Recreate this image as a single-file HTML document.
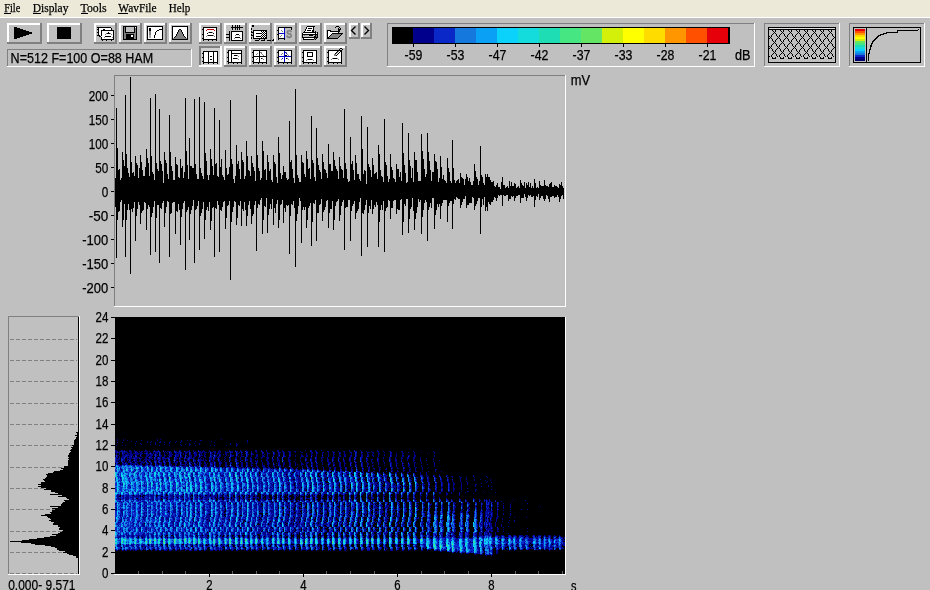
<!DOCTYPE html>
<html><head><meta charset="utf-8"><style>
html,body{margin:0;padding:0;width:930px;height:590px;overflow:hidden;background:#c0c0c0}
svg{display:block;font-family:"Liberation Sans",sans-serif;will-change:transform}
text{stroke:#000;stroke-width:0.25px}
</style></head><body>
<svg width="930" height="590" viewBox="0 0 930 590" shape-rendering="crispEdges">
<rect x="0" y="0" width="930" height="590" fill="#c0c0c0"/>
<rect x="0" y="0" width="930" height="17" fill="#ece9d8"/>
<rect x="0" y="17" width="930" height="1" fill="#fff"/>
<text x="4.3" y="12" font-family="Liberation Serif" font-size="13" textLength="16" lengthAdjust="spacingAndGlyphs">File</text>
<rect x="4" y="13" width="7" height="1" fill="#000"/>
<text x="32.7" y="12" font-family="Liberation Serif" font-size="13" textLength="35.7" lengthAdjust="spacingAndGlyphs">Display</text>
<rect x="33" y="13" width="8" height="1" fill="#000"/>
<text x="80.6" y="12" font-family="Liberation Serif" font-size="13" textLength="26" lengthAdjust="spacingAndGlyphs">Tools</text>
<rect x="81" y="13" width="7" height="1" fill="#000"/>
<text x="118.3" y="12" font-family="Liberation Serif" font-size="13" textLength="38.3" lengthAdjust="spacingAndGlyphs">WavFile</text>
<rect x="118" y="13" width="10" height="1" fill="#000"/>
<text x="168.8" y="12" font-family="Liberation Serif" font-size="13" textLength="21.5" lengthAdjust="spacingAndGlyphs">Help</text>
<rect x="7" y="23" width="35" height="21" fill="#c0c0c0"/>
<rect x="7" y="23" width="35" height="2" fill="#fff"/>
<rect x="7" y="23" width="2" height="21" fill="#fff"/>
<rect x="7" y="42" width="35" height="2" fill="#808080"/>
<rect x="40" y="23" width="2" height="21" fill="#808080"/>
<rect x="47" y="23" width="35" height="21" fill="#c0c0c0"/>
<rect x="47" y="23" width="35" height="2" fill="#fff"/>
<rect x="47" y="23" width="2" height="21" fill="#fff"/>
<rect x="47" y="42" width="35" height="2" fill="#808080"/>
<rect x="80" y="23" width="2" height="21" fill="#808080"/>
<path d="M14 27h3v1h3v1h3v1h3v1h3v1h3v2h-3v1h-3v1h-3v1h-3v1h-3v1h-3z" fill="#000"/>
<rect x="57" y="27" width="14" height="12" fill="#000"/>
<rect x="94" y="23" width="23" height="21" fill="#c0c0c0"/>
<rect x="94" y="23" width="23" height="2" fill="#fff"/>
<rect x="94" y="23" width="2" height="21" fill="#fff"/>
<rect x="94" y="42" width="23" height="2" fill="#808080"/>
<rect x="115" y="23" width="2" height="21" fill="#808080"/>
<rect x="119" y="23" width="23" height="21" fill="#c0c0c0"/>
<rect x="119" y="23" width="23" height="2" fill="#fff"/>
<rect x="119" y="23" width="2" height="21" fill="#fff"/>
<rect x="119" y="42" width="23" height="2" fill="#808080"/>
<rect x="140" y="23" width="2" height="21" fill="#808080"/>
<rect x="144" y="23" width="23" height="21" fill="#c0c0c0"/>
<rect x="144" y="23" width="23" height="2" fill="#fff"/>
<rect x="144" y="23" width="2" height="21" fill="#fff"/>
<rect x="144" y="42" width="23" height="2" fill="#808080"/>
<rect x="165" y="23" width="2" height="21" fill="#808080"/>
<rect x="169" y="23" width="23" height="21" fill="#c0c0c0"/>
<rect x="169" y="23" width="23" height="2" fill="#fff"/>
<rect x="169" y="23" width="2" height="21" fill="#fff"/>
<rect x="169" y="42" width="23" height="2" fill="#808080"/>
<rect x="190" y="23" width="2" height="21" fill="#808080"/>
<rect x="199" y="23" width="23" height="21" fill="#c0c0c0"/>
<rect x="199" y="23" width="23" height="2" fill="#fff"/>
<rect x="199" y="23" width="2" height="21" fill="#fff"/>
<rect x="199" y="42" width="23" height="2" fill="#808080"/>
<rect x="220" y="23" width="2" height="21" fill="#808080"/>
<rect x="224" y="23" width="23" height="21" fill="#c0c0c0"/>
<rect x="224" y="23" width="23" height="2" fill="#fff"/>
<rect x="224" y="23" width="2" height="21" fill="#fff"/>
<rect x="224" y="42" width="23" height="2" fill="#808080"/>
<rect x="245" y="23" width="2" height="21" fill="#808080"/>
<rect x="249" y="23" width="23" height="21" fill="#c0c0c0"/>
<rect x="249" y="23" width="23" height="2" fill="#fff"/>
<rect x="249" y="23" width="2" height="21" fill="#fff"/>
<rect x="249" y="42" width="23" height="2" fill="#808080"/>
<rect x="270" y="23" width="2" height="21" fill="#808080"/>
<rect x="274" y="23" width="23" height="21" fill="#c0c0c0"/>
<rect x="274" y="23" width="23" height="2" fill="#fff"/>
<rect x="274" y="23" width="2" height="21" fill="#fff"/>
<rect x="274" y="42" width="23" height="2" fill="#808080"/>
<rect x="295" y="23" width="2" height="21" fill="#808080"/>
<rect x="299" y="23" width="23" height="21" fill="#c0c0c0"/>
<rect x="299" y="23" width="23" height="2" fill="#fff"/>
<rect x="299" y="23" width="2" height="21" fill="#fff"/>
<rect x="299" y="42" width="23" height="2" fill="#808080"/>
<rect x="320" y="23" width="2" height="21" fill="#808080"/>
<rect x="324" y="23" width="23" height="21" fill="#c0c0c0"/>
<rect x="324" y="23" width="23" height="2" fill="#fff"/>
<rect x="324" y="23" width="2" height="21" fill="#fff"/>
<rect x="324" y="42" width="23" height="2" fill="#808080"/>
<rect x="345" y="23" width="2" height="21" fill="#808080"/>
<rect x="349" y="23" width="11" height="16" fill="#c0c0c0"/>
<rect x="349" y="23" width="11" height="2" fill="#fff"/>
<rect x="349" y="23" width="2" height="16" fill="#fff"/>
<rect x="349" y="37" width="11" height="2" fill="#808080"/>
<rect x="358" y="23" width="2" height="16" fill="#808080"/>
<rect x="361" y="23" width="11" height="16" fill="#c0c0c0"/>
<rect x="361" y="23" width="11" height="2" fill="#fff"/>
<rect x="361" y="23" width="2" height="16" fill="#fff"/>
<rect x="361" y="37" width="11" height="2" fill="#808080"/>
<rect x="370" y="23" width="2" height="16" fill="#808080"/>
<rect x="199" y="46" width="23" height="21" fill="#d0d0d0"/>
<rect x="199" y="46" width="23" height="2" fill="#808080"/>
<rect x="199" y="46" width="2" height="21" fill="#808080"/>
<rect x="199" y="65" width="23" height="2" fill="#fff"/>
<rect x="220" y="46" width="2" height="21" fill="#fff"/>
<rect x="224" y="46" width="23" height="21" fill="#c0c0c0"/>
<rect x="224" y="46" width="23" height="2" fill="#fff"/>
<rect x="224" y="46" width="2" height="21" fill="#fff"/>
<rect x="224" y="65" width="23" height="2" fill="#808080"/>
<rect x="245" y="46" width="2" height="21" fill="#808080"/>
<rect x="249" y="46" width="23" height="21" fill="#c0c0c0"/>
<rect x="249" y="46" width="23" height="2" fill="#fff"/>
<rect x="249" y="46" width="2" height="21" fill="#fff"/>
<rect x="249" y="65" width="23" height="2" fill="#808080"/>
<rect x="270" y="46" width="2" height="21" fill="#808080"/>
<rect x="274" y="46" width="23" height="21" fill="#c0c0c0"/>
<rect x="274" y="46" width="23" height="2" fill="#fff"/>
<rect x="274" y="46" width="2" height="21" fill="#fff"/>
<rect x="274" y="65" width="23" height="2" fill="#808080"/>
<rect x="295" y="46" width="2" height="21" fill="#808080"/>
<rect x="299" y="46" width="23" height="21" fill="#c0c0c0"/>
<rect x="299" y="46" width="23" height="2" fill="#fff"/>
<rect x="299" y="46" width="2" height="21" fill="#fff"/>
<rect x="299" y="65" width="23" height="2" fill="#808080"/>
<rect x="320" y="46" width="2" height="21" fill="#808080"/>
<rect x="324" y="46" width="23" height="21" fill="#c0c0c0"/>
<rect x="324" y="46" width="23" height="2" fill="#fff"/>
<rect x="324" y="46" width="2" height="21" fill="#fff"/>
<rect x="324" y="65" width="23" height="2" fill="#808080"/>
<rect x="345" y="46" width="2" height="21" fill="#808080"/>
<rect x="7" y="49" width="185" height="18" fill="#c0c0c0"/>
<rect x="7" y="49" width="185" height="1" fill="#808080"/>
<rect x="7" y="49" width="1" height="18" fill="#808080"/>
<rect x="7" y="66" width="185" height="1" fill="#fff"/>
<rect x="191" y="49" width="1" height="18" fill="#fff"/>
<text x="10.6" y="63.2" font-family="Liberation Sans" font-size="14.3" textLength="142.6" lengthAdjust="spacingAndGlyphs">N=512 F=100 O=88 HAM</text>
<rect x="387" y="23" width="368" height="44" fill="#c0c0c0"/>
<rect x="387" y="23" width="368" height="1" fill="#808080"/>
<rect x="387" y="23" width="1" height="44" fill="#808080"/>
<rect x="387" y="66" width="368" height="1" fill="#fff"/>
<rect x="754" y="23" width="1" height="44" fill="#fff"/>
<rect x="392" y="27" width="338" height="17" fill="#000"/>
<rect x="413" y="28" width="21" height="15" fill="#00008c"/>
<rect x="434" y="28" width="21" height="15" fill="#0a28c8"/>
<rect x="455" y="28" width="21" height="15" fill="#1478dc"/>
<rect x="476" y="28" width="21" height="15" fill="#0aa0f5"/>
<rect x="497" y="28" width="21" height="15" fill="#0ad2fa"/>
<rect x="518" y="28" width="21" height="15" fill="#14dcdc"/>
<rect x="539" y="28" width="21" height="15" fill="#1edcb4"/>
<rect x="560" y="28" width="21" height="15" fill="#46e682"/>
<rect x="581" y="28" width="21" height="15" fill="#64e664"/>
<rect x="602" y="28" width="21" height="15" fill="#d2f00a"/>
<rect x="623" y="28" width="21" height="15" fill="#ffff00"/>
<rect x="644" y="28" width="21" height="15" fill="#ffdc00"/>
<rect x="665" y="28" width="21" height="15" fill="#ff9600"/>
<rect x="686" y="28" width="21" height="15" fill="#ff5000"/>
<rect x="707" y="28" width="21" height="15" fill="#e6000a"/>
<rect x="413" y="44" width="1" height="3" fill="#000"/>
<text x="413.5" y="59.8" font-family="Liberation Sans" font-size="14.3" text-anchor="middle" textLength="17.8" lengthAdjust="spacingAndGlyphs">-59</text>
<rect x="455" y="44" width="1" height="3" fill="#000"/>
<text x="455.5" y="59.8" font-family="Liberation Sans" font-size="14.3" text-anchor="middle" textLength="17.8" lengthAdjust="spacingAndGlyphs">-53</text>
<rect x="497" y="44" width="1" height="3" fill="#000"/>
<text x="497.5" y="59.8" font-family="Liberation Sans" font-size="14.3" text-anchor="middle" textLength="17.8" lengthAdjust="spacingAndGlyphs">-47</text>
<rect x="539" y="44" width="1" height="3" fill="#000"/>
<text x="539.5" y="59.8" font-family="Liberation Sans" font-size="14.3" text-anchor="middle" textLength="17.8" lengthAdjust="spacingAndGlyphs">-42</text>
<rect x="581" y="44" width="1" height="3" fill="#000"/>
<text x="581.5" y="59.8" font-family="Liberation Sans" font-size="14.3" text-anchor="middle" textLength="17.8" lengthAdjust="spacingAndGlyphs">-37</text>
<rect x="623" y="44" width="1" height="3" fill="#000"/>
<text x="623.5" y="59.8" font-family="Liberation Sans" font-size="14.3" text-anchor="middle" textLength="17.8" lengthAdjust="spacingAndGlyphs">-33</text>
<rect x="665" y="44" width="1" height="3" fill="#000"/>
<text x="665.5" y="59.8" font-family="Liberation Sans" font-size="14.3" text-anchor="middle" textLength="17.8" lengthAdjust="spacingAndGlyphs">-28</text>
<rect x="707" y="44" width="1" height="3" fill="#000"/>
<text x="707.5" y="59.8" font-family="Liberation Sans" font-size="14.3" text-anchor="middle" textLength="17.8" lengthAdjust="spacingAndGlyphs">-21</text>
<text x="735" y="59.8" font-family="Liberation Sans" font-size="14.3" textLength="15.5" lengthAdjust="spacingAndGlyphs">dB</text>
<rect x="764" y="23" width="76" height="44" fill="#c0c0c0"/>
<rect x="764" y="23" width="76" height="1" fill="#808080"/>
<rect x="764" y="23" width="1" height="44" fill="#808080"/>
<rect x="764" y="66" width="76" height="1" fill="#fff"/>
<rect x="839" y="23" width="1" height="44" fill="#fff"/>
<rect x="768" y="27" width="68" height="36" fill="#000"/>
<rect x="769" y="28" width="66" height="34" fill="#c0c0c0"/>
<rect x="769" y="28" width="66" height="1" fill="#e0e0e0"/>
<rect x="769" y="29" width="66" height="1" fill="#000"/>
<path d="M772 30h1v1h-1zM775 30h1v1h-1zM780 30h1v1h-1zM783 30h1v1h-1zM788 30h1v1h-1zM791 30h1v1h-1zM796 30h1v1h-1zM799 30h1v1h-1zM804 30h1v1h-1zM807 30h1v1h-1zM812 30h1v1h-1zM815 30h1v1h-1zM820 30h1v1h-1zM823 30h1v1h-1zM828 30h1v1h-1zM831 30h1v1h-1zM773 31h1v1h-1zM775 31h1v1h-1zM781 31h1v1h-1zM783 31h1v1h-1zM789 31h1v1h-1zM791 31h1v1h-1zM797 31h1v1h-1zM799 31h1v1h-1zM805 31h1v1h-1zM807 31h1v1h-1zM813 31h1v1h-1zM815 31h1v1h-1zM821 31h1v1h-1zM823 31h1v1h-1zM829 31h1v1h-1zM831 31h1v1h-1zM774 32h1v1h-1zM782 32h1v1h-1zM790 32h1v1h-1zM798 32h1v1h-1zM806 32h1v1h-1zM814 32h1v1h-1zM822 32h1v1h-1zM830 32h1v1h-1zM773 33h1v1h-1zM775 33h1v1h-1zM781 33h1v1h-1zM783 33h1v1h-1zM789 33h1v1h-1zM791 33h1v1h-1zM797 33h1v1h-1zM799 33h1v1h-1zM805 33h1v1h-1zM807 33h1v1h-1zM813 33h1v1h-1zM815 33h1v1h-1zM821 33h1v1h-1zM823 33h1v1h-1zM829 33h1v1h-1zM831 33h1v1h-1zM772 34h1v1h-1zM776 34h1v1h-1zM780 34h1v1h-1zM784 34h1v1h-1zM788 34h1v1h-1zM792 34h1v1h-1zM796 34h1v1h-1zM800 34h1v1h-1zM804 34h1v1h-1zM808 34h1v1h-1zM812 34h1v1h-1zM816 34h1v1h-1zM820 34h1v1h-1zM824 34h1v1h-1zM828 34h1v1h-1zM832 34h1v1h-1zM771 35h1v1h-1zM776 35h1v1h-1zM779 35h1v1h-1zM784 35h1v1h-1zM787 35h1v1h-1zM792 35h1v1h-1zM795 35h1v1h-1zM800 35h1v1h-1zM803 35h1v1h-1zM808 35h1v1h-1zM811 35h1v1h-1zM816 35h1v1h-1zM819 35h1v1h-1zM824 35h1v1h-1zM827 35h1v1h-1zM832 35h1v1h-1zM769 36h1v1h-1zM771 36h1v1h-1zM777 36h1v1h-1zM779 36h1v1h-1zM785 36h1v1h-1zM787 36h1v1h-1zM793 36h1v1h-1zM795 36h1v1h-1zM801 36h1v1h-1zM803 36h1v1h-1zM809 36h1v1h-1zM811 36h1v1h-1zM817 36h1v1h-1zM819 36h1v1h-1zM825 36h1v1h-1zM827 36h1v1h-1zM833 36h1v1h-1zM770 37h1v1h-1zM778 37h1v1h-1zM786 37h1v1h-1zM794 37h1v1h-1zM802 37h1v1h-1zM810 37h1v1h-1zM818 37h1v1h-1zM826 37h1v1h-1zM834 37h1v1h-1zM769 38h1v1h-1zM771 38h1v1h-1zM777 38h1v1h-1zM779 38h1v1h-1zM785 38h1v1h-1zM787 38h1v1h-1zM793 38h1v1h-1zM795 38h1v1h-1zM801 38h1v1h-1zM803 38h1v1h-1zM809 38h1v1h-1zM811 38h1v1h-1zM817 38h1v1h-1zM819 38h1v1h-1zM825 38h1v1h-1zM827 38h1v1h-1zM833 38h1v1h-1zM772 39h1v1h-1zM776 39h1v1h-1zM780 39h1v1h-1zM784 39h1v1h-1zM788 39h1v1h-1zM792 39h1v1h-1zM796 39h1v1h-1zM800 39h1v1h-1zM804 39h1v1h-1zM808 39h1v1h-1zM812 39h1v1h-1zM816 39h1v1h-1zM820 39h1v1h-1zM824 39h1v1h-1zM828 39h1v1h-1zM832 39h1v1h-1zM772 40h1v1h-1zM775 40h1v1h-1zM780 40h1v1h-1zM783 40h1v1h-1zM788 40h1v1h-1zM791 40h1v1h-1zM796 40h1v1h-1zM799 40h1v1h-1zM804 40h1v1h-1zM807 40h1v1h-1zM812 40h1v1h-1zM815 40h1v1h-1zM820 40h1v1h-1zM823 40h1v1h-1zM828 40h1v1h-1zM831 40h1v1h-1zM773 41h1v1h-1zM775 41h1v1h-1zM781 41h1v1h-1zM783 41h1v1h-1zM789 41h1v1h-1zM791 41h1v1h-1zM797 41h1v1h-1zM799 41h1v1h-1zM805 41h1v1h-1zM807 41h1v1h-1zM813 41h1v1h-1zM815 41h1v1h-1zM821 41h1v1h-1zM823 41h1v1h-1zM829 41h1v1h-1zM831 41h1v1h-1zM774 42h1v1h-1zM782 42h1v1h-1zM790 42h1v1h-1zM798 42h1v1h-1zM806 42h1v1h-1zM814 42h1v1h-1zM822 42h1v1h-1zM830 42h1v1h-1zM773 43h1v1h-1zM775 43h1v1h-1zM781 43h1v1h-1zM783 43h1v1h-1zM789 43h1v1h-1zM791 43h1v1h-1zM797 43h1v1h-1zM799 43h1v1h-1zM805 43h1v1h-1zM807 43h1v1h-1zM813 43h1v1h-1zM815 43h1v1h-1zM821 43h1v1h-1zM823 43h1v1h-1zM829 43h1v1h-1zM831 43h1v1h-1zM772 44h1v1h-1zM776 44h1v1h-1zM780 44h1v1h-1zM784 44h1v1h-1zM788 44h1v1h-1zM792 44h1v1h-1zM796 44h1v1h-1zM800 44h1v1h-1zM804 44h1v1h-1zM808 44h1v1h-1zM812 44h1v1h-1zM816 44h1v1h-1zM820 44h1v1h-1zM824 44h1v1h-1zM828 44h1v1h-1zM832 44h1v1h-1zM771 45h1v1h-1zM776 45h1v1h-1zM779 45h1v1h-1zM784 45h1v1h-1zM787 45h1v1h-1zM792 45h1v1h-1zM795 45h1v1h-1zM800 45h1v1h-1zM803 45h1v1h-1zM808 45h1v1h-1zM811 45h1v1h-1zM816 45h1v1h-1zM819 45h1v1h-1zM824 45h1v1h-1zM827 45h1v1h-1zM832 45h1v1h-1zM769 46h1v1h-1zM771 46h1v1h-1zM777 46h1v1h-1zM779 46h1v1h-1zM785 46h1v1h-1zM787 46h1v1h-1zM793 46h1v1h-1zM795 46h1v1h-1zM801 46h1v1h-1zM803 46h1v1h-1zM809 46h1v1h-1zM811 46h1v1h-1zM817 46h1v1h-1zM819 46h1v1h-1zM825 46h1v1h-1zM827 46h1v1h-1zM833 46h1v1h-1zM770 47h1v1h-1zM778 47h1v1h-1zM786 47h1v1h-1zM794 47h1v1h-1zM802 47h1v1h-1zM810 47h1v1h-1zM818 47h1v1h-1zM826 47h1v1h-1zM834 47h1v1h-1zM769 48h1v1h-1zM771 48h1v1h-1zM777 48h1v1h-1zM779 48h1v1h-1zM785 48h1v1h-1zM787 48h1v1h-1zM793 48h1v1h-1zM795 48h1v1h-1zM801 48h1v1h-1zM803 48h1v1h-1zM809 48h1v1h-1zM811 48h1v1h-1zM817 48h1v1h-1zM819 48h1v1h-1zM825 48h1v1h-1zM827 48h1v1h-1zM833 48h1v1h-1zM772 49h1v1h-1zM776 49h1v1h-1zM780 49h1v1h-1zM784 49h1v1h-1zM788 49h1v1h-1zM792 49h1v1h-1zM796 49h1v1h-1zM800 49h1v1h-1zM804 49h1v1h-1zM808 49h1v1h-1zM812 49h1v1h-1zM816 49h1v1h-1zM820 49h1v1h-1zM824 49h1v1h-1zM828 49h1v1h-1zM832 49h1v1h-1zM772 50h1v1h-1zM775 50h1v1h-1zM780 50h1v1h-1zM783 50h1v1h-1zM788 50h1v1h-1zM791 50h1v1h-1zM796 50h1v1h-1zM799 50h1v1h-1zM804 50h1v1h-1zM807 50h1v1h-1zM812 50h1v1h-1zM815 50h1v1h-1zM820 50h1v1h-1zM823 50h1v1h-1zM828 50h1v1h-1zM831 50h1v1h-1zM773 51h1v1h-1zM775 51h1v1h-1zM781 51h1v1h-1zM783 51h1v1h-1zM789 51h1v1h-1zM791 51h1v1h-1zM797 51h1v1h-1zM799 51h1v1h-1zM805 51h1v1h-1zM807 51h1v1h-1zM813 51h1v1h-1zM815 51h1v1h-1zM821 51h1v1h-1zM823 51h1v1h-1zM829 51h1v1h-1zM831 51h1v1h-1zM774 52h1v1h-1zM782 52h1v1h-1zM790 52h1v1h-1zM798 52h1v1h-1zM806 52h1v1h-1zM814 52h1v1h-1zM822 52h1v1h-1zM830 52h1v1h-1zM773 53h1v1h-1zM775 53h1v1h-1zM781 53h1v1h-1zM783 53h1v1h-1zM789 53h1v1h-1zM791 53h1v1h-1zM797 53h1v1h-1zM799 53h1v1h-1zM805 53h1v1h-1zM807 53h1v1h-1zM813 53h1v1h-1zM815 53h1v1h-1zM821 53h1v1h-1zM823 53h1v1h-1zM829 53h1v1h-1zM831 53h1v1h-1zM772 54h1v1h-1zM776 54h1v1h-1zM780 54h1v1h-1zM784 54h1v1h-1zM788 54h1v1h-1zM792 54h1v1h-1zM796 54h1v1h-1zM800 54h1v1h-1zM804 54h1v1h-1zM808 54h1v1h-1zM812 54h1v1h-1zM816 54h1v1h-1zM820 54h1v1h-1zM824 54h1v1h-1zM828 54h1v1h-1zM832 54h1v1h-1zM771 55h1v1h-1zM776 55h1v1h-1zM779 55h1v1h-1zM784 55h1v1h-1zM787 55h1v1h-1zM792 55h1v1h-1zM795 55h1v1h-1zM800 55h1v1h-1zM803 55h1v1h-1zM808 55h1v1h-1zM811 55h1v1h-1zM816 55h1v1h-1zM819 55h1v1h-1zM824 55h1v1h-1zM827 55h1v1h-1zM832 55h1v1h-1zM769 56h1v1h-1zM771 56h1v1h-1zM777 56h1v1h-1zM779 56h1v1h-1zM785 56h1v1h-1zM787 56h1v1h-1zM793 56h1v1h-1zM795 56h1v1h-1zM801 56h1v1h-1zM803 56h1v1h-1zM809 56h1v1h-1zM811 56h1v1h-1zM817 56h1v1h-1zM819 56h1v1h-1zM825 56h1v1h-1zM827 56h1v1h-1zM833 56h1v1h-1z" fill="#000"/>
<rect x="772" y="57" width="1" height="1" fill="#000"/>
<rect x="775" y="57" width="1" height="1" fill="#000"/>
<rect x="772" y="58" width="4" height="1" fill="#000"/>
<rect x="780" y="57" width="1" height="1" fill="#000"/>
<rect x="783" y="57" width="1" height="1" fill="#000"/>
<rect x="780" y="58" width="4" height="1" fill="#000"/>
<rect x="788" y="57" width="1" height="1" fill="#000"/>
<rect x="791" y="57" width="1" height="1" fill="#000"/>
<rect x="788" y="58" width="4" height="1" fill="#000"/>
<rect x="796" y="57" width="1" height="1" fill="#000"/>
<rect x="799" y="57" width="1" height="1" fill="#000"/>
<rect x="796" y="58" width="4" height="1" fill="#000"/>
<rect x="804" y="57" width="1" height="1" fill="#000"/>
<rect x="807" y="57" width="1" height="1" fill="#000"/>
<rect x="804" y="58" width="4" height="1" fill="#000"/>
<rect x="812" y="57" width="1" height="1" fill="#000"/>
<rect x="815" y="57" width="1" height="1" fill="#000"/>
<rect x="812" y="58" width="4" height="1" fill="#000"/>
<rect x="820" y="57" width="1" height="1" fill="#000"/>
<rect x="823" y="57" width="1" height="1" fill="#000"/>
<rect x="820" y="58" width="4" height="1" fill="#000"/>
<rect x="828" y="57" width="1" height="1" fill="#000"/>
<rect x="831" y="57" width="1" height="1" fill="#000"/>
<rect x="828" y="58" width="4" height="1" fill="#000"/>
<rect x="849" y="23" width="76" height="44" fill="#c0c0c0"/>
<rect x="849" y="23" width="76" height="1" fill="#808080"/>
<rect x="849" y="23" width="1" height="44" fill="#808080"/>
<rect x="849" y="66" width="76" height="1" fill="#fff"/>
<rect x="924" y="23" width="1" height="44" fill="#fff"/>
<rect x="853" y="27" width="68" height="36" fill="#000"/>
<rect x="854" y="28" width="66" height="34" fill="#c0c0c0"/>
<rect x="855" y="29" width="10" height="2" fill="#e6000a"/>
<rect x="855" y="31" width="10" height="2" fill="#ff5000"/>
<rect x="855" y="33" width="10" height="2" fill="#ff9600"/>
<rect x="855" y="35" width="10" height="2" fill="#ffdc00"/>
<rect x="855" y="37" width="10" height="2" fill="#ffff00"/>
<rect x="855" y="39" width="10" height="2" fill="#d2f00a"/>
<rect x="855" y="41" width="10" height="2" fill="#64e664"/>
<rect x="855" y="43" width="10" height="2" fill="#46e682"/>
<rect x="855" y="45" width="10" height="2" fill="#1edcb4"/>
<rect x="855" y="47" width="10" height="2" fill="#14dcdc"/>
<rect x="855" y="49" width="10" height="2" fill="#0ad2fa"/>
<rect x="855" y="51" width="10" height="2" fill="#0aa0f5"/>
<rect x="855" y="53" width="10" height="2" fill="#1478dc"/>
<rect x="855" y="55" width="10" height="2" fill="#0a28c8"/>
<rect x="855" y="57" width="10" height="2" fill="#00008c"/>
<rect x="855" y="59" width="10" height="2" fill="#00006e"/>
<rect x="866" y="28" width="1" height="34" fill="#000"/>
<polyline points="868.5,61 868.5,55 869.5,51.5 870.5,47.5 871.5,44.5 872.5,42 874.5,40 876.5,38 878.5,36 882,34.5 887.5,32.5 897.5,32.5 897.5,30.5 917.5,30.5 918.5,29.5" fill="none" stroke="#000" stroke-width="1.3"/>
<rect x="114" y="75" width="452" height="232" fill="#c0c0c0"/>
<rect x="114" y="75" width="451" height="1" fill="#808080"/>
<rect x="114" y="75" width="1" height="231" fill="#808080"/>
<rect x="114" y="306" width="452" height="1" fill="#fff"/>
<rect x="565" y="75" width="1" height="232" fill="#fff"/>
<text x="570.8" y="85.2" font-family="Liberation Sans" font-size="14.3" textLength="19.4" lengthAdjust="spacingAndGlyphs">mV</text>
<rect x="111" y="95" width="3" height="1" fill="#000"/>
<text x="108.3" y="100.6" font-family="Liberation Sans" font-size="14.3" text-anchor="end" textLength="19.5" lengthAdjust="spacingAndGlyphs">200</text>
<rect x="111" y="119" width="3" height="1" fill="#000"/>
<text x="108.3" y="124.6" font-family="Liberation Sans" font-size="14.3" text-anchor="end" textLength="19.5" lengthAdjust="spacingAndGlyphs">150</text>
<rect x="111" y="143" width="3" height="1" fill="#000"/>
<text x="108.3" y="148.6" font-family="Liberation Sans" font-size="14.3" text-anchor="end" textLength="19.5" lengthAdjust="spacingAndGlyphs">100</text>
<rect x="111" y="167" width="3" height="1" fill="#000"/>
<text x="108.3" y="172.6" font-family="Liberation Sans" font-size="14.3" text-anchor="end" textLength="13.0" lengthAdjust="spacingAndGlyphs">50</text>
<rect x="111" y="191" width="3" height="1" fill="#000"/>
<text x="108.3" y="196.6" font-family="Liberation Sans" font-size="14.3" text-anchor="end" textLength="6.5" lengthAdjust="spacingAndGlyphs">0</text>
<rect x="111" y="215" width="3" height="1" fill="#000"/>
<text x="108.3" y="220.6" font-family="Liberation Sans" font-size="14.3" text-anchor="end" textLength="19.5" lengthAdjust="spacingAndGlyphs">-50</text>
<rect x="111" y="239" width="3" height="1" fill="#000"/>
<text x="108.3" y="244.6" font-family="Liberation Sans" font-size="14.3" text-anchor="end" textLength="26.0" lengthAdjust="spacingAndGlyphs">-100</text>
<rect x="111" y="263" width="3" height="1" fill="#000"/>
<text x="108.3" y="268.6" font-family="Liberation Sans" font-size="14.3" text-anchor="end" textLength="26.0" lengthAdjust="spacingAndGlyphs">-150</text>
<rect x="111" y="287" width="3" height="1" fill="#000"/>
<text x="108.3" y="292.6" font-family="Liberation Sans" font-size="14.3" text-anchor="end" textLength="26.0" lengthAdjust="spacingAndGlyphs">-200</text>
<path d="M115.5 178V207M116.5 108V258M117.5 148V220M118.5 170V212M119.5 169V211M120.5 180V202M121.5 178V200M122.5 152V227M123.5 160V220M124.5 166V204M125.5 95V257M126.5 154V220M127.5 168V210M128.5 173V204M129.5 177V210M130.5 77V274M131.5 162V209M132.5 173V212M133.5 172V208M134.5 176V202M135.5 156V241M136.5 163V216M137.5 165V209M138.5 178V202M139.5 168V205M140.5 155V224M141.5 162V213M142.5 170V211M143.5 176V210M144.5 176V202M145.5 167V203M146.5 149V230M147.5 158V209M148.5 163V205M149.5 176V207M150.5 98V255M151.5 156V217M152.5 172V213M153.5 174V207M154.5 180V201M155.5 94V252M156.5 163V218M157.5 169V205M158.5 171V205M159.5 109V263M160.5 161V208M161.5 164V209M162.5 171V203M163.5 183V201M164.5 152V227M165.5 160V213M166.5 163V207M167.5 174V201M168.5 179V202M169.5 115V257M170.5 152V214M171.5 166V213M172.5 171V203M173.5 180V202M174.5 180V202M175.5 157V234M176.5 164V211M177.5 165V212M178.5 177V204M179.5 178V210M180.5 159V245M181.5 168V217M182.5 166V209M183.5 178V203M184.5 172V201M185.5 98V270M186.5 151V212M187.5 165V210M188.5 179V207M189.5 138V240M190.5 166V214M191.5 166V210M192.5 168V206M193.5 168V200M194.5 99V263M195.5 164V210M196.5 174V209M197.5 179V206M198.5 179V201M199.5 97V250M200.5 168V216M201.5 173V213M202.5 176V209M203.5 179V202M204.5 102V239M205.5 153V220M206.5 161V210M207.5 175V207M208.5 180V211M209.5 175V202M210.5 149V230M211.5 159V221M212.5 166V208M213.5 175V207M214.5 108V257M215.5 164V208M216.5 163V209M217.5 176V201M218.5 177V205M219.5 120V252M220.5 167V210M221.5 159V211M222.5 175V207M223.5 177V202M224.5 180V201M225.5 150V229M226.5 168V218M227.5 175V206M228.5 174V205M229.5 167V201M230.5 100V280M231.5 159V222M232.5 164V212M233.5 179V207M234.5 183V201M235.5 176V202M236.5 145V225M237.5 164V218M238.5 161V205M239.5 169V206M240.5 179V201M241.5 152V226M242.5 160V209M243.5 162V211M244.5 179V202M245.5 176V210M246.5 141V226M247.5 156V216M248.5 170V205M249.5 171V201M250.5 176V209M251.5 156V224M252.5 163V216M253.5 167V214M254.5 171V205M255.5 181V201M256.5 95V251M257.5 155V208M258.5 168V204M259.5 171V205M260.5 180V200M261.5 178V198M262.5 141V234M263.5 151V220M264.5 170V206M265.5 169V207M266.5 180V198M267.5 155V233M268.5 162V215M269.5 171V209M270.5 169V204M271.5 180V209M272.5 182V199M273.5 155V225M274.5 162V208M275.5 164V213M276.5 177V204M277.5 183V200M278.5 137V228M279.5 153V220M280.5 173V205M281.5 179V204M282.5 175V200M283.5 166V223M284.5 172V208M285.5 172V212M286.5 178V205M287.5 180V206M288.5 179V205M289.5 121V254M290.5 162V216M291.5 160V204M292.5 169V205M293.5 178V201M294.5 183V208M295.5 89V267M296.5 155V221M297.5 175V214M298.5 178V206M299.5 182V198M300.5 182V201M301.5 155V243M302.5 162V210M303.5 163V207M304.5 174V210M305.5 177V207M306.5 151V228M307.5 159V220M308.5 169V208M309.5 168V206M310.5 179V203M311.5 116V246M312.5 160V222M313.5 163V203M314.5 177V204M315.5 181V200M316.5 128V241M317.5 158V213M318.5 165V213M319.5 170V205M320.5 172V204M321.5 179V199M322.5 154V221M323.5 162V212M324.5 169V210M325.5 170V207M326.5 173V201M327.5 178V200M328.5 144V228M329.5 164V213M330.5 164V209M331.5 171V209M332.5 171V201M333.5 152V230M334.5 160V220M335.5 166V206M336.5 169V202M337.5 171V201M338.5 179V199M339.5 157V221M340.5 166V215M341.5 169V206M342.5 170V202M343.5 178V200M344.5 109V250M345.5 163V208M346.5 169V207M347.5 179V207M348.5 182V200M349.5 181V200M350.5 137V241M351.5 164V211M352.5 161V206M353.5 170V204M354.5 180V201M355.5 155V219M356.5 163V213M357.5 174V211M358.5 174V209M359.5 179V202M360.5 181V198M361.5 116V256M362.5 149V213M363.5 174V214M364.5 170V210M365.5 171V205M366.5 184V200M367.5 127V247M368.5 164V213M369.5 167V206M370.5 170V209M371.5 177V200M372.5 158V214M373.5 165V209M374.5 174V205M375.5 173V207M376.5 172V202M377.5 179V205M378.5 145V247M379.5 154V222M380.5 170V210M381.5 176V205M382.5 177V210M383.5 182V201M384.5 119V252M385.5 162V211M386.5 165V208M387.5 176V207M388.5 182V200M389.5 179V201M390.5 154V219M391.5 167V208M392.5 170V208M393.5 178V201M394.5 179V200M395.5 182V200M396.5 164V214M397.5 169V209M398.5 169V210M399.5 177V210M400.5 172V200M401.5 181V199M402.5 123V235M403.5 153V222M404.5 165V204M405.5 173V206M406.5 183V199M407.5 182V199M408.5 133V233M409.5 160V219M410.5 166V209M411.5 178V207M412.5 168V198M413.5 182V211M414.5 152V230M415.5 160V219M416.5 160V213M417.5 172V207M418.5 181V199M419.5 181V202M420.5 181V200M421.5 134V234M422.5 151V217M423.5 159V210M424.5 169V203M425.5 177V200M426.5 174V202M427.5 133V241M428.5 152V210M429.5 161V207M430.5 170V203M431.5 181V208M432.5 172V198M433.5 172V198M434.5 154V229M435.5 161V215M436.5 162V210M437.5 169V204M438.5 182V207M439.5 178V204M440.5 156V219M441.5 167V206M442.5 179V203M443.5 175V200M444.5 180V200M445.5 181V200M446.5 183V200M447.5 158V222M448.5 168V206M449.5 172V203M450.5 181V201M451.5 183V201M452.5 140V229M453.5 168V204M454.5 180V199M455.5 183V200M456.5 181V197M457.5 180V198M458.5 179V199M459.5 183V199M460.5 173V208M461.5 177V205M462.5 178V202M463.5 179V199M464.5 185V199M465.5 179V196M466.5 174V208M467.5 177V205M468.5 181V205M469.5 178V203M470.5 182V203M471.5 185V203M472.5 185V197M473.5 181V198M474.5 164V210M475.5 171V206M476.5 177V204M477.5 179V201M478.5 185V198M479.5 181V198M480.5 146V234M481.5 175V207M482.5 177V199M483.5 183V205M484.5 185V197M485.5 174V211M486.5 177V207M487.5 174V211M488.5 177V202M489.5 177V204M490.5 180V205M491.5 182V202M492.5 182V202M493.5 181V200M494.5 186V197M495.5 187V198M496.5 185V201M497.5 183V198M498.5 187V195M499.5 187V196M500.5 189V195M501.5 182V195M502.5 177V206M503.5 185V195M504.5 185V196M505.5 188V196M506.5 187V195M507.5 186V195M508.5 188V201M509.5 181V199M510.5 186V199M511.5 182V196M512.5 186V197M513.5 186V196M514.5 183V201M515.5 184V198M516.5 188V196M517.5 187V196M518.5 186V195M519.5 188V195M520.5 180V203M521.5 183V198M522.5 185V198M523.5 186V198M524.5 182V194M525.5 188V197M526.5 183V201M527.5 185V198M528.5 182V195M529.5 187V196M530.5 183V195M531.5 188V197M532.5 186V197M533.5 188V196M534.5 179V207M535.5 183V200M536.5 188V196M537.5 187V197M538.5 188V194M539.5 181V200M540.5 185V198M541.5 186V196M542.5 186V196M543.5 186V199M544.5 180V201M545.5 185V199M546.5 186V195M547.5 186V196M548.5 187V199M549.5 184V202M550.5 183V197M551.5 182V197M552.5 187V196M553.5 187V196M554.5 185V198M555.5 186V197M556.5 186V197M557.5 187V195M558.5 188V197M559.5 184V202M560.5 185V199M561.5 182V196M562.5 186V195M563.5 188V199" stroke="#000" stroke-width="1" fill="none"/>
<rect x="97" y="27" width="14" height="1" fill="#000"/>
<rect x="98" y="28" width="1" height="1" fill="#000"/>
<rect x="99" y="28" width="12" height="1" fill="#fff"/>
<rect x="111" y="28" width="1" height="1" fill="#000"/>
<rect x="97" y="29" width="2" height="1" fill="#000"/>
<rect x="99" y="29" width="4" height="1" fill="#fff"/>
<rect x="103" y="29" width="2" height="1" fill="#000"/>
<rect x="105" y="29" width="6" height="1" fill="#fff"/>
<rect x="111" y="29" width="1" height="1" fill="#000"/>
<rect x="98" y="30" width="1" height="1" fill="#000"/>
<rect x="99" y="30" width="2" height="1" fill="#fff"/>
<rect x="101" y="30" width="13" height="1" fill="#000"/>
<rect x="98" y="31" width="1" height="1" fill="#000"/>
<rect x="99" y="31" width="2" height="1" fill="#fff"/>
<rect x="101" y="31" width="1" height="1" fill="#000"/>
<rect x="102" y="31" width="11" height="1" fill="#fff"/>
<rect x="113" y="31" width="1" height="1" fill="#000"/>
<rect x="97" y="32" width="2" height="1" fill="#000"/>
<rect x="99" y="32" width="2" height="1" fill="#fff"/>
<rect x="101" y="32" width="1" height="1" fill="#000"/>
<rect x="102" y="32" width="6" height="1" fill="#fff"/>
<rect x="108" y="32" width="1" height="1" fill="#000"/>
<rect x="109" y="32" width="4" height="1" fill="#fff"/>
<rect x="113" y="32" width="1" height="1" fill="#000"/>
<rect x="98" y="33" width="1" height="1" fill="#000"/>
<rect x="99" y="33" width="2" height="1" fill="#fff"/>
<rect x="101" y="33" width="1" height="1" fill="#000"/>
<rect x="102" y="33" width="4" height="1" fill="#fff"/>
<rect x="106" y="33" width="1" height="1" fill="#808080"/>
<rect x="107" y="33" width="3" height="1" fill="#000"/>
<rect x="110" y="33" width="1" height="1" fill="#808080"/>
<rect x="111" y="33" width="2" height="1" fill="#fff"/>
<rect x="113" y="33" width="1" height="1" fill="#000"/>
<rect x="98" y="34" width="1" height="1" fill="#000"/>
<rect x="99" y="34" width="2" height="1" fill="#fff"/>
<rect x="101" y="34" width="1" height="1" fill="#000"/>
<rect x="102" y="34" width="3" height="1" fill="#fff"/>
<rect x="105" y="34" width="1" height="1" fill="#808080"/>
<rect x="106" y="34" width="5" height="1" fill="#fff"/>
<rect x="111" y="34" width="1" height="1" fill="#808080"/>
<rect x="112" y="34" width="1" height="1" fill="#fff"/>
<rect x="113" y="34" width="1" height="1" fill="#000"/>
<rect x="97" y="35" width="3" height="1" fill="#000"/>
<rect x="100" y="35" width="1" height="1" fill="#fff"/>
<rect x="101" y="35" width="1" height="1" fill="#000"/>
<rect x="102" y="35" width="11" height="1" fill="#fff"/>
<rect x="113" y="35" width="1" height="1" fill="#000"/>
<rect x="99" y="36" width="2" height="1" fill="#000"/>
<rect x="101" y="36" width="4" height="1" fill="#fff"/>
<rect x="105" y="36" width="6" height="1" fill="#000"/>
<rect x="111" y="36" width="2" height="1" fill="#fff"/>
<rect x="113" y="36" width="1" height="1" fill="#000"/>
<rect x="101" y="37" width="1" height="1" fill="#000"/>
<rect x="102" y="37" width="2" height="1" fill="#fff"/>
<rect x="104" y="37" width="1" height="1" fill="#808080"/>
<rect x="105" y="37" width="7" height="1" fill="#fff"/>
<rect x="112" y="37" width="1" height="1" fill="#808080"/>
<rect x="113" y="37" width="1" height="1" fill="#000"/>
<rect x="101" y="38" width="1" height="1" fill="#000"/>
<rect x="102" y="38" width="11" height="1" fill="#fff"/>
<rect x="113" y="38" width="1" height="1" fill="#000"/>
<rect x="101" y="39" width="13" height="1" fill="#000"/>
<rect x="102" y="40" width="1" height="1" fill="#000"/>
<rect x="106" y="40" width="1" height="1" fill="#000"/>
<rect x="111" y="40" width="1" height="1" fill="#000"/>
<rect x="123" y="26" width="14" height="1" fill="#000"/>
<rect x="123" y="27" width="1" height="1" fill="#000"/>
<rect x="124" y="27" width="1" height="1" fill="#808080"/>
<rect x="125" y="27" width="1" height="1" fill="#000"/>
<rect x="126" y="27" width="8" height="1" fill="#c0c0c0"/>
<rect x="134" y="27" width="1" height="1" fill="#000"/>
<rect x="135" y="27" width="1" height="1" fill="#fff"/>
<rect x="136" y="27" width="1" height="1" fill="#000"/>
<rect x="123" y="28" width="1" height="1" fill="#000"/>
<rect x="124" y="28" width="1" height="1" fill="#808080"/>
<rect x="125" y="28" width="1" height="1" fill="#000"/>
<rect x="126" y="28" width="8" height="1" fill="#c0c0c0"/>
<rect x="134" y="28" width="1" height="1" fill="#000"/>
<rect x="135" y="28" width="1" height="1" fill="#808080"/>
<rect x="136" y="28" width="1" height="1" fill="#000"/>
<rect x="123" y="29" width="1" height="1" fill="#000"/>
<rect x="124" y="29" width="1" height="1" fill="#808080"/>
<rect x="125" y="29" width="1" height="1" fill="#000"/>
<rect x="126" y="29" width="8" height="1" fill="#c0c0c0"/>
<rect x="134" y="29" width="1" height="1" fill="#000"/>
<rect x="135" y="29" width="1" height="1" fill="#808080"/>
<rect x="136" y="29" width="1" height="1" fill="#000"/>
<rect x="123" y="30" width="1" height="1" fill="#000"/>
<rect x="124" y="30" width="1" height="1" fill="#808080"/>
<rect x="125" y="30" width="1" height="1" fill="#000"/>
<rect x="126" y="30" width="8" height="1" fill="#c0c0c0"/>
<rect x="134" y="30" width="1" height="1" fill="#000"/>
<rect x="135" y="30" width="1" height="1" fill="#808080"/>
<rect x="136" y="30" width="1" height="1" fill="#000"/>
<rect x="123" y="31" width="1" height="1" fill="#000"/>
<rect x="124" y="31" width="1" height="1" fill="#808080"/>
<rect x="125" y="31" width="1" height="1" fill="#000"/>
<rect x="126" y="31" width="8" height="1" fill="#c0c0c0"/>
<rect x="134" y="31" width="1" height="1" fill="#000"/>
<rect x="135" y="31" width="1" height="1" fill="#808080"/>
<rect x="136" y="31" width="1" height="1" fill="#000"/>
<rect x="123" y="32" width="1" height="1" fill="#000"/>
<rect x="124" y="32" width="1" height="1" fill="#808080"/>
<rect x="125" y="32" width="10" height="1" fill="#000"/>
<rect x="135" y="32" width="1" height="1" fill="#808080"/>
<rect x="136" y="32" width="1" height="1" fill="#000"/>
<rect x="123" y="33" width="1" height="1" fill="#000"/>
<rect x="124" y="33" width="12" height="1" fill="#808080"/>
<rect x="136" y="33" width="1" height="1" fill="#000"/>
<rect x="123" y="34" width="1" height="1" fill="#000"/>
<rect x="124" y="34" width="2" height="1" fill="#808080"/>
<rect x="126" y="34" width="8" height="1" fill="#000"/>
<rect x="134" y="34" width="2" height="1" fill="#808080"/>
<rect x="136" y="34" width="1" height="1" fill="#000"/>
<rect x="123" y="35" width="1" height="1" fill="#000"/>
<rect x="124" y="35" width="2" height="1" fill="#808080"/>
<rect x="126" y="35" width="5" height="1" fill="#000"/>
<rect x="131" y="35" width="2" height="1" fill="#fff"/>
<rect x="133" y="35" width="1" height="1" fill="#000"/>
<rect x="134" y="35" width="2" height="1" fill="#808080"/>
<rect x="136" y="35" width="1" height="1" fill="#000"/>
<rect x="123" y="36" width="1" height="1" fill="#000"/>
<rect x="124" y="36" width="2" height="1" fill="#808080"/>
<rect x="126" y="36" width="5" height="1" fill="#000"/>
<rect x="131" y="36" width="2" height="1" fill="#fff"/>
<rect x="133" y="36" width="1" height="1" fill="#000"/>
<rect x="134" y="36" width="2" height="1" fill="#808080"/>
<rect x="136" y="36" width="1" height="1" fill="#000"/>
<rect x="123" y="37" width="1" height="1" fill="#000"/>
<rect x="124" y="37" width="2" height="1" fill="#808080"/>
<rect x="126" y="37" width="8" height="1" fill="#000"/>
<rect x="134" y="37" width="2" height="1" fill="#808080"/>
<rect x="136" y="37" width="1" height="1" fill="#000"/>
<rect x="123" y="38" width="1" height="1" fill="#000"/>
<rect x="124" y="38" width="2" height="1" fill="#808080"/>
<rect x="126" y="38" width="8" height="1" fill="#000"/>
<rect x="134" y="38" width="2" height="1" fill="#808080"/>
<rect x="136" y="38" width="1" height="1" fill="#000"/>
<rect x="123" y="39" width="14" height="1" fill="#000"/>
<rect x="147" y="26" width="16" height="1" fill="#000"/>
<rect x="147" y="27" width="1" height="1" fill="#000"/>
<rect x="148" y="27" width="14" height="1" fill="#fff"/>
<rect x="162" y="27" width="1" height="1" fill="#000"/>
<rect x="147" y="28" width="1" height="1" fill="#000"/>
<rect x="148" y="28" width="1" height="1" fill="#fff"/>
<rect x="149" y="28" width="2" height="1" fill="#000"/>
<rect x="151" y="28" width="11" height="1" fill="#fff"/>
<rect x="162" y="28" width="1" height="1" fill="#000"/>
<rect x="147" y="29" width="1" height="1" fill="#000"/>
<rect x="148" y="29" width="1" height="1" fill="#fff"/>
<rect x="149" y="29" width="2" height="1" fill="#000"/>
<rect x="151" y="29" width="8" height="1" fill="#fff"/>
<rect x="159" y="29" width="4" height="1" fill="#000"/>
<rect x="147" y="30" width="1" height="1" fill="#000"/>
<rect x="148" y="30" width="1" height="1" fill="#fff"/>
<rect x="149" y="30" width="2" height="1" fill="#000"/>
<rect x="151" y="30" width="6" height="1" fill="#fff"/>
<rect x="157" y="30" width="2" height="1" fill="#000"/>
<rect x="159" y="30" width="3" height="1" fill="#fff"/>
<rect x="162" y="30" width="1" height="1" fill="#000"/>
<rect x="147" y="31" width="1" height="1" fill="#000"/>
<rect x="148" y="31" width="1" height="1" fill="#fff"/>
<rect x="149" y="31" width="2" height="1" fill="#808080"/>
<rect x="151" y="31" width="5" height="1" fill="#fff"/>
<rect x="156" y="31" width="1" height="1" fill="#000"/>
<rect x="157" y="31" width="5" height="1" fill="#fff"/>
<rect x="162" y="31" width="1" height="1" fill="#000"/>
<rect x="147" y="32" width="1" height="1" fill="#000"/>
<rect x="148" y="32" width="1" height="1" fill="#fff"/>
<rect x="149" y="32" width="2" height="1" fill="#808080"/>
<rect x="151" y="32" width="4" height="1" fill="#fff"/>
<rect x="155" y="32" width="1" height="1" fill="#000"/>
<rect x="156" y="32" width="6" height="1" fill="#fff"/>
<rect x="162" y="32" width="1" height="1" fill="#000"/>
<rect x="147" y="33" width="1" height="1" fill="#000"/>
<rect x="148" y="33" width="1" height="1" fill="#fff"/>
<rect x="149" y="33" width="2" height="1" fill="#808080"/>
<rect x="151" y="33" width="4" height="1" fill="#fff"/>
<rect x="155" y="33" width="1" height="1" fill="#000"/>
<rect x="156" y="33" width="6" height="1" fill="#fff"/>
<rect x="162" y="33" width="1" height="1" fill="#000"/>
<rect x="147" y="34" width="1" height="1" fill="#000"/>
<rect x="148" y="34" width="1" height="1" fill="#fff"/>
<rect x="149" y="34" width="2" height="1" fill="#808080"/>
<rect x="151" y="34" width="4" height="1" fill="#fff"/>
<rect x="155" y="34" width="1" height="1" fill="#000"/>
<rect x="156" y="34" width="6" height="1" fill="#fff"/>
<rect x="162" y="34" width="1" height="1" fill="#000"/>
<rect x="147" y="35" width="1" height="1" fill="#000"/>
<rect x="148" y="35" width="1" height="1" fill="#fff"/>
<rect x="149" y="35" width="2" height="1" fill="#a8a8a8"/>
<rect x="151" y="35" width="3" height="1" fill="#fff"/>
<rect x="154" y="35" width="1" height="1" fill="#000"/>
<rect x="155" y="35" width="7" height="1" fill="#fff"/>
<rect x="162" y="35" width="1" height="1" fill="#000"/>
<rect x="147" y="36" width="1" height="1" fill="#000"/>
<rect x="148" y="36" width="1" height="1" fill="#fff"/>
<rect x="149" y="36" width="2" height="1" fill="#a8a8a8"/>
<rect x="151" y="36" width="3" height="1" fill="#fff"/>
<rect x="154" y="36" width="1" height="1" fill="#000"/>
<rect x="155" y="36" width="7" height="1" fill="#fff"/>
<rect x="162" y="36" width="1" height="1" fill="#000"/>
<rect x="147" y="37" width="1" height="1" fill="#000"/>
<rect x="148" y="37" width="1" height="1" fill="#fff"/>
<rect x="149" y="37" width="2" height="1" fill="#a8a8a8"/>
<rect x="151" y="37" width="3" height="1" fill="#fff"/>
<rect x="154" y="37" width="1" height="1" fill="#000"/>
<rect x="155" y="37" width="7" height="1" fill="#fff"/>
<rect x="162" y="37" width="1" height="1" fill="#000"/>
<rect x="147" y="38" width="1" height="1" fill="#000"/>
<rect x="148" y="38" width="14" height="1" fill="#fff"/>
<rect x="162" y="38" width="1" height="1" fill="#000"/>
<rect x="147" y="39" width="16" height="1" fill="#000"/>
<rect x="172" y="26" width="16" height="1" fill="#000"/>
<rect x="172" y="27" width="1" height="1" fill="#000"/>
<rect x="173" y="27" width="14" height="1" fill="#fff"/>
<rect x="187" y="27" width="1" height="1" fill="#000"/>
<rect x="172" y="28" width="1" height="1" fill="#000"/>
<rect x="173" y="28" width="14" height="1" fill="#fff"/>
<rect x="187" y="28" width="1" height="1" fill="#000"/>
<rect x="172" y="29" width="1" height="1" fill="#000"/>
<rect x="173" y="29" width="6" height="1" fill="#fff"/>
<rect x="179" y="29" width="2" height="1" fill="#000"/>
<rect x="181" y="29" width="6" height="1" fill="#fff"/>
<rect x="187" y="29" width="1" height="1" fill="#000"/>
<rect x="172" y="30" width="1" height="1" fill="#000"/>
<rect x="173" y="30" width="5" height="1" fill="#fff"/>
<rect x="178" y="30" width="1" height="1" fill="#000"/>
<rect x="179" y="30" width="2" height="1" fill="#808080"/>
<rect x="181" y="30" width="1" height="1" fill="#000"/>
<rect x="182" y="30" width="5" height="1" fill="#fff"/>
<rect x="187" y="30" width="1" height="1" fill="#000"/>
<rect x="172" y="31" width="1" height="1" fill="#000"/>
<rect x="173" y="31" width="5" height="1" fill="#fff"/>
<rect x="178" y="31" width="1" height="1" fill="#000"/>
<rect x="179" y="31" width="2" height="1" fill="#808080"/>
<rect x="181" y="31" width="1" height="1" fill="#000"/>
<rect x="182" y="31" width="5" height="1" fill="#fff"/>
<rect x="187" y="31" width="1" height="1" fill="#000"/>
<rect x="172" y="32" width="1" height="1" fill="#000"/>
<rect x="173" y="32" width="4" height="1" fill="#fff"/>
<rect x="177" y="32" width="1" height="1" fill="#000"/>
<rect x="178" y="32" width="4" height="1" fill="#808080"/>
<rect x="182" y="32" width="1" height="1" fill="#000"/>
<rect x="183" y="32" width="4" height="1" fill="#fff"/>
<rect x="187" y="32" width="1" height="1" fill="#000"/>
<rect x="172" y="33" width="1" height="1" fill="#000"/>
<rect x="173" y="33" width="4" height="1" fill="#fff"/>
<rect x="177" y="33" width="1" height="1" fill="#000"/>
<rect x="178" y="33" width="4" height="1" fill="#808080"/>
<rect x="182" y="33" width="1" height="1" fill="#000"/>
<rect x="183" y="33" width="4" height="1" fill="#fff"/>
<rect x="187" y="33" width="1" height="1" fill="#000"/>
<rect x="172" y="34" width="1" height="1" fill="#000"/>
<rect x="173" y="34" width="3" height="1" fill="#fff"/>
<rect x="176" y="34" width="1" height="1" fill="#000"/>
<rect x="177" y="34" width="6" height="1" fill="#808080"/>
<rect x="183" y="34" width="1" height="1" fill="#000"/>
<rect x="184" y="34" width="3" height="1" fill="#fff"/>
<rect x="187" y="34" width="1" height="1" fill="#000"/>
<rect x="172" y="35" width="1" height="1" fill="#000"/>
<rect x="173" y="35" width="3" height="1" fill="#fff"/>
<rect x="176" y="35" width="1" height="1" fill="#000"/>
<rect x="177" y="35" width="6" height="1" fill="#808080"/>
<rect x="183" y="35" width="1" height="1" fill="#000"/>
<rect x="184" y="35" width="3" height="1" fill="#fff"/>
<rect x="187" y="35" width="1" height="1" fill="#000"/>
<rect x="172" y="36" width="1" height="1" fill="#000"/>
<rect x="173" y="36" width="2" height="1" fill="#fff"/>
<rect x="175" y="36" width="1" height="1" fill="#000"/>
<rect x="176" y="36" width="8" height="1" fill="#808080"/>
<rect x="184" y="36" width="1" height="1" fill="#000"/>
<rect x="185" y="36" width="2" height="1" fill="#fff"/>
<rect x="187" y="36" width="1" height="1" fill="#000"/>
<rect x="172" y="37" width="1" height="1" fill="#000"/>
<rect x="173" y="37" width="1" height="1" fill="#fff"/>
<rect x="174" y="37" width="1" height="1" fill="#000"/>
<rect x="175" y="37" width="10" height="1" fill="#808080"/>
<rect x="185" y="37" width="1" height="1" fill="#000"/>
<rect x="186" y="37" width="1" height="1" fill="#fff"/>
<rect x="187" y="37" width="1" height="1" fill="#000"/>
<rect x="172" y="38" width="1" height="1" fill="#000"/>
<rect x="173" y="38" width="14" height="1" fill="#808080"/>
<rect x="187" y="38" width="1" height="1" fill="#000"/>
<rect x="172" y="39" width="16" height="1" fill="#000"/>
<rect x="203" y="27" width="14" height="1" fill="#000"/>
<rect x="203" y="28" width="1" height="1" fill="#000"/>
<rect x="204" y="28" width="12" height="1" fill="#fff"/>
<rect x="216" y="28" width="1" height="1" fill="#000"/>
<rect x="202" y="29" width="2" height="1" fill="#000"/>
<rect x="204" y="29" width="3" height="1" fill="#fff"/>
<rect x="207" y="29" width="7" height="1" fill="#c00000"/>
<rect x="214" y="29" width="2" height="1" fill="#fff"/>
<rect x="216" y="29" width="1" height="1" fill="#000"/>
<rect x="203" y="30" width="1" height="1" fill="#000"/>
<rect x="204" y="30" width="2" height="1" fill="#fff"/>
<rect x="206" y="30" width="1" height="1" fill="#c00000"/>
<rect x="207" y="30" width="7" height="1" fill="#fff"/>
<rect x="214" y="30" width="1" height="1" fill="#c00000"/>
<rect x="215" y="30" width="1" height="1" fill="#fff"/>
<rect x="216" y="30" width="1" height="1" fill="#000"/>
<rect x="203" y="31" width="1" height="1" fill="#000"/>
<rect x="204" y="31" width="12" height="1" fill="#fff"/>
<rect x="216" y="31" width="1" height="1" fill="#000"/>
<rect x="203" y="32" width="1" height="1" fill="#000"/>
<rect x="204" y="32" width="4" height="1" fill="#fff"/>
<rect x="208" y="32" width="1" height="1" fill="#808080"/>
<rect x="209" y="32" width="3" height="1" fill="#000"/>
<rect x="212" y="32" width="1" height="1" fill="#808080"/>
<rect x="213" y="32" width="3" height="1" fill="#fff"/>
<rect x="216" y="32" width="1" height="1" fill="#000"/>
<rect x="203" y="33" width="1" height="1" fill="#000"/>
<rect x="204" y="33" width="3" height="1" fill="#fff"/>
<rect x="207" y="33" width="1" height="1" fill="#000"/>
<rect x="208" y="33" width="5" height="1" fill="#fff"/>
<rect x="213" y="33" width="1" height="1" fill="#000"/>
<rect x="214" y="33" width="2" height="1" fill="#fff"/>
<rect x="216" y="33" width="1" height="1" fill="#000"/>
<rect x="202" y="34" width="2" height="1" fill="#000"/>
<rect x="204" y="34" width="12" height="1" fill="#fff"/>
<rect x="216" y="34" width="1" height="1" fill="#000"/>
<rect x="203" y="35" width="1" height="1" fill="#000"/>
<rect x="204" y="35" width="3" height="1" fill="#fff"/>
<rect x="207" y="35" width="1" height="1" fill="#808080"/>
<rect x="208" y="35" width="5" height="1" fill="#000"/>
<rect x="213" y="35" width="1" height="1" fill="#808080"/>
<rect x="214" y="35" width="2" height="1" fill="#fff"/>
<rect x="216" y="35" width="1" height="1" fill="#000"/>
<rect x="203" y="36" width="1" height="1" fill="#000"/>
<rect x="204" y="36" width="2" height="1" fill="#fff"/>
<rect x="206" y="36" width="1" height="1" fill="#808080"/>
<rect x="207" y="36" width="7" height="1" fill="#fff"/>
<rect x="214" y="36" width="1" height="1" fill="#808080"/>
<rect x="215" y="36" width="1" height="1" fill="#fff"/>
<rect x="216" y="36" width="1" height="1" fill="#000"/>
<rect x="203" y="37" width="1" height="1" fill="#000"/>
<rect x="204" y="37" width="12" height="1" fill="#fff"/>
<rect x="216" y="37" width="1" height="1" fill="#000"/>
<rect x="202" y="38" width="2" height="1" fill="#000"/>
<rect x="204" y="38" width="12" height="1" fill="#fff"/>
<rect x="216" y="38" width="1" height="1" fill="#000"/>
<rect x="203" y="39" width="14" height="1" fill="#000"/>
<rect x="203" y="40" width="1" height="1" fill="#000"/>
<rect x="208" y="40" width="1" height="1" fill="#000"/>
<rect x="212" y="40" width="1" height="1" fill="#000"/>
<rect x="216" y="40" width="1" height="1" fill="#000"/>
<rect x="232" y="25" width="1" height="1" fill="#000"/>
<rect x="235" y="25" width="1" height="1" fill="#000"/>
<rect x="237" y="25" width="1" height="1" fill="#000"/>
<rect x="239" y="25" width="1" height="1" fill="#000"/>
<rect x="232" y="26" width="1" height="1" fill="#000"/>
<rect x="235" y="26" width="1" height="1" fill="#000"/>
<rect x="237" y="26" width="1" height="1" fill="#000"/>
<rect x="239" y="26" width="1" height="1" fill="#000"/>
<rect x="231" y="27" width="12" height="1" fill="#000"/>
<rect x="232" y="28" width="1" height="1" fill="#000"/>
<rect x="235" y="28" width="1" height="1" fill="#000"/>
<rect x="237" y="28" width="1" height="1" fill="#000"/>
<rect x="239" y="28" width="1" height="1" fill="#000"/>
<rect x="232" y="29" width="1" height="1" fill="#000"/>
<rect x="235" y="29" width="1" height="1" fill="#000"/>
<rect x="237" y="29" width="1" height="1" fill="#000"/>
<rect x="239" y="29" width="1" height="1" fill="#000"/>
<rect x="229" y="31" width="1" height="1" fill="#000"/>
<rect x="231" y="31" width="12" height="1" fill="#000"/>
<rect x="229" y="32" width="1" height="1" fill="#000"/>
<rect x="231" y="32" width="1" height="1" fill="#000"/>
<rect x="232" y="32" width="10" height="1" fill="#fff"/>
<rect x="242" y="32" width="1" height="1" fill="#000"/>
<rect x="229" y="33" width="1" height="1" fill="#000"/>
<rect x="231" y="33" width="1" height="1" fill="#000"/>
<rect x="232" y="33" width="10" height="1" fill="#fff"/>
<rect x="242" y="33" width="1" height="1" fill="#000"/>
<rect x="226" y="34" width="4" height="1" fill="#000"/>
<rect x="231" y="34" width="1" height="1" fill="#000"/>
<rect x="232" y="34" width="4" height="1" fill="#fff"/>
<rect x="236" y="34" width="3" height="1" fill="#000"/>
<rect x="239" y="34" width="3" height="1" fill="#fff"/>
<rect x="242" y="34" width="1" height="1" fill="#000"/>
<rect x="229" y="35" width="1" height="1" fill="#000"/>
<rect x="231" y="35" width="1" height="1" fill="#000"/>
<rect x="232" y="35" width="3" height="1" fill="#fff"/>
<rect x="235" y="35" width="1" height="1" fill="#808080"/>
<rect x="236" y="35" width="3" height="1" fill="#fff"/>
<rect x="239" y="35" width="1" height="1" fill="#808080"/>
<rect x="240" y="35" width="2" height="1" fill="#fff"/>
<rect x="242" y="35" width="1" height="1" fill="#000"/>
<rect x="229" y="36" width="1" height="1" fill="#000"/>
<rect x="231" y="36" width="1" height="1" fill="#000"/>
<rect x="232" y="36" width="10" height="1" fill="#fff"/>
<rect x="242" y="36" width="1" height="1" fill="#000"/>
<rect x="226" y="37" width="4" height="1" fill="#000"/>
<rect x="231" y="37" width="1" height="1" fill="#000"/>
<rect x="232" y="37" width="3" height="1" fill="#fff"/>
<rect x="235" y="37" width="5" height="1" fill="#000"/>
<rect x="240" y="37" width="2" height="1" fill="#fff"/>
<rect x="242" y="37" width="1" height="1" fill="#000"/>
<rect x="229" y="38" width="1" height="1" fill="#000"/>
<rect x="231" y="38" width="1" height="1" fill="#000"/>
<rect x="232" y="38" width="2" height="1" fill="#fff"/>
<rect x="234" y="38" width="1" height="1" fill="#808080"/>
<rect x="235" y="38" width="5" height="1" fill="#fff"/>
<rect x="240" y="38" width="1" height="1" fill="#808080"/>
<rect x="241" y="38" width="1" height="1" fill="#fff"/>
<rect x="242" y="38" width="1" height="1" fill="#000"/>
<rect x="229" y="39" width="1" height="1" fill="#000"/>
<rect x="231" y="39" width="1" height="1" fill="#000"/>
<rect x="232" y="39" width="10" height="1" fill="#fff"/>
<rect x="242" y="39" width="1" height="1" fill="#000"/>
<rect x="229" y="40" width="1" height="1" fill="#000"/>
<rect x="231" y="40" width="12" height="1" fill="#000"/>
<rect x="307" y="26" width="8" height="1" fill="#000"/>
<rect x="306" y="27" width="1" height="1" fill="#000"/>
<rect x="307" y="27" width="6" height="1" fill="#fff"/>
<rect x="313" y="27" width="1" height="1" fill="#000"/>
<rect x="306" y="28" width="1" height="1" fill="#000"/>
<rect x="307" y="28" width="1" height="1" fill="#fff"/>
<rect x="308" y="28" width="4" height="1" fill="#000"/>
<rect x="312" y="28" width="1" height="1" fill="#fff"/>
<rect x="313" y="28" width="1" height="1" fill="#000"/>
<rect x="305" y="29" width="1" height="1" fill="#000"/>
<rect x="306" y="29" width="7" height="1" fill="#fff"/>
<rect x="313" y="29" width="1" height="1" fill="#000"/>
<rect x="305" y="30" width="1" height="1" fill="#000"/>
<rect x="306" y="30" width="1" height="1" fill="#fff"/>
<rect x="307" y="30" width="4" height="1" fill="#000"/>
<rect x="311" y="30" width="1" height="1" fill="#fff"/>
<rect x="312" y="30" width="2" height="1" fill="#000"/>
<rect x="304" y="31" width="1" height="1" fill="#000"/>
<rect x="305" y="31" width="7" height="1" fill="#fff"/>
<rect x="312" y="31" width="2" height="1" fill="#000"/>
<rect x="315" y="31" width="1" height="1" fill="#000"/>
<rect x="303" y="32" width="13" height="1" fill="#000"/>
<rect x="316" y="32" width="1" height="1" fill="#808080"/>
<rect x="317" y="32" width="1" height="1" fill="#000"/>
<rect x="302" y="33" width="1" height="1" fill="#000"/>
<rect x="303" y="33" width="12" height="1" fill="#fff"/>
<rect x="315" y="33" width="1" height="1" fill="#000"/>
<rect x="316" y="33" width="1" height="1" fill="#fff"/>
<rect x="317" y="33" width="1" height="1" fill="#000"/>
<rect x="302" y="34" width="16" height="1" fill="#000"/>
<rect x="302" y="35" width="1" height="1" fill="#000"/>
<rect x="303" y="35" width="1" height="1" fill="#c0c0c0"/>
<rect x="304" y="35" width="1" height="1" fill="#808080"/>
<rect x="305" y="35" width="4" height="1" fill="#c0c0c0"/>
<rect x="309" y="35" width="4" height="1" fill="#000"/>
<rect x="313" y="35" width="2" height="1" fill="#c0c0c0"/>
<rect x="315" y="35" width="1" height="1" fill="#000"/>
<rect x="316" y="35" width="1" height="1" fill="#808080"/>
<rect x="317" y="35" width="1" height="1" fill="#000"/>
<rect x="302" y="36" width="1" height="1" fill="#000"/>
<rect x="303" y="36" width="11" height="1" fill="#c0c0c0"/>
<rect x="314" y="36" width="2" height="1" fill="#000"/>
<rect x="316" y="36" width="1" height="1" fill="#808080"/>
<rect x="317" y="36" width="1" height="1" fill="#000"/>
<rect x="302" y="37" width="16" height="1" fill="#000"/>
<rect x="303" y="38" width="1" height="1" fill="#000"/>
<rect x="304" y="38" width="10" height="1" fill="#fff"/>
<rect x="314" y="38" width="1" height="1" fill="#000"/>
<rect x="315" y="38" width="1" height="1" fill="#808080"/>
<rect x="316" y="38" width="1" height="1" fill="#000"/>
<rect x="303" y="39" width="11" height="1" fill="#000"/>
<rect x="314" y="39" width="1" height="1" fill="#808080"/>
<rect x="315" y="39" width="1" height="1" fill="#000"/>
<rect x="336" y="26" width="3" height="1" fill="#000"/>
<rect x="335" y="27" width="1" height="1" fill="#000"/>
<rect x="339" y="27" width="1" height="1" fill="#000"/>
<rect x="338" y="28" width="1" height="1" fill="#000"/>
<rect x="340" y="28" width="1" height="1" fill="#000"/>
<rect x="338" y="29" width="3" height="1" fill="#000"/>
<rect x="327" y="30" width="4" height="1" fill="#000"/>
<rect x="338" y="30" width="2" height="1" fill="#000"/>
<rect x="327" y="31" width="1" height="1" fill="#000"/>
<rect x="328" y="31" width="2" height="1" fill="#fff"/>
<rect x="330" y="31" width="10" height="1" fill="#000"/>
<rect x="327" y="32" width="1" height="1" fill="#000"/>
<rect x="328" y="32" width="10" height="1" fill="#fff"/>
<rect x="338" y="32" width="1" height="1" fill="#000"/>
<rect x="327" y="33" width="1" height="1" fill="#000"/>
<rect x="328" y="33" width="4" height="1" fill="#fff"/>
<rect x="332" y="33" width="11" height="1" fill="#000"/>
<rect x="327" y="34" width="1" height="1" fill="#000"/>
<rect x="328" y="34" width="3" height="1" fill="#fff"/>
<rect x="331" y="34" width="1" height="1" fill="#000"/>
<rect x="332" y="34" width="9" height="1" fill="#808080"/>
<rect x="341" y="34" width="1" height="1" fill="#000"/>
<rect x="327" y="35" width="1" height="1" fill="#000"/>
<rect x="328" y="35" width="2" height="1" fill="#fff"/>
<rect x="330" y="35" width="1" height="1" fill="#000"/>
<rect x="331" y="35" width="9" height="1" fill="#808080"/>
<rect x="340" y="35" width="1" height="1" fill="#000"/>
<rect x="327" y="36" width="1" height="1" fill="#000"/>
<rect x="328" y="36" width="1" height="1" fill="#fff"/>
<rect x="329" y="36" width="1" height="1" fill="#000"/>
<rect x="330" y="36" width="9" height="1" fill="#808080"/>
<rect x="339" y="36" width="1" height="1" fill="#000"/>
<rect x="327" y="37" width="2" height="1" fill="#000"/>
<rect x="329" y="37" width="9" height="1" fill="#808080"/>
<rect x="338" y="37" width="1" height="1" fill="#000"/>
<rect x="327" y="38" width="11" height="1" fill="#000"/>
<rect x="203" y="51" width="15" height="12" fill="#000"/>
<rect x="204" y="52" width="13" height="10" fill="#fff"/>
<rect x="208" y="51" width="1" height="12" fill="#000"/>
<rect x="213" y="51" width="1" height="12" fill="#000"/>
<rect x="202" y="53" width="1" height="1" fill="#000"/>
<rect x="202" y="57" width="1" height="1" fill="#000"/>
<rect x="202" y="61" width="1" height="1" fill="#000"/>
<rect x="203" y="63" width="1" height="1" fill="#000"/>
<rect x="208" y="63" width="1" height="1" fill="#000"/>
<rect x="213" y="63" width="1" height="1" fill="#000"/>
<rect x="217" y="63" width="1" height="1" fill="#000"/>
<rect x="210" y="56" width="2" height="1" fill="#000"/>
<rect x="210" y="59" width="2" height="1" fill="#000"/>
<rect x="228" y="50" width="14" height="1" fill="#000"/>
<rect x="228" y="51" width="1" height="1" fill="#000"/>
<rect x="229" y="51" width="2" height="1" fill="#fff"/>
<rect x="231" y="51" width="1" height="1" fill="#000"/>
<rect x="232" y="51" width="9" height="1" fill="#fff"/>
<rect x="241" y="51" width="1" height="1" fill="#000"/>
<rect x="227" y="52" width="2" height="1" fill="#000"/>
<rect x="229" y="52" width="2" height="1" fill="#fff"/>
<rect x="231" y="52" width="1" height="1" fill="#000"/>
<rect x="232" y="52" width="9" height="1" fill="#fff"/>
<rect x="241" y="52" width="1" height="1" fill="#000"/>
<rect x="228" y="53" width="1" height="1" fill="#000"/>
<rect x="229" y="53" width="2" height="1" fill="#fff"/>
<rect x="231" y="53" width="11" height="1" fill="#000"/>
<rect x="228" y="54" width="1" height="1" fill="#000"/>
<rect x="229" y="54" width="2" height="1" fill="#fff"/>
<rect x="231" y="54" width="1" height="1" fill="#000"/>
<rect x="232" y="54" width="9" height="1" fill="#fff"/>
<rect x="241" y="54" width="1" height="1" fill="#000"/>
<rect x="228" y="55" width="1" height="1" fill="#000"/>
<rect x="229" y="55" width="2" height="1" fill="#fff"/>
<rect x="231" y="55" width="1" height="1" fill="#000"/>
<rect x="232" y="55" width="2" height="1" fill="#fff"/>
<rect x="234" y="55" width="3" height="1" fill="#000"/>
<rect x="237" y="55" width="1" height="1" fill="#808080"/>
<rect x="238" y="55" width="3" height="1" fill="#fff"/>
<rect x="241" y="55" width="1" height="1" fill="#000"/>
<rect x="228" y="56" width="1" height="1" fill="#000"/>
<rect x="229" y="56" width="2" height="1" fill="#fff"/>
<rect x="231" y="56" width="1" height="1" fill="#000"/>
<rect x="232" y="56" width="6" height="1" fill="#fff"/>
<rect x="238" y="56" width="1" height="1" fill="#808080"/>
<rect x="239" y="56" width="2" height="1" fill="#fff"/>
<rect x="241" y="56" width="1" height="1" fill="#000"/>
<rect x="227" y="57" width="2" height="1" fill="#000"/>
<rect x="229" y="57" width="2" height="1" fill="#fff"/>
<rect x="231" y="57" width="1" height="1" fill="#000"/>
<rect x="232" y="57" width="9" height="1" fill="#fff"/>
<rect x="241" y="57" width="1" height="1" fill="#000"/>
<rect x="228" y="58" width="1" height="1" fill="#000"/>
<rect x="229" y="58" width="2" height="1" fill="#fff"/>
<rect x="231" y="58" width="1" height="1" fill="#000"/>
<rect x="232" y="58" width="1" height="1" fill="#fff"/>
<rect x="233" y="58" width="4" height="1" fill="#000"/>
<rect x="237" y="58" width="1" height="1" fill="#808080"/>
<rect x="238" y="58" width="3" height="1" fill="#fff"/>
<rect x="241" y="58" width="1" height="1" fill="#000"/>
<rect x="228" y="59" width="1" height="1" fill="#000"/>
<rect x="229" y="59" width="2" height="1" fill="#fff"/>
<rect x="231" y="59" width="1" height="1" fill="#000"/>
<rect x="232" y="59" width="6" height="1" fill="#fff"/>
<rect x="238" y="59" width="1" height="1" fill="#808080"/>
<rect x="239" y="59" width="2" height="1" fill="#fff"/>
<rect x="241" y="59" width="1" height="1" fill="#000"/>
<rect x="228" y="60" width="1" height="1" fill="#000"/>
<rect x="229" y="60" width="2" height="1" fill="#fff"/>
<rect x="231" y="60" width="1" height="1" fill="#000"/>
<rect x="232" y="60" width="9" height="1" fill="#fff"/>
<rect x="241" y="60" width="1" height="1" fill="#000"/>
<rect x="227" y="61" width="2" height="1" fill="#000"/>
<rect x="229" y="61" width="2" height="1" fill="#fff"/>
<rect x="231" y="61" width="1" height="1" fill="#000"/>
<rect x="232" y="61" width="9" height="1" fill="#fff"/>
<rect x="241" y="61" width="1" height="1" fill="#000"/>
<rect x="228" y="62" width="14" height="1" fill="#000"/>
<rect x="228" y="63" width="1" height="1" fill="#000"/>
<rect x="233" y="63" width="1" height="1" fill="#000"/>
<rect x="237" y="63" width="1" height="1" fill="#000"/>
<rect x="241" y="63" width="1" height="1" fill="#000"/>
<rect x="253" y="50" width="14" height="1" fill="#000"/>
<rect x="253" y="51" width="1" height="1" fill="#000"/>
<rect x="254" y="51" width="5" height="1" fill="#fff"/>
<rect x="259" y="51" width="1" height="1" fill="#000"/>
<rect x="260" y="51" width="6" height="1" fill="#fff"/>
<rect x="266" y="51" width="1" height="1" fill="#000"/>
<rect x="252" y="52" width="2" height="1" fill="#000"/>
<rect x="254" y="52" width="5" height="1" fill="#fff"/>
<rect x="259" y="52" width="1" height="1" fill="#000"/>
<rect x="260" y="52" width="2" height="1" fill="#808080"/>
<rect x="262" y="52" width="4" height="1" fill="#fff"/>
<rect x="266" y="52" width="1" height="1" fill="#000"/>
<rect x="253" y="53" width="1" height="1" fill="#000"/>
<rect x="254" y="53" width="3" height="1" fill="#fff"/>
<rect x="257" y="53" width="1" height="1" fill="#808080"/>
<rect x="258" y="53" width="1" height="1" fill="#fff"/>
<rect x="259" y="53" width="1" height="1" fill="#000"/>
<rect x="260" y="53" width="1" height="1" fill="#fff"/>
<rect x="261" y="53" width="1" height="1" fill="#808080"/>
<rect x="262" y="53" width="4" height="1" fill="#fff"/>
<rect x="266" y="53" width="1" height="1" fill="#000"/>
<rect x="253" y="54" width="1" height="1" fill="#000"/>
<rect x="254" y="54" width="2" height="1" fill="#fff"/>
<rect x="256" y="54" width="1" height="1" fill="#808080"/>
<rect x="257" y="54" width="2" height="1" fill="#fff"/>
<rect x="259" y="54" width="1" height="1" fill="#000"/>
<rect x="260" y="54" width="2" height="1" fill="#fff"/>
<rect x="262" y="54" width="1" height="1" fill="#808080"/>
<rect x="263" y="54" width="3" height="1" fill="#fff"/>
<rect x="266" y="54" width="1" height="1" fill="#000"/>
<rect x="253" y="55" width="1" height="1" fill="#000"/>
<rect x="254" y="55" width="5" height="1" fill="#fff"/>
<rect x="259" y="55" width="1" height="1" fill="#000"/>
<rect x="260" y="55" width="3" height="1" fill="#fff"/>
<rect x="263" y="55" width="1" height="1" fill="#808080"/>
<rect x="264" y="55" width="2" height="1" fill="#fff"/>
<rect x="266" y="55" width="1" height="1" fill="#000"/>
<rect x="253" y="56" width="14" height="1" fill="#000"/>
<rect x="252" y="57" width="2" height="1" fill="#000"/>
<rect x="254" y="57" width="5" height="1" fill="#fff"/>
<rect x="259" y="57" width="1" height="1" fill="#000"/>
<rect x="260" y="57" width="6" height="1" fill="#fff"/>
<rect x="266" y="57" width="1" height="1" fill="#000"/>
<rect x="253" y="58" width="1" height="1" fill="#000"/>
<rect x="254" y="58" width="3" height="1" fill="#fff"/>
<rect x="257" y="58" width="1" height="1" fill="#808080"/>
<rect x="258" y="58" width="1" height="1" fill="#fff"/>
<rect x="259" y="58" width="1" height="1" fill="#000"/>
<rect x="260" y="58" width="1" height="1" fill="#fff"/>
<rect x="261" y="58" width="1" height="1" fill="#000"/>
<rect x="262" y="58" width="1" height="1" fill="#808080"/>
<rect x="263" y="58" width="3" height="1" fill="#fff"/>
<rect x="266" y="58" width="1" height="1" fill="#000"/>
<rect x="253" y="59" width="1" height="1" fill="#000"/>
<rect x="254" y="59" width="2" height="1" fill="#fff"/>
<rect x="256" y="59" width="1" height="1" fill="#808080"/>
<rect x="257" y="59" width="2" height="1" fill="#fff"/>
<rect x="259" y="59" width="1" height="1" fill="#000"/>
<rect x="260" y="59" width="3" height="1" fill="#fff"/>
<rect x="263" y="59" width="1" height="1" fill="#808080"/>
<rect x="264" y="59" width="2" height="1" fill="#fff"/>
<rect x="266" y="59" width="1" height="1" fill="#000"/>
<rect x="253" y="60" width="1" height="1" fill="#000"/>
<rect x="254" y="60" width="5" height="1" fill="#fff"/>
<rect x="259" y="60" width="1" height="1" fill="#000"/>
<rect x="260" y="60" width="6" height="1" fill="#fff"/>
<rect x="266" y="60" width="1" height="1" fill="#000"/>
<rect x="252" y="61" width="2" height="1" fill="#000"/>
<rect x="254" y="61" width="5" height="1" fill="#fff"/>
<rect x="259" y="61" width="1" height="1" fill="#000"/>
<rect x="260" y="61" width="6" height="1" fill="#fff"/>
<rect x="266" y="61" width="1" height="1" fill="#000"/>
<rect x="253" y="62" width="14" height="1" fill="#000"/>
<rect x="253" y="63" width="1" height="1" fill="#000"/>
<rect x="258" y="63" width="1" height="1" fill="#000"/>
<rect x="262" y="63" width="1" height="1" fill="#000"/>
<rect x="266" y="63" width="1" height="1" fill="#000"/>
<rect x="278" y="50" width="14" height="1" fill="#000"/>
<rect x="278" y="51" width="1" height="1" fill="#000"/>
<rect x="279" y="51" width="5" height="1" fill="#fff"/>
<rect x="284" y="51" width="1" height="1" fill="#0000c8"/>
<rect x="285" y="51" width="6" height="1" fill="#fff"/>
<rect x="291" y="51" width="1" height="1" fill="#000"/>
<rect x="277" y="52" width="2" height="1" fill="#000"/>
<rect x="279" y="52" width="5" height="1" fill="#fff"/>
<rect x="284" y="52" width="2" height="1" fill="#0000c8"/>
<rect x="286" y="52" width="1" height="1" fill="#808080"/>
<rect x="287" y="52" width="4" height="1" fill="#fff"/>
<rect x="291" y="52" width="1" height="1" fill="#000"/>
<rect x="278" y="53" width="1" height="1" fill="#000"/>
<rect x="279" y="53" width="3" height="1" fill="#fff"/>
<rect x="282" y="53" width="1" height="1" fill="#808080"/>
<rect x="283" y="53" width="1" height="1" fill="#fff"/>
<rect x="284" y="53" width="1" height="1" fill="#0000c8"/>
<rect x="285" y="53" width="1" height="1" fill="#fff"/>
<rect x="286" y="53" width="1" height="1" fill="#0000c8"/>
<rect x="287" y="53" width="4" height="1" fill="#fff"/>
<rect x="291" y="53" width="1" height="1" fill="#000"/>
<rect x="278" y="54" width="1" height="1" fill="#000"/>
<rect x="279" y="54" width="2" height="1" fill="#fff"/>
<rect x="281" y="54" width="1" height="1" fill="#808080"/>
<rect x="282" y="54" width="2" height="1" fill="#fff"/>
<rect x="284" y="54" width="1" height="1" fill="#0000c8"/>
<rect x="285" y="54" width="2" height="1" fill="#fff"/>
<rect x="287" y="54" width="1" height="1" fill="#808080"/>
<rect x="288" y="54" width="3" height="1" fill="#fff"/>
<rect x="291" y="54" width="1" height="1" fill="#000"/>
<rect x="278" y="55" width="1" height="1" fill="#000"/>
<rect x="279" y="55" width="5" height="1" fill="#fff"/>
<rect x="284" y="55" width="1" height="1" fill="#0000c8"/>
<rect x="285" y="55" width="2" height="1" fill="#000"/>
<rect x="287" y="55" width="1" height="1" fill="#fff"/>
<rect x="288" y="55" width="1" height="1" fill="#808080"/>
<rect x="289" y="55" width="2" height="1" fill="#fff"/>
<rect x="291" y="55" width="1" height="1" fill="#000"/>
<rect x="278" y="56" width="1" height="1" fill="#000"/>
<rect x="279" y="56" width="12" height="1" fill="#0000c8"/>
<rect x="291" y="56" width="1" height="1" fill="#000"/>
<rect x="277" y="57" width="2" height="1" fill="#000"/>
<rect x="279" y="57" width="5" height="1" fill="#fff"/>
<rect x="284" y="57" width="1" height="1" fill="#0000c8"/>
<rect x="285" y="57" width="6" height="1" fill="#fff"/>
<rect x="291" y="57" width="1" height="1" fill="#000"/>
<rect x="278" y="58" width="1" height="1" fill="#000"/>
<rect x="279" y="58" width="3" height="1" fill="#fff"/>
<rect x="282" y="58" width="1" height="1" fill="#0000c8"/>
<rect x="283" y="58" width="1" height="1" fill="#fff"/>
<rect x="284" y="58" width="1" height="1" fill="#0000c8"/>
<rect x="285" y="58" width="1" height="1" fill="#fff"/>
<rect x="286" y="58" width="1" height="1" fill="#000"/>
<rect x="287" y="58" width="1" height="1" fill="#808080"/>
<rect x="288" y="58" width="3" height="1" fill="#fff"/>
<rect x="291" y="58" width="1" height="1" fill="#000"/>
<rect x="278" y="59" width="1" height="1" fill="#000"/>
<rect x="279" y="59" width="2" height="1" fill="#fff"/>
<rect x="281" y="59" width="1" height="1" fill="#808080"/>
<rect x="282" y="59" width="2" height="1" fill="#fff"/>
<rect x="284" y="59" width="1" height="1" fill="#0000c8"/>
<rect x="285" y="59" width="3" height="1" fill="#fff"/>
<rect x="288" y="59" width="1" height="1" fill="#808080"/>
<rect x="289" y="59" width="2" height="1" fill="#fff"/>
<rect x="291" y="59" width="1" height="1" fill="#000"/>
<rect x="278" y="60" width="1" height="1" fill="#000"/>
<rect x="279" y="60" width="5" height="1" fill="#fff"/>
<rect x="284" y="60" width="1" height="1" fill="#0000c8"/>
<rect x="285" y="60" width="6" height="1" fill="#fff"/>
<rect x="291" y="60" width="1" height="1" fill="#000"/>
<rect x="277" y="61" width="2" height="1" fill="#000"/>
<rect x="279" y="61" width="5" height="1" fill="#fff"/>
<rect x="284" y="61" width="1" height="1" fill="#0000c8"/>
<rect x="285" y="61" width="6" height="1" fill="#fff"/>
<rect x="291" y="61" width="1" height="1" fill="#000"/>
<rect x="278" y="62" width="14" height="1" fill="#000"/>
<rect x="278" y="63" width="1" height="1" fill="#000"/>
<rect x="283" y="63" width="1" height="1" fill="#000"/>
<rect x="287" y="63" width="1" height="1" fill="#000"/>
<rect x="291" y="63" width="1" height="1" fill="#000"/>
<rect x="303" y="50" width="14" height="1" fill="#000"/>
<rect x="303" y="51" width="1" height="1" fill="#000"/>
<rect x="304" y="51" width="12" height="1" fill="#fff"/>
<rect x="316" y="51" width="1" height="1" fill="#000"/>
<rect x="302" y="52" width="2" height="1" fill="#000"/>
<rect x="304" y="52" width="3" height="1" fill="#fff"/>
<rect x="307" y="52" width="6" height="1" fill="#000"/>
<rect x="313" y="52" width="3" height="1" fill="#fff"/>
<rect x="316" y="52" width="1" height="1" fill="#000"/>
<rect x="303" y="53" width="1" height="1" fill="#000"/>
<rect x="304" y="53" width="3" height="1" fill="#fff"/>
<rect x="307" y="53" width="1" height="1" fill="#000"/>
<rect x="308" y="53" width="4" height="1" fill="#fff"/>
<rect x="312" y="53" width="1" height="1" fill="#000"/>
<rect x="313" y="53" width="3" height="1" fill="#fff"/>
<rect x="316" y="53" width="1" height="1" fill="#000"/>
<rect x="303" y="54" width="1" height="1" fill="#000"/>
<rect x="304" y="54" width="3" height="1" fill="#fff"/>
<rect x="307" y="54" width="1" height="1" fill="#000"/>
<rect x="308" y="54" width="4" height="1" fill="#fff"/>
<rect x="312" y="54" width="1" height="1" fill="#000"/>
<rect x="313" y="54" width="3" height="1" fill="#fff"/>
<rect x="316" y="54" width="1" height="1" fill="#000"/>
<rect x="303" y="55" width="1" height="1" fill="#000"/>
<rect x="304" y="55" width="3" height="1" fill="#fff"/>
<rect x="307" y="55" width="1" height="1" fill="#000"/>
<rect x="308" y="55" width="4" height="1" fill="#fff"/>
<rect x="312" y="55" width="1" height="1" fill="#000"/>
<rect x="313" y="55" width="3" height="1" fill="#fff"/>
<rect x="316" y="55" width="1" height="1" fill="#000"/>
<rect x="303" y="56" width="1" height="1" fill="#000"/>
<rect x="304" y="56" width="3" height="1" fill="#fff"/>
<rect x="307" y="56" width="6" height="1" fill="#000"/>
<rect x="313" y="56" width="3" height="1" fill="#fff"/>
<rect x="316" y="56" width="1" height="1" fill="#000"/>
<rect x="302" y="57" width="2" height="1" fill="#000"/>
<rect x="304" y="57" width="12" height="1" fill="#fff"/>
<rect x="316" y="57" width="1" height="1" fill="#000"/>
<rect x="303" y="58" width="1" height="1" fill="#000"/>
<rect x="304" y="58" width="12" height="1" fill="#fff"/>
<rect x="316" y="58" width="1" height="1" fill="#000"/>
<rect x="303" y="59" width="1" height="1" fill="#000"/>
<rect x="304" y="59" width="3" height="1" fill="#fff"/>
<rect x="307" y="59" width="1" height="1" fill="#808080"/>
<rect x="308" y="59" width="4" height="1" fill="#000"/>
<rect x="312" y="59" width="1" height="1" fill="#808080"/>
<rect x="313" y="59" width="3" height="1" fill="#fff"/>
<rect x="316" y="59" width="1" height="1" fill="#000"/>
<rect x="303" y="60" width="1" height="1" fill="#000"/>
<rect x="304" y="60" width="2" height="1" fill="#fff"/>
<rect x="306" y="60" width="1" height="1" fill="#808080"/>
<rect x="307" y="60" width="6" height="1" fill="#fff"/>
<rect x="313" y="60" width="1" height="1" fill="#808080"/>
<rect x="314" y="60" width="2" height="1" fill="#fff"/>
<rect x="316" y="60" width="1" height="1" fill="#000"/>
<rect x="302" y="61" width="2" height="1" fill="#000"/>
<rect x="304" y="61" width="12" height="1" fill="#fff"/>
<rect x="316" y="61" width="1" height="1" fill="#000"/>
<rect x="303" y="62" width="14" height="1" fill="#000"/>
<rect x="303" y="63" width="1" height="1" fill="#000"/>
<rect x="308" y="63" width="1" height="1" fill="#000"/>
<rect x="312" y="63" width="1" height="1" fill="#000"/>
<rect x="316" y="63" width="1" height="1" fill="#000"/>
<rect x="340" y="48" width="2" height="1" fill="#000"/>
<rect x="339" y="49" width="1" height="1" fill="#000"/>
<rect x="342" y="49" width="1" height="1" fill="#000"/>
<rect x="328" y="50" width="14" height="1" fill="#000"/>
<rect x="328" y="51" width="1" height="1" fill="#000"/>
<rect x="329" y="51" width="8" height="1" fill="#fff"/>
<rect x="337" y="51" width="1" height="1" fill="#000"/>
<rect x="338" y="51" width="1" height="1" fill="#808080"/>
<rect x="339" y="51" width="1" height="1" fill="#fff"/>
<rect x="340" y="51" width="2" height="1" fill="#000"/>
<rect x="327" y="52" width="2" height="1" fill="#000"/>
<rect x="329" y="52" width="7" height="1" fill="#fff"/>
<rect x="336" y="52" width="1" height="1" fill="#000"/>
<rect x="337" y="52" width="1" height="1" fill="#808080"/>
<rect x="338" y="52" width="1" height="1" fill="#fff"/>
<rect x="339" y="52" width="1" height="1" fill="#000"/>
<rect x="340" y="52" width="1" height="1" fill="#fff"/>
<rect x="341" y="52" width="1" height="1" fill="#000"/>
<rect x="328" y="53" width="1" height="1" fill="#000"/>
<rect x="329" y="53" width="6" height="1" fill="#fff"/>
<rect x="335" y="53" width="1" height="1" fill="#000"/>
<rect x="336" y="53" width="1" height="1" fill="#808080"/>
<rect x="337" y="53" width="1" height="1" fill="#fff"/>
<rect x="338" y="53" width="1" height="1" fill="#000"/>
<rect x="339" y="53" width="2" height="1" fill="#fff"/>
<rect x="341" y="53" width="1" height="1" fill="#000"/>
<rect x="328" y="54" width="1" height="1" fill="#000"/>
<rect x="329" y="54" width="5" height="1" fill="#fff"/>
<rect x="334" y="54" width="2" height="1" fill="#808080"/>
<rect x="336" y="54" width="1" height="1" fill="#fff"/>
<rect x="337" y="54" width="1" height="1" fill="#000"/>
<rect x="338" y="54" width="3" height="1" fill="#fff"/>
<rect x="341" y="54" width="1" height="1" fill="#000"/>
<rect x="328" y="55" width="1" height="1" fill="#000"/>
<rect x="329" y="55" width="5" height="1" fill="#fff"/>
<rect x="334" y="55" width="2" height="1" fill="#808080"/>
<rect x="336" y="55" width="1" height="1" fill="#000"/>
<rect x="337" y="55" width="4" height="1" fill="#fff"/>
<rect x="341" y="55" width="1" height="1" fill="#000"/>
<rect x="328" y="56" width="1" height="1" fill="#000"/>
<rect x="329" y="56" width="12" height="1" fill="#fff"/>
<rect x="341" y="56" width="1" height="1" fill="#000"/>
<rect x="327" y="57" width="2" height="1" fill="#000"/>
<rect x="329" y="57" width="12" height="1" fill="#fff"/>
<rect x="341" y="57" width="1" height="1" fill="#000"/>
<rect x="328" y="58" width="1" height="1" fill="#000"/>
<rect x="329" y="58" width="3" height="1" fill="#fff"/>
<rect x="332" y="58" width="1" height="1" fill="#808080"/>
<rect x="333" y="58" width="4" height="1" fill="#000"/>
<rect x="337" y="58" width="1" height="1" fill="#808080"/>
<rect x="338" y="58" width="3" height="1" fill="#fff"/>
<rect x="341" y="58" width="1" height="1" fill="#000"/>
<rect x="328" y="59" width="1" height="1" fill="#000"/>
<rect x="329" y="59" width="2" height="1" fill="#fff"/>
<rect x="331" y="59" width="1" height="1" fill="#808080"/>
<rect x="332" y="59" width="6" height="1" fill="#fff"/>
<rect x="338" y="59" width="1" height="1" fill="#808080"/>
<rect x="339" y="59" width="2" height="1" fill="#fff"/>
<rect x="341" y="59" width="1" height="1" fill="#000"/>
<rect x="328" y="60" width="1" height="1" fill="#000"/>
<rect x="329" y="60" width="12" height="1" fill="#fff"/>
<rect x="341" y="60" width="1" height="1" fill="#000"/>
<rect x="327" y="61" width="2" height="1" fill="#000"/>
<rect x="329" y="61" width="12" height="1" fill="#fff"/>
<rect x="341" y="61" width="1" height="1" fill="#000"/>
<rect x="328" y="62" width="14" height="1" fill="#000"/>
<rect x="328" y="63" width="1" height="1" fill="#000"/>
<rect x="333" y="63" width="1" height="1" fill="#000"/>
<rect x="337" y="63" width="1" height="1" fill="#000"/>
<rect x="341" y="63" width="1" height="1" fill="#000"/>
<rect x="252" y="25" width="2" height="2" fill="#000"/>
<rect x="251" y="28" width="1" height="2" fill="#000"/>
<rect x="251" y="31" width="1" height="2" fill="#000"/>
<rect x="251" y="34" width="1" height="2" fill="#000"/>
<rect x="251" y="37" width="1" height="2" fill="#000"/>
<rect x="253" y="30" width="14" height="9" fill="#000"/>
<rect x="254" y="31" width="12" height="7" fill="#fff"/>
<rect x="256" y="33" width="5" height="1" fill="#000"/>
<rect x="256" y="36" width="5" height="1" fill="#000"/>
<rect x="261" y="31" width="1" height="1" fill="#000"/>
<rect x="263" y="31" width="1" height="1" fill="#000"/>
<rect x="265" y="31" width="1" height="1" fill="#000"/>
<rect x="262" y="32" width="1" height="1" fill="#000"/>
<rect x="264" y="32" width="1" height="1" fill="#000"/>
<rect x="261" y="33" width="1" height="1" fill="#000"/>
<rect x="263" y="33" width="1" height="1" fill="#000"/>
<rect x="265" y="33" width="1" height="1" fill="#000"/>
<rect x="262" y="34" width="1" height="1" fill="#000"/>
<rect x="264" y="34" width="1" height="1" fill="#000"/>
<rect x="261" y="35" width="1" height="1" fill="#000"/>
<rect x="263" y="35" width="1" height="1" fill="#000"/>
<rect x="265" y="35" width="1" height="1" fill="#000"/>
<rect x="262" y="36" width="1" height="1" fill="#000"/>
<rect x="264" y="36" width="1" height="1" fill="#000"/>
<rect x="261" y="37" width="1" height="1" fill="#000"/>
<rect x="263" y="37" width="1" height="1" fill="#000"/>
<rect x="265" y="37" width="1" height="1" fill="#000"/>
<rect x="252" y="32" width="1" height="1" fill="#000"/>
<rect x="252" y="35" width="1" height="1" fill="#000"/>
<rect x="259" y="39" width="1" height="1" fill="#000"/>
<rect x="264" y="39" width="1" height="1" fill="#000"/>
<rect x="255" y="40" width="4" height="1" fill="#000"/>
<rect x="261" y="40" width="4" height="1" fill="#000"/>
<rect x="267" y="40" width="4" height="1" fill="#000"/>
<rect x="272" y="40" width="2" height="1" fill="#000"/>
<rect x="273" y="39" width="1" height="1" fill="#000"/>
<rect x="278" y="27" width="14" height="1" fill="#000"/>
<rect x="291" y="27" width="1" height="3" fill="#000"/>
<rect x="278" y="27" width="1" height="12" fill="#000"/>
<rect x="278" y="38" width="7" height="1" fill="#000"/>
<rect x="279" y="28" width="5" height="10" fill="#fff"/>
<rect x="284" y="28" width="1" height="10" fill="#0000c8"/>
<rect x="279" y="33" width="5" height="1" fill="#0000c8"/>
<rect x="277" y="30" width="1" height="1" fill="#000"/>
<rect x="277" y="34" width="1" height="1" fill="#000"/>
<rect x="278" y="39" width="1" height="1" fill="#000"/>
<rect x="284" y="39" width="1" height="1" fill="#000"/>
<rect x="281" y="30" width="1" height="1" fill="#808080"/>
<rect x="282" y="31" width="1" height="1" fill="#808080"/>
<rect x="280" y="36" width="1" height="1" fill="#808080"/>
<rect x="281" y="35" width="1" height="1" fill="#808080"/>
<text x="286.2" y="37.8" font-family="Liberation Sans" font-size="10.5" font-weight="bold" fill="#808080" style="stroke:#808080;stroke-width:0.4px" textLength="6" lengthAdjust="spacingAndGlyphs">S</text>
<path d="M355.5 26.5L351.5 30.5L355.5 34.5" stroke="#000" stroke-width="1.4" fill="none" shape-rendering="auto"/>
<path d="M364.5 26.5L368.5 30.5L364.5 34.5" stroke="#000" stroke-width="1.4" fill="none" shape-rendering="auto"/>
<rect x="115" y="317" width="450" height="257" fill="#000"/>
<rect x="114" y="574" width="452" height="1" fill="#fff"/>
<rect x="565" y="317" width="1" height="258" fill="#fff"/>
<rect x="111" y="317" width="4" height="1" fill="#000"/>
<text x="108.3" y="322" font-family="Liberation Sans" font-size="14.3" text-anchor="end" textLength="12.8" lengthAdjust="spacingAndGlyphs">24</text>
<rect x="111" y="338" width="4" height="1" fill="#000"/>
<text x="108.3" y="343" font-family="Liberation Sans" font-size="14.3" text-anchor="end" textLength="12.8" lengthAdjust="spacingAndGlyphs">22</text>
<rect x="111" y="360" width="4" height="1" fill="#000"/>
<text x="108.3" y="365" font-family="Liberation Sans" font-size="14.3" text-anchor="end" textLength="12.8" lengthAdjust="spacingAndGlyphs">20</text>
<rect x="111" y="381" width="4" height="1" fill="#000"/>
<text x="108.3" y="386" font-family="Liberation Sans" font-size="14.3" text-anchor="end" textLength="12.8" lengthAdjust="spacingAndGlyphs">18</text>
<rect x="111" y="402" width="4" height="1" fill="#000"/>
<text x="108.3" y="407" font-family="Liberation Sans" font-size="14.3" text-anchor="end" textLength="12.8" lengthAdjust="spacingAndGlyphs">16</text>
<rect x="111" y="424" width="4" height="1" fill="#000"/>
<text x="108.3" y="429" font-family="Liberation Sans" font-size="14.3" text-anchor="end" textLength="12.8" lengthAdjust="spacingAndGlyphs">14</text>
<rect x="111" y="445" width="4" height="1" fill="#000"/>
<text x="108.3" y="450" font-family="Liberation Sans" font-size="14.3" text-anchor="end" textLength="12.8" lengthAdjust="spacingAndGlyphs">12</text>
<rect x="111" y="466" width="4" height="1" fill="#000"/>
<text x="108.3" y="471" font-family="Liberation Sans" font-size="14.3" text-anchor="end" textLength="12.8" lengthAdjust="spacingAndGlyphs">10</text>
<rect x="111" y="488" width="4" height="1" fill="#000"/>
<text x="108.3" y="493" font-family="Liberation Sans" font-size="14.3" text-anchor="end" textLength="6.4" lengthAdjust="spacingAndGlyphs">8</text>
<rect x="111" y="509" width="4" height="1" fill="#000"/>
<text x="108.3" y="514" font-family="Liberation Sans" font-size="14.3" text-anchor="end" textLength="6.4" lengthAdjust="spacingAndGlyphs">6</text>
<rect x="111" y="530" width="4" height="1" fill="#000"/>
<text x="108.3" y="535" font-family="Liberation Sans" font-size="14.3" text-anchor="end" textLength="6.4" lengthAdjust="spacingAndGlyphs">4</text>
<rect x="111" y="552" width="4" height="1" fill="#000"/>
<text x="108.3" y="557" font-family="Liberation Sans" font-size="14.3" text-anchor="end" textLength="6.4" lengthAdjust="spacingAndGlyphs">2</text>
<rect x="111" y="573" width="4" height="1" fill="#000"/>
<text x="108.3" y="578" font-family="Liberation Sans" font-size="14.3" text-anchor="end" textLength="6.4" lengthAdjust="spacingAndGlyphs">0</text>
<rect x="138" y="571" width="1" height="3" fill="#606060"/>
<rect x="162" y="571" width="1" height="3" fill="#606060"/>
<rect x="185" y="571" width="1" height="3" fill="#606060"/>
<rect x="209" y="571" width="1" height="6" fill="#000"/>
<text x="209.5" y="590" font-family="Liberation Sans" font-size="14.3" text-anchor="middle" textLength="6.3" lengthAdjust="spacingAndGlyphs">2</text>
<rect x="232" y="571" width="1" height="3" fill="#606060"/>
<rect x="256" y="571" width="1" height="3" fill="#606060"/>
<rect x="279" y="571" width="1" height="3" fill="#606060"/>
<rect x="303" y="571" width="1" height="6" fill="#000"/>
<text x="303.5" y="590" font-family="Liberation Sans" font-size="14.3" text-anchor="middle" textLength="6.3" lengthAdjust="spacingAndGlyphs">4</text>
<rect x="326" y="571" width="1" height="3" fill="#606060"/>
<rect x="350" y="571" width="1" height="3" fill="#606060"/>
<rect x="374" y="571" width="1" height="3" fill="#606060"/>
<rect x="397" y="571" width="1" height="6" fill="#000"/>
<text x="397.5" y="590" font-family="Liberation Sans" font-size="14.3" text-anchor="middle" textLength="6.3" lengthAdjust="spacingAndGlyphs">6</text>
<rect x="421" y="571" width="1" height="3" fill="#606060"/>
<rect x="444" y="571" width="1" height="3" fill="#606060"/>
<rect x="468" y="571" width="1" height="3" fill="#606060"/>
<rect x="491" y="571" width="1" height="6" fill="#000"/>
<text x="491.5" y="590" font-family="Liberation Sans" font-size="14.3" text-anchor="middle" textLength="6.3" lengthAdjust="spacingAndGlyphs">8</text>
<rect x="515" y="571" width="1" height="3" fill="#606060"/>
<rect x="538" y="571" width="1" height="3" fill="#606060"/>
<rect x="562" y="571" width="1" height="3" fill="#606060"/>
<text x="571" y="591" font-family="Liberation Sans" font-size="14.3" textLength="5.5" lengthAdjust="spacingAndGlyphs">s</text>
<path d="M115.5 450v3M115.5 455v1M115.5 462v1M115.5 464v2M115.5 503v2M115.5 507v1M115.5 509v2M115.5 519v3M115.5 547v1M115.5 549v1M116.5 445v1M116.5 450v5M116.5 457v5M116.5 499v1M116.5 503v1M116.5 507v4M116.5 550v1M117.5 439v2M117.5 442v1M117.5 451v1M117.5 455v3M117.5 459v3M117.5 463v2M117.5 494v5M117.5 524v1M117.5 535v1M117.5 537v1M117.5 545v2M117.5 550v1M118.5 452v1M118.5 455v1M118.5 458v3M118.5 462v1M118.5 464v1M118.5 474v1M118.5 494v6M118.5 522v2M118.5 525v1M118.5 533v1M118.5 536v3M118.5 544v3M118.5 549v1M119.5 451v4M119.5 456v4M119.5 461v1M119.5 464v2M119.5 495v1M119.5 498v2M119.5 501v1M119.5 520v1M119.5 522v1M119.5 536v2M119.5 544v3M119.5 549v1M120.5 451v1M120.5 465v1M120.5 468v2M120.5 477v2M120.5 483v2M120.5 494v1M120.5 497v2M120.5 500v2M120.5 505v1M120.5 508v1M120.5 510v1M120.5 514v3M120.5 519v4M120.5 528v2M120.5 534v4M120.5 543v1M120.5 545v4M121.5 450v1M121.5 457v1M121.5 465v1M121.5 469v2M121.5 480v1M121.5 502v1M121.5 506v1M121.5 509v5M121.5 517v5M121.5 548v2M122.5 442v1M122.5 445v1M122.5 450v2M122.5 454v5M122.5 461v1M122.5 463v2M122.5 484v1M122.5 495v2M122.5 498v2M122.5 504v1M122.5 509v7M122.5 530v2M122.5 550v1M123.5 439v2M123.5 451v10M123.5 462v3M123.5 495v4M123.5 501v1M123.5 518v1M123.5 535v2M123.5 545v2M123.5 550v1M124.5 450v1M124.5 452v2M124.5 455v2M124.5 459v3M124.5 463v3M124.5 518v1M124.5 520v1M124.5 536v1M124.5 547v1M124.5 549v1M125.5 445v1M125.5 451v2M125.5 454v2M125.5 457v1M125.5 462v1M125.5 464v1M125.5 497v4M125.5 504v1M125.5 516v1M125.5 527v1M125.5 531v1M125.5 550v1M126.5 451v2M126.5 454v1M126.5 456v1M126.5 462v2M126.5 492v1M126.5 495v5M126.5 533v3M126.5 544v3M126.5 550v1M127.5 440v1M127.5 452v9M127.5 463v2M127.5 495v5M127.5 501v1M127.5 517v1M127.5 520v1M127.5 535v3M127.5 545v2M127.5 549v1M128.5 453v3M128.5 457v1M128.5 459v1M128.5 461v2M128.5 476v1M128.5 485v1M128.5 494v6M128.5 502v1M128.5 509v1M128.5 517v1M128.5 519v1M128.5 529v2M128.5 534v4M128.5 544v3M128.5 549v1M129.5 450v2M129.5 453v1M129.5 455v5M129.5 461v2M129.5 478v1M129.5 481v1M129.5 486v1M129.5 506v1M129.5 512v1M129.5 515v2M129.5 530v2M129.5 535v1M129.5 547v3M130.5 450v12M130.5 463v2M130.5 487v1M130.5 497v1M130.5 504v1M130.5 506v1M130.5 511v1M130.5 513v1M130.5 515v2M130.5 527v1M130.5 530v1M130.5 550v1M131.5 441v1M131.5 451v5M131.5 457v2M131.5 462v3M131.5 495v1M131.5 497v1M131.5 501v1M131.5 535v2M131.5 544v2M131.5 549v1M132.5 454v2M132.5 458v1M132.5 461v1M132.5 463v1M132.5 475v1M132.5 492v1M132.5 495v5M132.5 501v1M132.5 516v3M132.5 522v1M132.5 525v1M132.5 532v6M132.5 544v3M132.5 549v1M133.5 453v1M133.5 456v3M133.5 460v1M133.5 463v3M133.5 472v1M133.5 480v1M133.5 494v1M133.5 496v5M133.5 503v1M133.5 505v1M133.5 507v1M133.5 517v1M133.5 521v1M133.5 523v2M133.5 526v1M133.5 535v3M133.5 540v1M133.5 544v3M133.5 549v2M134.5 450v2M134.5 453v1M134.5 457v1M134.5 459v1M134.5 461v1M134.5 463v4M134.5 469v1M134.5 471v1M134.5 479v1M134.5 495v2M134.5 503v2M134.5 507v2M134.5 511v1M134.5 527v2M134.5 531v1M134.5 547v1M134.5 549v1M135.5 443v1M135.5 445v1M135.5 451v1M135.5 453v2M135.5 457v5M135.5 463v2M135.5 470v1M135.5 496v1M135.5 550v1M136.5 441v1M136.5 451v5M136.5 457v7M136.5 495v3M136.5 524v1M136.5 535v1M136.5 537v1M136.5 545v1M136.5 550v1M137.5 452v3M137.5 457v2M137.5 461v1M137.5 463v2M137.5 474v1M137.5 495v3M137.5 499v2M137.5 521v1M137.5 535v4M137.5 544v1M137.5 546v2M137.5 549v1M138.5 453v2M138.5 457v1M138.5 464v2M138.5 473v1M138.5 477v2M138.5 494v7M138.5 503v1M138.5 511v2M138.5 521v2M138.5 525v2M138.5 528v1M138.5 532v1M138.5 534v2M138.5 538v1M138.5 544v6M139.5 451v1M139.5 453v1M139.5 457v1M139.5 460v2M139.5 480v1M139.5 485v1M139.5 495v2M139.5 499v1M139.5 502v1M139.5 507v2M139.5 511v3M139.5 517v2M139.5 520v2M139.5 527v5M139.5 535v1M139.5 547v2M140.5 443v1M140.5 452v3M140.5 456v1M140.5 458v4M140.5 463v2M140.5 468v4M140.5 485v2M140.5 497v4M140.5 502v1M140.5 504v5M140.5 510v2M140.5 515v2M140.5 527v5M141.5 440v1M141.5 444v1M141.5 451v4M141.5 456v1M141.5 458v1M141.5 461v4M141.5 494v1M141.5 496v1M141.5 499v1M141.5 535v3M141.5 545v2M141.5 550v1M142.5 451v1M142.5 453v1M142.5 457v1M142.5 461v2M142.5 465v2M142.5 493v3M142.5 497v3M142.5 501v1M142.5 517v1M142.5 521v1M142.5 523v4M142.5 534v3M142.5 538v1M142.5 544v2M142.5 547v2M143.5 460v1M143.5 462v2M143.5 466v1M143.5 477v1M143.5 496v1M143.5 498v2M143.5 501v1M143.5 508v1M143.5 513v1M143.5 516v4M143.5 523v4M143.5 533v5M143.5 544v3M143.5 548v1M144.5 451v1M144.5 453v1M144.5 459v1M144.5 462v1M144.5 466v1M144.5 473v2M144.5 478v1M144.5 482v2M144.5 485v2M144.5 490v1M144.5 496v4M144.5 501v4M144.5 506v4M144.5 512v4M144.5 517v4M144.5 524v3M144.5 531v1M144.5 533v5M144.5 539v2M144.5 544v6M145.5 450v2M145.5 453v1M145.5 457v4M145.5 464v2M145.5 495v1M145.5 502v1M145.5 505v2M145.5 508v1M145.5 510v1M145.5 512v1M145.5 515v3M145.5 527v3M145.5 531v1M145.5 546v1M145.5 548v2M146.5 450v3M146.5 454v8M146.5 463v2M146.5 470v1M146.5 485v1M146.5 495v1M146.5 498v1M146.5 502v2M146.5 505v2M146.5 508v3M146.5 512v2M146.5 515v2M146.5 527v5M146.5 550v1M147.5 441v2M147.5 451v6M147.5 459v1M147.5 462v1M147.5 464v1M147.5 494v3M147.5 498v1M147.5 523v1M147.5 533v1M147.5 535v3M147.5 544v1M148.5 454v2M148.5 457v1M148.5 459v2M148.5 463v1M148.5 465v2M148.5 472v2M148.5 475v1M148.5 494v7M148.5 507v1M148.5 518v1M148.5 523v3M148.5 528v1M148.5 530v1M148.5 533v6M148.5 546v3M149.5 451v1M149.5 453v2M149.5 456v1M149.5 458v3M149.5 465v1M149.5 467v1M149.5 484v1M149.5 499v1M149.5 502v1M149.5 507v1M149.5 510v1M149.5 512v1M149.5 515v2M149.5 520v1M149.5 545v1M150.5 442v1M150.5 444v1M150.5 452v1M150.5 454v5M150.5 460v5M150.5 467v2M150.5 470v2M150.5 483v1M150.5 494v3M150.5 499v2M150.5 502v1M150.5 506v3M150.5 511v1M150.5 514v3M150.5 528v3M151.5 441v1M151.5 453v6M151.5 462v1M151.5 464v1M151.5 495v5M151.5 523v1M151.5 534v3M151.5 544v3M151.5 550v1M152.5 454v2M152.5 457v1M152.5 459v1M152.5 465v1M152.5 472v1M152.5 495v6M152.5 517v1M152.5 523v3M152.5 534v4M152.5 544v2M152.5 548v2M153.5 451v3M153.5 466v1M153.5 481v2M153.5 485v1M153.5 491v10M153.5 503v1M153.5 505v1M153.5 515v4M153.5 523v1M153.5 525v2M153.5 532v2M153.5 535v3M153.5 541v1M153.5 544v5M154.5 450v1M154.5 454v2M154.5 459v2M154.5 462v1M154.5 466v1M154.5 469v1M154.5 484v1M154.5 502v1M154.5 505v2M154.5 508v1M154.5 512v1M154.5 515v2M154.5 518v1M154.5 528v1M154.5 531v1M154.5 547v2M155.5 442v3M155.5 451v3M155.5 457v4M155.5 467v2M155.5 504v1M155.5 509v3M155.5 513v3M155.5 529v2M155.5 550v1M156.5 451v6M156.5 460v6M156.5 494v1M156.5 497v4M156.5 523v2M156.5 532v6M156.5 544v1M156.5 546v1M156.5 550v1M157.5 439v2M157.5 451v3M157.5 455v1M157.5 457v3M157.5 464v2M157.5 477v1M157.5 496v5M157.5 506v1M157.5 518v1M157.5 524v1M157.5 535v1M157.5 537v2M157.5 544v6M158.5 450v1M158.5 459v2M158.5 462v1M158.5 465v1M158.5 470v1M158.5 477v2M158.5 483v1M158.5 495v1M158.5 503v1M158.5 505v2M158.5 508v1M158.5 511v4M158.5 517v1M158.5 529v2M158.5 547v3M159.5 442v1M159.5 445v1M159.5 451v1M159.5 456v2M159.5 459v1M159.5 461v1M159.5 463v2M159.5 467v1M159.5 471v1M159.5 485v2M159.5 491v1M159.5 495v1M159.5 505v2M159.5 510v1M159.5 513v3M159.5 528v1M159.5 550v1M160.5 439v1M160.5 441v2M160.5 452v9M160.5 462v3M160.5 495v6M160.5 536v1M160.5 544v2M160.5 550v1M161.5 455v2M161.5 462v4M161.5 476v1M161.5 478v1M161.5 481v1M161.5 492v1M161.5 494v2M161.5 497v1M161.5 500v1M161.5 517v8M161.5 526v1M161.5 533v3M161.5 541v1M161.5 545v2M161.5 549v1M162.5 457v3M162.5 473v2M162.5 477v4M162.5 482v1M162.5 484v1M162.5 492v4M162.5 497v2M162.5 500v2M162.5 505v2M162.5 509v1M162.5 511v1M162.5 513v1M162.5 516v7M162.5 524v1M162.5 526v1M162.5 528v1M162.5 531v4M162.5 536v4M162.5 541v1M162.5 544v1M162.5 546v4M163.5 450v1M163.5 458v3M163.5 462v1M163.5 466v1M163.5 469v1M163.5 490v1M163.5 503v2M163.5 507v1M163.5 514v1M163.5 517v3M163.5 521v1M163.5 529v1M163.5 531v1M163.5 549v1M164.5 442v1M164.5 444v1M164.5 452v7M164.5 460v1M164.5 463v1M164.5 465v1M164.5 471v1M164.5 488v1M164.5 490v1M164.5 497v2M164.5 503v2M164.5 507v1M164.5 509v2M164.5 529v3M164.5 550v1M165.5 451v1M165.5 455v1M165.5 458v3M165.5 462v2M165.5 465v1M165.5 494v5M165.5 524v1M165.5 526v1M165.5 535v1M165.5 537v1M165.5 544v1M165.5 550v1M166.5 452v1M166.5 458v1M166.5 461v1M166.5 465v2M166.5 493v1M166.5 496v2M166.5 499v2M166.5 517v4M166.5 523v4M166.5 531v4M166.5 536v2M166.5 543v1M166.5 545v2M166.5 549v2M167.5 451v1M167.5 453v1M167.5 457v2M167.5 466v1M167.5 473v2M167.5 476v4M167.5 492v1M167.5 494v1M167.5 496v1M167.5 498v1M167.5 501v1M167.5 509v1M167.5 511v2M167.5 517v3M167.5 524v4M167.5 532v3M167.5 536v1M167.5 538v1M167.5 543v1M167.5 547v3M168.5 451v1M168.5 455v1M168.5 457v1M168.5 460v1M168.5 466v1M168.5 477v2M168.5 487v2M168.5 491v1M168.5 502v1M168.5 507v2M168.5 510v1M168.5 512v1M168.5 515v7M168.5 527v2M168.5 530v2M168.5 547v2M169.5 442v2M169.5 445v1M169.5 451v1M169.5 453v3M169.5 457v2M169.5 461v1M169.5 471v1M169.5 483v1M169.5 486v1M169.5 490v1M169.5 499v1M169.5 504v1M169.5 507v3M169.5 511v4M169.5 516v1M169.5 527v1M169.5 531v1M169.5 550v1M170.5 441v1M170.5 451v6M170.5 461v5M170.5 494v3M170.5 498v3M170.5 525v2M170.5 532v1M170.5 537v1M170.5 550v1M171.5 452v5M171.5 464v3M171.5 473v2M171.5 495v5M171.5 515v1M171.5 521v2M171.5 525v1M171.5 533v1M171.5 536v2M171.5 544v4M171.5 550v1M172.5 454v1M172.5 466v1M172.5 474v1M172.5 477v1M172.5 494v6M172.5 501v1M172.5 504v1M172.5 513v2M172.5 516v2M172.5 521v3M172.5 525v1M172.5 532v3M172.5 536v2M172.5 544v6M173.5 460v1M173.5 462v1M173.5 465v2M173.5 469v1M173.5 471v1M173.5 475v4M173.5 485v2M173.5 489v2M173.5 492v1M173.5 494v2M173.5 497v3M173.5 503v6M173.5 510v3M173.5 516v15M173.5 532v4M173.5 538v1M173.5 544v2M173.5 547v2M174.5 450v1M174.5 452v1M174.5 455v1M174.5 462v1M174.5 466v2M174.5 481v2M174.5 507v6M174.5 518v2M174.5 521v1M174.5 527v2M174.5 547v2M175.5 442v1M175.5 451v1M175.5 453v2M175.5 457v4M175.5 462v4M175.5 468v2M175.5 489v2M175.5 494v1M175.5 504v1M175.5 506v2M175.5 509v4M175.5 514v3M175.5 527v4M175.5 534v1M175.5 550v1M176.5 441v1M176.5 451v9M176.5 461v4M176.5 495v3M176.5 499v1M176.5 522v1M176.5 525v1M176.5 534v4M176.5 544v2M176.5 550v1M177.5 452v1M177.5 454v3M177.5 458v1M177.5 461v2M177.5 466v1M177.5 475v1M177.5 477v1M177.5 494v3M177.5 498v2M177.5 520v1M177.5 522v5M177.5 533v6M177.5 544v6M178.5 452v5M178.5 466v1M178.5 492v1M178.5 494v5M178.5 503v2M178.5 507v2M178.5 511v1M178.5 515v2M178.5 520v7M178.5 533v6M178.5 544v4M178.5 549v1M179.5 450v1M179.5 452v2M179.5 457v1M179.5 459v2M179.5 465v2M179.5 470v1M179.5 483v1M179.5 486v1M179.5 502v3M179.5 507v11M179.5 519v3M179.5 531v1M179.5 547v2M180.5 442v1M180.5 444v1M180.5 450v2M180.5 457v5M180.5 465v1M180.5 467v1M180.5 469v1M180.5 496v2M180.5 502v2M180.5 507v3M180.5 511v2M180.5 514v3M180.5 529v1M180.5 531v1M180.5 550v1M181.5 440v2M181.5 445v1M181.5 452v2M181.5 455v3M181.5 460v1M181.5 462v4M181.5 472v1M181.5 495v5M181.5 501v1M181.5 526v1M181.5 532v1M181.5 544v3M182.5 457v1M182.5 460v1M182.5 464v1M182.5 466v1M182.5 474v1M182.5 479v2M182.5 492v1M182.5 494v2M182.5 497v4M182.5 516v1M182.5 519v2M182.5 522v2M182.5 526v2M182.5 532v7M182.5 540v1M182.5 545v5M183.5 453v2M183.5 464v1M183.5 466v2M183.5 473v1M183.5 487v2M183.5 495v4M183.5 500v1M183.5 503v1M183.5 508v2M183.5 517v2M183.5 520v3M183.5 526v1M183.5 532v6M183.5 541v1M183.5 543v1M183.5 545v3M183.5 549v1M184.5 457v1M184.5 459v1M184.5 464v1M184.5 466v3M184.5 488v1M184.5 503v2M184.5 510v1M184.5 517v2M184.5 521v1M184.5 529v1M184.5 547v2M185.5 444v1M185.5 451v4M185.5 458v1M185.5 462v6M185.5 470v1M185.5 482v1M185.5 486v3M185.5 499v1M185.5 502v2M185.5 506v1M185.5 508v9M185.5 527v1M185.5 529v3M185.5 549v2M186.5 452v2M186.5 455v1M186.5 458v1M186.5 461v3M186.5 465v2M186.5 472v1M186.5 475v1M186.5 493v5M186.5 499v3M186.5 532v1M186.5 535v1M186.5 544v2M187.5 440v1M187.5 451v2M187.5 456v1M187.5 458v3M187.5 464v1M187.5 466v1M187.5 494v7M187.5 523v1M187.5 526v1M187.5 535v3M187.5 543v4M187.5 549v1M188.5 451v1M188.5 457v1M188.5 460v2M188.5 478v1M188.5 480v2M188.5 484v2M188.5 498v1M188.5 505v2M188.5 508v3M188.5 513v6M188.5 520v2M188.5 527v2M188.5 531v1M188.5 548v2M189.5 443v3M189.5 450v2M189.5 455v2M189.5 459v3M189.5 467v1M189.5 469v2M189.5 502v3M189.5 506v1M189.5 511v3M189.5 527v1M189.5 529v3M189.5 548v1M189.5 550v1M190.5 440v1M190.5 444v1M190.5 452v7M190.5 461v3M190.5 465v1M190.5 493v3M190.5 497v3M190.5 522v1M190.5 525v2M190.5 532v1M190.5 534v3M190.5 544v2M190.5 550v1M191.5 455v4M191.5 462v1M191.5 464v3M191.5 473v2M191.5 476v3M191.5 494v1M191.5 496v2M191.5 500v2M191.5 525v2M191.5 532v1M191.5 535v2M191.5 544v2M191.5 549v2M192.5 458v1M192.5 463v1M192.5 466v1M192.5 473v8M192.5 483v2M192.5 493v2M192.5 497v1M192.5 499v3M192.5 504v1M192.5 510v1M192.5 513v3M192.5 518v3M192.5 522v5M192.5 528v1M192.5 532v2M192.5 535v3M192.5 541v1M192.5 544v1M192.5 547v2M193.5 450v2M193.5 453v1M193.5 457v2M193.5 471v1M193.5 477v5M193.5 487v1M193.5 489v2M193.5 502v4M193.5 507v6M193.5 515v3M193.5 519v2M193.5 527v1M193.5 529v2M193.5 547v1M194.5 443v1M194.5 453v5M194.5 459v4M194.5 464v2M194.5 467v3M194.5 471v1M194.5 482v1M194.5 488v4M194.5 495v1M194.5 502v1M194.5 504v8M194.5 514v2M194.5 527v5M194.5 550v1M195.5 441v1M195.5 445v1M195.5 451v6M195.5 460v2M195.5 463v3M195.5 472v1M195.5 474v1M195.5 494v6M195.5 522v2M195.5 533v4M195.5 544v1M195.5 546v1M195.5 550v1M196.5 452v4M196.5 464v1M196.5 466v1M196.5 472v3M196.5 481v1M196.5 494v6M196.5 501v1M196.5 521v4M196.5 534v1M196.5 536v2M196.5 545v2M196.5 550v1M197.5 460v1M197.5 462v2M197.5 465v3M197.5 473v2M197.5 492v1M197.5 494v1M197.5 496v1M197.5 498v4M197.5 503v2M197.5 508v4M197.5 513v2M197.5 517v4M197.5 523v4M197.5 529v1M197.5 531v5M197.5 537v2M197.5 543v7M198.5 450v1M198.5 454v1M198.5 457v2M198.5 466v3M198.5 484v1M198.5 490v2M198.5 502v3M198.5 506v2M198.5 511v1M198.5 513v2M198.5 518v3M198.5 528v4M198.5 548v2M199.5 443v2M199.5 451v3M199.5 457v1M199.5 459v3M199.5 467v1M199.5 483v1M199.5 488v2M199.5 495v2M199.5 499v1M199.5 503v1M199.5 509v1M199.5 511v1M199.5 513v4M199.5 527v4M199.5 550v1M200.5 440v1M200.5 451v3M200.5 455v2M200.5 458v8M200.5 494v2M200.5 497v3M200.5 532v1M200.5 535v3M200.5 544v3M200.5 550v1M201.5 440v1M201.5 452v4M201.5 457v1M201.5 459v2M201.5 463v1M201.5 476v1M201.5 495v3M201.5 499v1M201.5 525v1M201.5 533v6M201.5 544v3M202.5 451v2M202.5 455v1M202.5 460v1M202.5 467v1M202.5 475v2M202.5 492v5M202.5 498v2M202.5 501v2M202.5 507v2M202.5 512v2M202.5 517v2M202.5 521v6M202.5 533v2M202.5 536v2M202.5 539v1M202.5 543v2M202.5 547v3M203.5 450v2M203.5 458v3M203.5 479v1M203.5 481v1M203.5 483v1M203.5 485v2M203.5 491v1M203.5 496v1M203.5 502v2M203.5 505v4M203.5 510v4M203.5 516v6M203.5 527v4M203.5 535v1M203.5 537v1M203.5 547v2M204.5 451v6M204.5 461v3M204.5 465v3M204.5 469v1M204.5 471v1M204.5 484v1M204.5 488v1M204.5 491v1M204.5 497v1M204.5 499v1M204.5 502v1M204.5 504v13M204.5 528v4M204.5 550v1M205.5 452v1M205.5 454v1M205.5 456v2M205.5 459v2M205.5 462v5M205.5 474v1M205.5 496v4M205.5 518v1M205.5 525v2M205.5 534v3M205.5 545v1M205.5 549v2M206.5 452v1M206.5 460v1M206.5 464v3M206.5 474v1M206.5 479v3M206.5 496v5M206.5 516v2M206.5 519v2M206.5 522v2M206.5 525v3M206.5 533v5M206.5 546v2M206.5 549v1M207.5 463v1M207.5 475v1M207.5 478v1M207.5 481v2M207.5 494v7M207.5 504v1M207.5 507v1M207.5 510v1M207.5 514v4M207.5 520v5M207.5 527v1M207.5 531v1M207.5 533v2M207.5 536v1M207.5 538v1M207.5 544v1M207.5 546v2M208.5 452v1M208.5 467v1M208.5 471v1M208.5 475v3M208.5 479v4M208.5 486v3M208.5 492v7M208.5 501v2M208.5 504v1M208.5 509v3M208.5 513v16M208.5 532v3M208.5 537v2M208.5 545v2M209.5 450v2M209.5 458v2M209.5 466v6M209.5 479v4M209.5 485v4M209.5 490v1M209.5 495v2M209.5 502v6M209.5 509v5M209.5 515v5M209.5 521v1M209.5 527v4M209.5 548v1M210.5 445v1M210.5 451v1M210.5 454v1M210.5 457v6M210.5 465v1M210.5 467v5M210.5 482v3M210.5 486v6M210.5 494v1M210.5 496v1M210.5 502v8M210.5 511v5M210.5 527v3M210.5 531v1M210.5 550v1M211.5 441v1M211.5 452v8M211.5 462v2M211.5 465v2M211.5 474v1M211.5 494v4M211.5 522v3M211.5 537v1M211.5 545v1M211.5 550v1M212.5 452v1M212.5 454v1M212.5 456v1M212.5 460v1M212.5 462v5M212.5 473v2M212.5 481v1M212.5 494v6M212.5 517v1M212.5 523v1M212.5 526v1M212.5 534v4M212.5 539v1M212.5 544v2M212.5 550v1M213.5 451v1M213.5 455v1M213.5 459v3M213.5 481v2M213.5 491v1M213.5 496v1M213.5 503v1M213.5 511v1M213.5 513v1M213.5 515v4M213.5 528v1M213.5 547v3M214.5 442v1M214.5 445v1M214.5 451v4M214.5 457v3M214.5 461v1M214.5 464v1M214.5 467v1M214.5 471v1M214.5 482v3M214.5 489v1M214.5 495v4M214.5 502v3M214.5 506v2M214.5 511v1M214.5 513v4M214.5 527v2M214.5 531v1M215.5 451v3M215.5 455v3M215.5 462v5M215.5 473v1M215.5 494v3M215.5 498v3M215.5 522v1M215.5 526v1M215.5 534v1M215.5 537v1M215.5 544v1M215.5 546v1M215.5 550v1M216.5 455v2M216.5 467v1M216.5 473v1M216.5 478v3M216.5 492v6M216.5 501v1M216.5 520v5M216.5 526v1M216.5 532v4M216.5 537v2M216.5 543v2M216.5 547v4M217.5 453v2M217.5 457v1M217.5 459v1M217.5 467v1M217.5 472v1M217.5 493v1M217.5 498v1M217.5 500v2M217.5 504v1M217.5 506v1M217.5 509v2M217.5 518v6M217.5 529v2M217.5 532v1M217.5 534v1M217.5 536v2M217.5 543v2M217.5 546v4M218.5 451v3M218.5 456v2M218.5 461v1M218.5 467v5M218.5 484v1M218.5 486v1M218.5 489v1M218.5 491v1M218.5 498v1M218.5 502v5M218.5 509v2M218.5 512v1M218.5 514v5M218.5 520v2M218.5 527v4M218.5 547v3M219.5 450v5M219.5 456v2M219.5 459v4M219.5 464v4M219.5 471v1M219.5 483v2M219.5 487v4M219.5 497v3M219.5 502v2M219.5 506v3M219.5 510v4M219.5 515v2M219.5 527v3M219.5 531v1M219.5 550v1M220.5 451v2M220.5 454v3M220.5 461v5M220.5 473v3M220.5 493v4M220.5 498v2M220.5 501v1M220.5 522v2M220.5 525v2M220.5 536v1M220.5 545v1M220.5 548v2M221.5 439v1M221.5 460v1M221.5 462v2M221.5 475v2M221.5 495v2M221.5 498v2M221.5 501v1M221.5 525v2M221.5 532v7M221.5 545v2M221.5 548v1M221.5 550v1M222.5 468v1M222.5 474v3M222.5 478v4M222.5 492v3M222.5 500v5M222.5 507v4M222.5 513v4M222.5 518v2M222.5 521v4M222.5 526v3M222.5 531v5M222.5 537v3M222.5 544v3M222.5 548v2M223.5 454v1M223.5 467v1M223.5 469v1M223.5 473v1M223.5 475v2M223.5 482v1M223.5 495v2M223.5 500v7M223.5 510v7M223.5 518v2M223.5 522v1M223.5 532v3M223.5 537v3M223.5 541v2M223.5 544v2M223.5 548v1M224.5 457v1M224.5 459v1M224.5 461v1M224.5 467v5M224.5 477v9M224.5 488v4M224.5 497v3M224.5 502v3M224.5 507v4M224.5 513v1M224.5 516v6M224.5 527v5M224.5 535v1M224.5 544v1M224.5 546v1M225.5 451v4M225.5 456v1M225.5 458v1M225.5 460v1M225.5 462v5M225.5 468v4M225.5 485v1M225.5 487v5M225.5 495v4M225.5 502v3M225.5 506v3M225.5 512v2M225.5 515v1M225.5 527v5M225.5 550v1M226.5 445v1M226.5 452v4M226.5 462v5M226.5 495v5M226.5 524v1M226.5 534v1M226.5 536v2M226.5 545v2M226.5 549v1M227.5 452v1M227.5 465v1M227.5 474v1M227.5 476v1M227.5 491v3M227.5 496v2M227.5 499v2M227.5 502v1M227.5 508v1M227.5 517v1M227.5 519v1M227.5 521v4M227.5 526v1M227.5 531v4M227.5 537v2M227.5 544v1M227.5 546v4M228.5 452v1M228.5 455v1M228.5 473v1M228.5 492v3M228.5 497v1M228.5 499v3M228.5 503v1M228.5 507v2M228.5 513v8M228.5 522v2M228.5 526v1M228.5 531v3M228.5 536v2M228.5 547v3M229.5 450v1M229.5 458v2M229.5 465v1M229.5 467v4M229.5 477v4M229.5 486v1M229.5 502v1M229.5 504v1M229.5 507v2M229.5 510v5M229.5 516v3M229.5 520v2M229.5 527v5M229.5 547v2M230.5 443v2M230.5 451v1M230.5 453v1M230.5 457v4M230.5 462v1M230.5 467v5M230.5 482v1M230.5 488v1M230.5 498v2M230.5 502v1M230.5 504v1M230.5 506v3M230.5 510v5M230.5 527v5M230.5 549v1M231.5 451v2M231.5 454v3M231.5 462v2M231.5 465v2M231.5 494v3M231.5 499v3M231.5 522v3M231.5 532v7M231.5 544v1M231.5 549v2M232.5 451v2M232.5 455v2M232.5 466v1M232.5 472v1M232.5 493v9M232.5 517v2M232.5 520v2M232.5 523v2M232.5 532v1M232.5 534v1M232.5 537v2M232.5 545v2M232.5 550v1M233.5 455v1M233.5 467v1M233.5 472v8M233.5 486v1M233.5 492v3M233.5 497v2M233.5 500v1M233.5 503v2M233.5 512v1M233.5 518v9M233.5 532v3M233.5 536v1M233.5 542v3M233.5 547v3M234.5 467v2M234.5 470v2M234.5 473v1M234.5 475v4M234.5 481v2M234.5 485v2M234.5 489v1M234.5 491v4M234.5 498v4M234.5 503v7M234.5 511v4M234.5 517v7M234.5 525v12M234.5 538v2M234.5 542v1M234.5 544v1M234.5 547v2M235.5 450v1M235.5 457v2M235.5 460v1M235.5 468v4M235.5 481v1M235.5 485v2M235.5 488v1M235.5 491v1M235.5 502v1M235.5 504v4M235.5 509v3M235.5 515v4M235.5 520v2M235.5 527v2M235.5 531v1M235.5 548v1M236.5 443v4M236.5 451v1M236.5 456v3M236.5 461v1M236.5 468v2M236.5 471v1M236.5 487v1M236.5 491v1M236.5 502v5M236.5 508v2M236.5 511v5M236.5 527v5M236.5 550v1M237.5 444v1M237.5 451v5M237.5 460v1M237.5 462v4M237.5 473v2M237.5 493v8M237.5 522v1M237.5 525v2M237.5 532v1M237.5 535v1M237.5 544v3M237.5 549v2M238.5 453v1M238.5 456v1M238.5 462v2M238.5 465v3M238.5 472v3M238.5 479v2M238.5 492v4M238.5 497v5M238.5 517v1M238.5 520v1M238.5 522v1M238.5 524v1M238.5 526v1M238.5 532v2M238.5 537v1M238.5 539v2M238.5 544v2M238.5 547v1M239.5 452v1M239.5 467v2M239.5 472v5M239.5 478v4M239.5 483v1M239.5 485v1M239.5 492v3M239.5 501v3M239.5 506v5M239.5 512v1M239.5 515v4M239.5 520v1M239.5 522v4M239.5 527v2M239.5 532v3M239.5 538v3M239.5 542v2M239.5 545v5M240.5 450v2M240.5 457v3M240.5 467v2M240.5 477v2M240.5 480v1M240.5 483v4M240.5 489v1M240.5 497v2M240.5 503v2M240.5 506v2M240.5 509v6M240.5 516v6M240.5 530v1M240.5 547v2M241.5 451v1M241.5 453v4M241.5 460v1M241.5 462v5M241.5 468v2M241.5 471v1M241.5 482v7M241.5 490v2M241.5 494v3M241.5 498v1M241.5 502v3M241.5 507v8M241.5 516v1M241.5 523v2M241.5 527v5M241.5 533v1M242.5 452v1M242.5 454v1M242.5 456v1M242.5 460v1M242.5 462v6M242.5 494v1M242.5 496v4M242.5 519v1M242.5 524v3M242.5 533v2M242.5 536v1M242.5 546v1M242.5 549v1M243.5 456v1M243.5 467v1M243.5 472v7M243.5 481v1M243.5 492v1M243.5 494v2M243.5 499v4M243.5 513v1M243.5 517v1M243.5 519v2M243.5 523v4M243.5 528v1M243.5 532v1M243.5 534v1M243.5 538v5M243.5 548v2M244.5 472v3M244.5 477v1M244.5 481v2M244.5 487v1M244.5 492v1M244.5 497v2M244.5 500v3M244.5 506v1M244.5 510v1M244.5 512v3M244.5 517v1M244.5 519v1M244.5 521v2M244.5 525v2M244.5 528v1M244.5 532v3M244.5 536v2M244.5 542v1M244.5 544v3M244.5 548v2M245.5 453v1M245.5 461v1M245.5 467v2M245.5 470v1M245.5 477v1M245.5 479v4M245.5 488v1M245.5 490v1M245.5 503v1M245.5 505v2M245.5 511v2M245.5 514v1M245.5 516v5M245.5 530v2M246.5 450v2M246.5 457v4M246.5 463v2M246.5 468v1M246.5 470v2M246.5 482v1M246.5 487v1M246.5 489v2M246.5 495v4M246.5 502v15M246.5 527v5M246.5 550v1M247.5 440v3M247.5 451v1M247.5 453v4M247.5 459v2M247.5 462v5M247.5 494v7M247.5 522v1M247.5 525v2M247.5 535v3M247.5 546v1M247.5 550v1M248.5 454v1M248.5 467v1M248.5 472v3M248.5 476v2M248.5 492v1M248.5 496v1M248.5 498v1M248.5 500v2M248.5 517v1M248.5 521v1M248.5 523v4M248.5 533v2M248.5 538v1M248.5 544v3M248.5 549v1M249.5 467v2M249.5 470v1M249.5 472v1M249.5 474v3M249.5 478v7M249.5 486v2M249.5 491v4M249.5 498v1M249.5 501v1M249.5 503v6M249.5 513v4M249.5 518v2M249.5 521v7M249.5 529v12M249.5 542v2M249.5 546v3M250.5 457v4M250.5 468v1M250.5 470v1M250.5 477v1M250.5 479v9M250.5 491v1M250.5 496v1M250.5 502v8M250.5 511v2M250.5 514v8M250.5 527v5M250.5 547v1M251.5 451v2M251.5 454v3M251.5 458v9M251.5 469v3M251.5 483v9M251.5 494v2M251.5 498v1M251.5 501v16M251.5 527v1M251.5 531v1M251.5 550v1M252.5 453v2M252.5 462v2M252.5 465v1M252.5 467v1M252.5 472v3M252.5 493v7M252.5 501v1M252.5 522v5M252.5 533v2M252.5 537v1M252.5 544v1M252.5 549v1M253.5 454v1M253.5 467v2M253.5 472v1M253.5 479v2M253.5 492v4M253.5 497v1M253.5 500v2M253.5 517v2M253.5 520v7M253.5 532v2M253.5 536v3M253.5 543v1M253.5 546v1M253.5 549v1M254.5 468v1M254.5 471v2M254.5 474v1M254.5 476v1M254.5 479v3M254.5 483v2M254.5 489v6M254.5 497v1M254.5 500v3M254.5 505v4M254.5 511v1M254.5 513v2M254.5 517v2M254.5 522v3M254.5 526v2M254.5 532v4M254.5 537v2M254.5 545v4M255.5 450v2M255.5 457v2M255.5 460v2M255.5 463v1M255.5 467v5M255.5 477v2M255.5 480v4M255.5 485v1M255.5 487v1M255.5 489v3M255.5 496v3M255.5 502v1M255.5 504v5M255.5 512v10M255.5 527v4M255.5 535v1M255.5 547v3M256.5 450v3M256.5 454v4M256.5 461v2M256.5 464v3M256.5 468v3M256.5 482v3M256.5 486v1M256.5 488v3M256.5 495v5M256.5 503v8M256.5 512v3M256.5 516v1M256.5 525v1M256.5 527v4M256.5 550v1M257.5 454v3M257.5 458v1M257.5 460v3M257.5 466v2M257.5 473v3M257.5 492v3M257.5 497v1M257.5 501v1M257.5 517v1M257.5 520v1M257.5 523v1M257.5 526v1M257.5 532v2M257.5 535v3M257.5 544v1M257.5 546v1M257.5 549v2M258.5 467v1M258.5 472v5M258.5 479v2M258.5 492v1M258.5 497v2M258.5 501v4M258.5 517v1M258.5 519v4M258.5 525v2M258.5 529v5M258.5 536v1M258.5 538v1M258.5 540v2M258.5 546v4M259.5 468v4M259.5 474v1M259.5 476v10M259.5 487v1M259.5 489v4M259.5 501v3M259.5 505v6M259.5 512v1M259.5 514v3M259.5 518v1M259.5 520v4M259.5 525v3M259.5 529v5M259.5 539v1M259.5 543v1M259.5 546v2M260.5 469v2M260.5 472v3M260.5 479v1M260.5 481v1M260.5 483v1M260.5 490v1M260.5 492v2M260.5 499v3M260.5 503v10M260.5 514v1M260.5 517v1M260.5 519v12M260.5 532v1M260.5 534v5M260.5 542v2M260.5 545v4M261.5 450v1M261.5 457v2M261.5 460v2M261.5 471v1M261.5 477v3M261.5 481v7M261.5 489v3M261.5 499v1M261.5 502v1M261.5 505v1M261.5 507v6M261.5 515v1M261.5 517v2M261.5 520v2M261.5 527v4M261.5 536v2M261.5 545v2M262.5 451v1M262.5 453v5M262.5 462v5M262.5 470v2M262.5 482v10M262.5 494v7M262.5 502v2M262.5 506v2M262.5 509v4M262.5 524v2M262.5 527v3M262.5 531v1M262.5 550v1M263.5 452v2M263.5 455v2M263.5 465v3M263.5 475v2M263.5 494v1M263.5 496v1M263.5 499v3M263.5 521v2M263.5 524v1M263.5 532v3M263.5 536v2M263.5 544v1M263.5 549v1M264.5 454v1M264.5 456v1M264.5 465v3M264.5 472v1M264.5 475v2M264.5 480v1M264.5 493v3M264.5 498v1M264.5 500v1M264.5 517v2M264.5 521v2M264.5 524v1M264.5 526v1M264.5 532v4M264.5 537v2M264.5 542v2M264.5 548v2M265.5 467v1M265.5 471v2M265.5 474v2M265.5 477v5M265.5 488v1M265.5 492v3M265.5 500v1M265.5 502v1M265.5 509v1M265.5 513v1M265.5 516v11M265.5 529v10M265.5 544v2M265.5 547v2M266.5 450v2M266.5 457v1M266.5 459v2M266.5 468v4M266.5 477v8M266.5 487v5M266.5 495v5M266.5 502v8M266.5 511v2M266.5 514v5M266.5 520v3M266.5 527v2M266.5 530v2M267.5 452v13M267.5 466v1M267.5 468v4M267.5 482v9M267.5 495v4M267.5 502v1M267.5 504v9M267.5 514v1M267.5 516v1M267.5 524v1M267.5 527v4M267.5 532v3M268.5 453v1M268.5 457v2M268.5 461v8M268.5 474v1M268.5 492v1M268.5 495v4M268.5 525v1M268.5 532v5M268.5 545v2M269.5 453v1M269.5 463v1M269.5 467v1M269.5 472v4M269.5 477v2M269.5 488v1M269.5 492v2M269.5 498v1M269.5 500v2M269.5 515v1M269.5 518v1M269.5 521v6M269.5 530v1M269.5 533v8M269.5 544v2M269.5 549v1M270.5 468v2M270.5 472v1M270.5 474v4M270.5 481v1M270.5 483v1M270.5 486v2M270.5 489v2M270.5 492v3M270.5 500v3M270.5 504v3M270.5 510v2M270.5 517v2M270.5 520v1M270.5 522v14M270.5 538v5M270.5 544v1M270.5 547v2M271.5 470v1M271.5 472v5M271.5 478v3M271.5 483v3M271.5 487v1M271.5 489v1M271.5 491v2M271.5 494v1M271.5 500v1M271.5 502v3M271.5 506v3M271.5 510v4M271.5 515v10M271.5 526v1M271.5 528v7M271.5 538v1M271.5 541v1M271.5 543v1M271.5 545v4M272.5 451v1M272.5 459v3M272.5 468v2M272.5 471v1M272.5 478v3M272.5 482v1M272.5 484v3M272.5 488v1M272.5 490v2M272.5 497v2M272.5 503v6M272.5 510v3M272.5 514v8M272.5 527v1M272.5 530v1M272.5 535v1M272.5 547v2M273.5 454v2M273.5 459v2M273.5 462v1M273.5 465v2M273.5 469v3M273.5 482v2M273.5 485v6M273.5 495v2M273.5 498v1M273.5 502v1M273.5 504v13M273.5 528v4M273.5 550v1M274.5 452v3M274.5 464v1M274.5 466v3M274.5 474v1M274.5 494v2M274.5 497v1M274.5 499v2M274.5 517v1M274.5 522v1M274.5 525v1M274.5 534v3M274.5 544v1M275.5 468v1M275.5 472v2M275.5 475v1M275.5 479v3M275.5 492v2M275.5 500v1M275.5 502v1M275.5 507v1M275.5 509v1M275.5 517v3M275.5 521v4M275.5 533v2M275.5 536v3M275.5 540v3M275.5 546v1M275.5 549v1M276.5 463v1M276.5 465v1M276.5 468v2M276.5 473v3M276.5 479v2M276.5 492v2M276.5 499v2M276.5 502v1M276.5 507v1M276.5 509v2M276.5 512v3M276.5 518v9M276.5 529v5M276.5 535v5M276.5 544v2M276.5 548v2M277.5 450v2M277.5 458v4M277.5 469v3M277.5 477v2M277.5 480v6M277.5 487v2M277.5 490v2M277.5 502v8M277.5 511v5M277.5 518v4M277.5 527v4M277.5 548v2M278.5 450v2M278.5 453v4M278.5 458v3M278.5 462v3M278.5 469v3M278.5 482v5M278.5 488v4M278.5 495v3M278.5 499v1M278.5 502v3M278.5 506v1M278.5 509v5M278.5 515v2M278.5 524v1M278.5 528v3M278.5 550v1M279.5 452v3M279.5 456v1M279.5 460v7M279.5 472v1M279.5 494v8M279.5 522v2M279.5 525v1M279.5 532v1M279.5 535v3M279.5 545v2M280.5 452v1M280.5 465v3M280.5 472v5M280.5 478v1M280.5 493v2M280.5 500v2M280.5 517v2M280.5 522v1M280.5 524v3M280.5 532v3M280.5 536v2M280.5 539v1M280.5 541v1M280.5 544v1M280.5 549v1M281.5 468v2M281.5 472v2M281.5 475v6M281.5 485v1M281.5 492v3M281.5 496v2M281.5 500v4M281.5 506v2M281.5 517v2M281.5 520v7M281.5 531v1M281.5 533v2M281.5 538v2M281.5 543v1M281.5 547v3M282.5 450v2M282.5 469v2M282.5 477v5M282.5 485v7M282.5 502v5M282.5 509v2M282.5 512v4M282.5 517v2M282.5 520v2M282.5 527v1M282.5 529v1M282.5 531v1M282.5 547v2M283.5 451v2M283.5 454v1M283.5 457v1M283.5 460v1M283.5 462v5M283.5 469v2M283.5 482v3M283.5 486v4M283.5 491v1M283.5 495v3M283.5 499v1M283.5 503v1M283.5 505v2M283.5 509v2M283.5 516v1M283.5 522v1M283.5 527v2M283.5 534v1M284.5 452v5M284.5 462v3M284.5 472v3M284.5 476v1M284.5 492v1M284.5 494v2M284.5 498v1M284.5 500v2M284.5 522v5M284.5 532v3M284.5 536v2M284.5 544v1M284.5 550v1M285.5 456v1M285.5 467v2M285.5 472v3M285.5 476v1M285.5 479v1M285.5 481v1M285.5 492v2M285.5 501v1M285.5 505v1M285.5 516v6M285.5 523v1M285.5 525v2M285.5 530v1M285.5 533v2M285.5 536v1M285.5 539v3M285.5 543v1M285.5 546v1M285.5 548v2M286.5 468v1M286.5 471v3M286.5 475v7M286.5 483v1M286.5 492v3M286.5 498v1M286.5 500v1M286.5 502v5M286.5 509v1M286.5 511v12M286.5 524v1M286.5 526v1M286.5 531v1M286.5 533v3M286.5 538v1M286.5 540v2M286.5 543v1M286.5 545v2M287.5 469v7M287.5 477v4M287.5 482v8M287.5 491v3M287.5 496v1M287.5 500v6M287.5 508v1M287.5 510v4M287.5 515v5M287.5 521v2M287.5 524v8M287.5 533v3M287.5 539v2M287.5 542v1M287.5 546v3M288.5 451v1M288.5 457v5M288.5 470v2M288.5 477v3M288.5 481v3M288.5 485v5M288.5 491v1M288.5 498v1M288.5 502v1M288.5 504v10M288.5 516v1M288.5 518v4M288.5 527v5M288.5 547v2M289.5 451v4M289.5 456v2M289.5 459v7M289.5 469v3M289.5 482v10M289.5 495v1M289.5 497v3M289.5 502v6M289.5 509v2M289.5 513v4M289.5 524v7M289.5 550v1M290.5 451v6M290.5 460v1M290.5 462v7M290.5 473v1M290.5 475v2M290.5 497v2M290.5 500v1M290.5 523v4M290.5 532v1M290.5 535v1M290.5 537v2M290.5 545v1M291.5 467v2M291.5 472v2M291.5 475v7M291.5 492v3M291.5 500v1M291.5 502v1M291.5 506v3M291.5 510v1M291.5 512v3M291.5 518v2M291.5 521v2M291.5 524v3M291.5 529v1M291.5 532v1M291.5 539v1M291.5 542v2M291.5 545v5M292.5 468v1M292.5 473v8M292.5 484v2M292.5 489v1M292.5 492v2M292.5 500v1M292.5 502v1M292.5 505v1M292.5 507v2M292.5 512v3M292.5 518v9M292.5 530v5M292.5 537v4M292.5 543v1M292.5 545v3M292.5 549v1M293.5 469v3M293.5 473v1M293.5 476v3M293.5 480v6M293.5 489v4M293.5 495v1M293.5 499v10M293.5 510v6M293.5 517v2M293.5 520v3M293.5 525v3M293.5 529v3M293.5 533v1M293.5 538v4M293.5 543v1M293.5 545v1M294.5 451v1M294.5 461v1M294.5 470v1M294.5 477v2M294.5 480v3M294.5 486v6M294.5 495v4M294.5 502v1M294.5 504v3M294.5 511v1M294.5 514v3M294.5 519v1M294.5 527v1M294.5 529v2M294.5 535v1M295.5 451v2M295.5 455v2M295.5 459v1M295.5 462v4M295.5 469v3M295.5 474v1M295.5 482v5M295.5 488v4M295.5 494v5M295.5 500v1M295.5 503v2M295.5 507v5M295.5 513v4M295.5 523v1M295.5 527v2M295.5 531v1M295.5 550v1M296.5 468v1M296.5 472v5M296.5 478v1M296.5 492v2M296.5 495v1M296.5 502v1M296.5 511v1M296.5 517v2M296.5 523v3M296.5 530v1M296.5 532v5M296.5 545v1M296.5 548v2M297.5 464v1M297.5 467v1M297.5 469v2M297.5 472v1M297.5 474v1M297.5 476v2M297.5 479v1M297.5 483v2M297.5 486v2M297.5 492v3M297.5 496v1M297.5 500v1M297.5 507v1M297.5 513v2M297.5 517v7M297.5 525v2M297.5 532v2M297.5 539v4M297.5 545v1M297.5 547v3M298.5 470v1M298.5 475v14M298.5 492v1M298.5 494v2M298.5 500v5M298.5 506v3M298.5 510v9M298.5 520v7M298.5 529v1M298.5 532v3M298.5 538v2M298.5 541v3M298.5 545v1M298.5 547v1M298.5 549v1M299.5 470v6M299.5 477v6M299.5 484v5M299.5 491v3M299.5 501v3M299.5 505v2M299.5 509v4M299.5 514v3M299.5 518v3M299.5 523v6M299.5 530v2M299.5 539v4M300.5 451v1M300.5 457v2M300.5 460v2M300.5 469v3M300.5 477v15M300.5 495v3M300.5 499v1M300.5 503v1M300.5 505v3M300.5 509v2M300.5 512v7M300.5 520v2M300.5 527v5M300.5 546v1M301.5 452v1M301.5 454v3M301.5 462v4M301.5 470v2M301.5 482v5M301.5 488v4M301.5 495v1M301.5 497v1M301.5 499v2M301.5 507v1M301.5 509v1M301.5 514v1M301.5 524v1M301.5 527v1M301.5 531v1M301.5 534v1M301.5 537v1M301.5 550v1M302.5 452v1M302.5 455v2M302.5 463v2M302.5 466v2M302.5 475v2M302.5 492v1M302.5 494v2M302.5 497v5M302.5 523v4M302.5 532v5M302.5 538v1M302.5 546v1M302.5 549v1M303.5 456v1M303.5 464v1M303.5 472v1M303.5 474v4M303.5 479v1M303.5 492v4M303.5 500v2M303.5 503v1M303.5 507v1M303.5 512v1M303.5 517v4M303.5 522v5M303.5 529v2M303.5 532v1M303.5 534v1M303.5 536v3M303.5 540v2M303.5 543v1M303.5 547v3M304.5 469v1M304.5 471v2M304.5 474v3M304.5 478v4M304.5 483v1M304.5 488v3M304.5 492v1M304.5 501v4M304.5 507v5M304.5 513v1M304.5 515v5M304.5 521v2M304.5 525v5M304.5 531v1M304.5 538v4M304.5 543v1M304.5 545v1M304.5 547v3M305.5 450v1M305.5 457v2M305.5 461v1M305.5 469v1M305.5 477v2M305.5 480v5M305.5 487v3M305.5 502v4M305.5 508v10M305.5 520v2M305.5 527v5M305.5 547v3M306.5 453v4M306.5 458v3M306.5 462v5M306.5 470v2M306.5 482v4M306.5 487v2M306.5 491v1M306.5 495v1M306.5 497v2M306.5 502v1M306.5 509v1M306.5 511v1M306.5 513v4M306.5 527v1M306.5 529v3M306.5 534v1M306.5 550v1M307.5 455v2M307.5 462v2M307.5 465v2M307.5 468v1M307.5 472v1M307.5 492v2M307.5 495v1M307.5 498v1M307.5 501v1M307.5 519v1M307.5 522v4M307.5 532v5M308.5 462v1M308.5 467v2M308.5 472v7M308.5 493v2M308.5 498v1M308.5 500v2M308.5 519v2M308.5 522v1M308.5 524v3M308.5 533v3M308.5 538v1M308.5 540v1M308.5 544v1M308.5 546v1M308.5 549v1M309.5 468v3M309.5 473v2M309.5 476v5M309.5 483v1M309.5 485v1M309.5 487v7M309.5 498v1M309.5 501v5M309.5 509v5M309.5 516v1M309.5 518v7M309.5 526v5M309.5 532v5M309.5 538v3M309.5 542v1M309.5 547v2M310.5 450v1M310.5 458v1M310.5 461v1M310.5 470v2M310.5 480v5M310.5 486v1M310.5 488v3M310.5 496v1M310.5 504v6M310.5 511v1M310.5 513v3M310.5 519v1M310.5 521v1M310.5 531v1M310.5 547v1M311.5 450v6M311.5 457v5M311.5 464v1M311.5 469v1M311.5 471v1M311.5 482v8M311.5 491v1M311.5 495v1M311.5 503v1M311.5 508v1M311.5 513v2M311.5 527v5M311.5 550v1M312.5 452v2M312.5 455v1M312.5 462v6M312.5 474v2M312.5 494v1M312.5 497v5M312.5 519v1M312.5 524v1M312.5 526v1M312.5 533v2M312.5 537v1M312.5 544v3M312.5 550v1M313.5 467v1M313.5 469v1M313.5 472v1M313.5 474v3M313.5 492v5M313.5 500v2M313.5 517v4M313.5 522v1M313.5 524v4M313.5 532v3M313.5 538v1M313.5 541v4M313.5 546v1M313.5 548v1M314.5 469v1M314.5 472v13M314.5 493v2M314.5 496v1M314.5 502v4M314.5 507v2M314.5 514v1M314.5 517v2M314.5 522v1M314.5 524v1M314.5 528v3M314.5 533v2M314.5 538v6M314.5 546v3M315.5 450v2M315.5 459v2M315.5 470v2M315.5 477v10M315.5 489v2M315.5 502v1M315.5 504v5M315.5 512v5M315.5 520v1M315.5 527v5M315.5 549v1M316.5 451v1M316.5 453v9M316.5 463v4M316.5 470v2M316.5 482v2M316.5 485v3M316.5 489v3M316.5 496v2M316.5 499v1M316.5 502v6M316.5 509v3M316.5 515v2M316.5 523v1M316.5 528v1M316.5 530v2M316.5 550v1M317.5 452v2M317.5 463v1M317.5 465v4M317.5 473v4M317.5 479v1M317.5 492v1M317.5 494v1M317.5 498v1M317.5 500v2M317.5 519v1M317.5 522v4M317.5 532v5M317.5 544v4M318.5 469v1M318.5 472v1M318.5 478v3M318.5 484v1M318.5 492v2M318.5 513v1M318.5 515v2M318.5 518v4M318.5 524v4M318.5 531v3M318.5 539v5M318.5 547v3M319.5 470v1M319.5 472v1M319.5 474v2M319.5 477v1M319.5 479v3M319.5 483v2M319.5 491v2M319.5 494v1M319.5 501v13M319.5 515v11M319.5 528v5M319.5 536v1M319.5 538v6M319.5 545v4M320.5 470v2M320.5 473v6M320.5 481v2M320.5 484v1M320.5 486v5M320.5 492v1M320.5 500v3M320.5 504v4M320.5 509v1M320.5 512v1M320.5 514v4M320.5 520v1M320.5 522v4M320.5 531v2M320.5 539v5M321.5 450v1M321.5 457v2M321.5 460v2M321.5 471v1M321.5 477v1M321.5 479v1M321.5 481v7M321.5 489v1M321.5 491v1M321.5 495v1M321.5 497v2M321.5 502v1M321.5 507v2M321.5 510v2M321.5 515v1M321.5 521v1M321.5 529v2M321.5 535v2M322.5 452v3M322.5 456v2M322.5 459v2M322.5 462v3M322.5 466v1M322.5 471v1M322.5 482v2M322.5 485v3M322.5 489v3M322.5 496v2M322.5 499v1M322.5 502v1M322.5 505v3M322.5 509v4M322.5 514v3M322.5 528v4M322.5 535v1M322.5 550v1M323.5 452v1M323.5 457v1M323.5 467v3M323.5 475v1M323.5 492v1M323.5 494v2M323.5 497v1M323.5 499v3M323.5 521v1M323.5 523v4M323.5 533v3M323.5 544v1M323.5 548v1M324.5 470v1M324.5 472v9M324.5 487v1M324.5 492v2M324.5 502v3M324.5 509v1M324.5 514v2M324.5 518v4M324.5 523v2M324.5 526v4M324.5 532v1M324.5 538v6M324.5 545v1M324.5 547v1M324.5 549v1M325.5 470v2M325.5 474v4M325.5 480v1M325.5 482v2M325.5 485v2M325.5 490v4M325.5 500v1M325.5 502v7M325.5 510v1M325.5 512v5M325.5 518v2M325.5 521v1M325.5 523v2M325.5 527v1M325.5 529v3M325.5 539v2M325.5 542v2M326.5 471v1M326.5 473v1M326.5 475v6M326.5 483v11M326.5 500v9M326.5 510v4M326.5 515v3M326.5 520v1M326.5 522v4M326.5 527v1M326.5 530v2M326.5 534v1M326.5 538v2M326.5 541v3M327.5 451v1M327.5 457v5M327.5 471v1M327.5 479v2M327.5 483v1M327.5 485v5M327.5 495v1M327.5 505v1M327.5 507v3M327.5 517v2M327.5 524v1M327.5 532v1M327.5 535v1M328.5 451v6M328.5 459v5M328.5 465v2M328.5 471v1M328.5 483v1M328.5 485v4M328.5 490v1M328.5 495v3M328.5 503v2M328.5 507v5M328.5 516v1M328.5 528v1M328.5 532v1M328.5 550v1M329.5 462v3M329.5 467v3M329.5 472v5M329.5 492v4M329.5 500v2M329.5 517v2M329.5 520v1M329.5 522v5M329.5 532v6M329.5 544v4M330.5 462v2M330.5 467v2M330.5 473v5M330.5 492v3M330.5 496v1M330.5 500v2M330.5 517v3M330.5 522v2M330.5 531v4M330.5 536v1M330.5 538v3M330.5 543v1M330.5 547v1M330.5 549v2M331.5 470v1M331.5 473v2M331.5 476v1M331.5 479v4M331.5 492v3M331.5 500v1M331.5 502v3M331.5 507v5M331.5 515v7M331.5 523v2M331.5 527v2M331.5 530v1M331.5 532v1M331.5 534v2M331.5 538v6M331.5 548v1M332.5 451v1M332.5 457v2M332.5 471v1M332.5 478v14M332.5 496v1M332.5 502v14M332.5 517v1M332.5 519v2M332.5 528v4M333.5 453v8M333.5 462v3M333.5 466v1M333.5 471v1M333.5 482v4M333.5 488v4M333.5 499v1M333.5 507v1M333.5 509v7M333.5 527v2M333.5 550v1M334.5 452v1M334.5 454v1M334.5 457v1M334.5 462v1M334.5 464v2M334.5 467v3M334.5 473v2M334.5 494v3M334.5 498v1M334.5 500v2M334.5 518v1M334.5 523v4M334.5 532v6M334.5 550v1M335.5 467v10M335.5 478v4M335.5 493v1M335.5 499v1M335.5 501v2M335.5 511v1M335.5 517v4M335.5 522v3M335.5 528v1M335.5 538v3M335.5 542v2M335.5 547v2M336.5 471v1M336.5 473v3M336.5 477v6M336.5 487v1M336.5 489v2M336.5 492v2M336.5 500v1M336.5 503v2M336.5 506v4M336.5 511v6M336.5 520v5M336.5 527v6M336.5 538v5M336.5 547v2M337.5 471v6M337.5 478v2M337.5 482v11M337.5 502v1M337.5 504v2M337.5 507v2M337.5 510v2M337.5 514v4M337.5 521v1M337.5 526v2M337.5 529v1M337.5 531v1M337.5 538v6M337.5 548v1M338.5 451v1M338.5 458v1M338.5 461v1M338.5 471v1M338.5 477v2M338.5 481v4M338.5 486v6M338.5 496v1M338.5 502v4M338.5 508v2M338.5 511v2M338.5 514v1M338.5 516v4M338.5 527v2M338.5 530v2M338.5 548v1M339.5 452v1M339.5 454v3M339.5 458v1M339.5 461v6M339.5 482v1M339.5 488v3M339.5 494v1M339.5 496v4M339.5 501v1M339.5 509v1M339.5 512v2M339.5 516v1M339.5 523v2M339.5 531v2M339.5 550v1M340.5 452v2M340.5 455v2M340.5 462v7M340.5 470v1M340.5 474v1M340.5 492v2M340.5 497v3M340.5 501v1M340.5 521v2M340.5 524v3M340.5 533v4M340.5 550v1M341.5 467v1M341.5 469v2M341.5 472v5M341.5 479v2M341.5 492v3M341.5 501v1M341.5 512v1M341.5 514v1M341.5 517v7M341.5 531v1M341.5 534v1M341.5 538v3M341.5 543v2M341.5 547v1M341.5 549v1M342.5 471v2M342.5 475v1M342.5 477v3M342.5 481v5M342.5 487v5M342.5 493v2M342.5 501v10M342.5 512v5M342.5 521v1M342.5 524v1M342.5 527v3M342.5 531v1M342.5 539v5M342.5 547v1M343.5 451v1M343.5 457v2M343.5 460v2M343.5 471v1M343.5 477v8M343.5 487v2M343.5 495v1M343.5 499v1M343.5 502v2M343.5 505v5M343.5 511v4M343.5 516v1M343.5 518v1M343.5 520v2M343.5 529v1M344.5 451v6M344.5 460v7M344.5 482v3M344.5 490v1M344.5 494v6M344.5 507v3M344.5 513v1M344.5 516v1M344.5 532v1M344.5 549v2M345.5 454v3M345.5 463v1M345.5 467v1M345.5 469v2M345.5 475v2M345.5 492v2M345.5 500v1M345.5 523v1M345.5 525v2M345.5 532v5M345.5 544v3M345.5 548v3M346.5 467v4M346.5 473v4M346.5 493v1M346.5 500v2M346.5 518v1M346.5 520v7M346.5 533v1M346.5 537v3M346.5 542v2M346.5 547v3M347.5 471v3M347.5 475v12M347.5 488v4M347.5 502v4M347.5 507v7M347.5 515v3M347.5 519v1M347.5 523v1M347.5 526v6M347.5 534v1M347.5 538v6M348.5 471v3M348.5 475v8M348.5 485v4M348.5 490v4M348.5 500v3M348.5 504v2M348.5 507v7M348.5 515v2M348.5 525v4M348.5 530v3M348.5 534v1M348.5 537v7M349.5 450v2M349.5 457v2M349.5 460v2M349.5 478v2M349.5 481v8M349.5 491v1M349.5 502v3M349.5 506v4M349.5 511v1M349.5 514v1M349.5 516v2M349.5 519v2M349.5 527v3M349.5 548v1M350.5 455v8M350.5 466v1M350.5 482v2M350.5 490v1M350.5 495v3M350.5 499v2M350.5 502v1M350.5 510v1M350.5 512v3M350.5 527v2M350.5 531v1M350.5 550v1M351.5 452v5M351.5 462v2M351.5 465v1M351.5 467v4M351.5 472v1M351.5 474v3M351.5 492v1M351.5 494v1M351.5 499v2M351.5 522v1M351.5 524v3M351.5 532v6M351.5 544v1M351.5 546v1M351.5 549v1M352.5 467v1M352.5 469v5M352.5 475v2M352.5 481v1M352.5 491v4M352.5 501v1M352.5 506v1M352.5 518v2M352.5 521v1M352.5 523v1M352.5 532v3M352.5 540v1M352.5 542v2M353.5 473v1M353.5 476v5M353.5 486v1M353.5 492v2M353.5 500v3M353.5 506v1M353.5 508v2M353.5 513v1M353.5 515v4M353.5 520v2M353.5 525v1M353.5 527v2M353.5 530v2M353.5 533v2M353.5 538v6M353.5 547v3M354.5 450v1M354.5 458v1M354.5 460v1M354.5 477v1M354.5 480v3M354.5 485v7M354.5 502v7M354.5 511v4M354.5 516v1M354.5 518v3M354.5 529v3M355.5 451v1M355.5 457v1M355.5 459v1M355.5 461v1M355.5 463v2M355.5 483v3M355.5 487v3M355.5 495v1M355.5 497v2M355.5 502v2M355.5 506v1M355.5 514v3M355.5 534v1M355.5 549v1M356.5 451v1M356.5 453v4M356.5 462v1M356.5 464v3M356.5 472v1M356.5 492v1M356.5 494v3M356.5 499v1M356.5 501v1M356.5 524v3M356.5 532v6M356.5 544v1M356.5 549v1M357.5 469v2M357.5 472v5M357.5 478v3M357.5 492v2M357.5 498v1M357.5 518v4M357.5 523v2M357.5 526v1M357.5 532v2M357.5 537v2M357.5 541v3M357.5 549v1M358.5 471v2M358.5 476v3M358.5 481v1M358.5 483v9M358.5 502v2M358.5 505v4M358.5 510v7M358.5 527v5M358.5 539v5M359.5 471v2M359.5 474v1M359.5 477v1M359.5 480v2M359.5 483v8M359.5 493v2M359.5 503v6M359.5 514v3M359.5 519v4M359.5 526v3M359.5 530v2M359.5 534v1M359.5 541v1M359.5 543v1M360.5 450v1M360.5 477v4M360.5 482v5M360.5 488v3M360.5 503v1M360.5 506v2M360.5 509v1M360.5 511v4M360.5 516v1M360.5 520v2M360.5 528v3M361.5 451v1M361.5 453v10M361.5 472v1M361.5 482v1M361.5 488v1M361.5 491v1M361.5 494v2M361.5 497v1M361.5 502v1M361.5 504v3M361.5 509v1M361.5 511v1M361.5 529v1M361.5 532v1M361.5 550v1M362.5 452v1M362.5 454v4M362.5 462v6M362.5 469v1M362.5 471v1M362.5 474v3M362.5 492v3M362.5 500v2M362.5 522v4M362.5 532v4M362.5 545v2M362.5 550v1M363.5 468v2M363.5 471v4M363.5 477v4M363.5 492v2M363.5 501v1M363.5 518v3M363.5 528v1M363.5 536v1M363.5 538v3M363.5 542v2M363.5 547v3M364.5 477v2M364.5 480v7M364.5 489v3M364.5 502v10M364.5 513v1M364.5 515v2M364.5 528v4M364.5 534v1M364.5 538v1M364.5 541v3M364.5 548v1M365.5 476v1M365.5 481v5M365.5 487v6M365.5 503v1M365.5 505v1M365.5 507v8M365.5 516v1M365.5 520v1M365.5 523v2M365.5 526v1M365.5 528v4M365.5 537v3M365.5 541v3M366.5 451v1M366.5 457v1M366.5 459v2M366.5 478v1M366.5 483v2M366.5 487v2M366.5 490v2M366.5 506v1M366.5 508v2M366.5 511v3M366.5 515v2M366.5 519v1M366.5 527v2M366.5 530v1M366.5 548v1M367.5 452v4M367.5 458v3M367.5 462v4M367.5 472v1M367.5 483v2M367.5 486v3M367.5 490v2M367.5 494v5M367.5 507v1M367.5 509v1M367.5 527v1M367.5 550v1M368.5 452v1M368.5 454v3M368.5 463v2M368.5 467v3M368.5 475v1M368.5 493v2M368.5 499v3M368.5 522v5M368.5 532v6M368.5 546v1M368.5 549v2M369.5 452v1M369.5 466v6M369.5 473v4M369.5 480v1M369.5 492v2M369.5 496v1M369.5 500v2M369.5 517v2M369.5 521v6M369.5 534v1M369.5 538v2M369.5 541v1M369.5 543v1M369.5 545v1M369.5 547v1M369.5 550v1M370.5 476v5M370.5 482v1M370.5 485v2M370.5 488v3M370.5 502v6M370.5 509v8M370.5 518v2M370.5 522v3M370.5 527v5M370.5 539v3M370.5 547v1M371.5 451v1M371.5 459v3M371.5 478v1M371.5 482v5M371.5 489v1M371.5 491v1M371.5 497v3M371.5 503v2M371.5 508v1M371.5 510v1M371.5 514v2M371.5 527v1M371.5 530v2M371.5 536v1M372.5 452v1M372.5 454v2M372.5 459v1M372.5 462v2M372.5 465v2M372.5 482v2M372.5 491v1M372.5 493v1M372.5 495v4M372.5 500v2M372.5 504v1M372.5 509v1M372.5 515v2M372.5 523v1M372.5 525v2M372.5 528v1M372.5 531v1M372.5 533v1M373.5 452v2M373.5 455v2M373.5 462v1M373.5 465v1M373.5 468v1M373.5 471v1M373.5 473v4M373.5 480v2M373.5 492v2M373.5 497v2M373.5 500v2M373.5 504v1M373.5 519v2M373.5 522v2M373.5 531v4M373.5 536v2M374.5 468v2M374.5 471v1M374.5 474v2M374.5 477v2M374.5 480v4M374.5 489v2M374.5 492v2M374.5 503v1M374.5 506v2M374.5 511v2M374.5 514v1M374.5 517v2M374.5 521v1M374.5 530v2M374.5 534v1M374.5 539v5M374.5 547v3M375.5 477v1M375.5 482v10M375.5 502v2M375.5 505v4M375.5 511v2M375.5 514v1M375.5 516v2M375.5 522v1M375.5 525v1M375.5 528v1M375.5 530v2M375.5 539v5M376.5 475v3M376.5 482v3M376.5 486v8M376.5 500v1M376.5 502v1M376.5 504v1M376.5 506v3M376.5 511v1M376.5 514v1M376.5 519v1M376.5 521v1M376.5 528v1M376.5 531v1M376.5 533v1M376.5 539v5M377.5 450v2M377.5 457v2M377.5 460v2M377.5 477v6M377.5 484v3M377.5 488v1M377.5 496v1M377.5 505v1M377.5 507v1M377.5 509v1M377.5 511v3M377.5 519v1M377.5 528v1M378.5 451v6M378.5 458v7M378.5 466v1M378.5 472v1M378.5 483v4M378.5 494v1M378.5 496v1M378.5 498v2M378.5 505v1M378.5 507v2M378.5 511v3M378.5 522v2M378.5 531v1M378.5 533v1M379.5 453v1M379.5 467v5M379.5 473v4M379.5 492v3M379.5 498v1M379.5 501v1M379.5 518v1M379.5 522v5M379.5 532v5M379.5 544v1M379.5 546v1M379.5 549v2M380.5 467v1M380.5 469v1M380.5 474v3M380.5 479v2M380.5 492v1M380.5 501v1M380.5 505v1M380.5 509v1M380.5 511v2M380.5 514v1M380.5 517v1M380.5 519v5M380.5 532v3M380.5 539v1M380.5 541v1M380.5 543v2M380.5 549v1M381.5 475v1M381.5 477v3M381.5 481v1M381.5 483v7M381.5 491v1M381.5 502v1M381.5 504v12M381.5 520v1M381.5 525v4M381.5 530v2M381.5 539v1M381.5 541v3M381.5 547v2M382.5 476v1M382.5 479v4M382.5 484v1M382.5 486v1M382.5 489v2M382.5 502v1M382.5 505v1M382.5 507v2M382.5 510v3M382.5 515v1M382.5 525v1M382.5 542v1M383.5 451v1M383.5 457v2M383.5 460v2M383.5 477v4M383.5 482v2M383.5 487v2M383.5 491v1M383.5 494v3M383.5 511v2M383.5 514v1M383.5 516v4M383.5 527v3M383.5 544v1M384.5 452v1M384.5 454v2M384.5 462v2M384.5 465v1M384.5 473v1M384.5 475v1M384.5 481v1M384.5 487v2M384.5 492v1M384.5 494v2M384.5 497v1M384.5 499v1M384.5 507v1M384.5 522v1M384.5 527v1M384.5 530v2M384.5 533v1M384.5 550v1M385.5 469v1M385.5 474v4M385.5 479v1M385.5 481v1M385.5 492v1M385.5 507v2M385.5 517v4M385.5 522v1M385.5 524v3M385.5 532v5M385.5 544v4M385.5 550v1M386.5 468v2M386.5 471v1M386.5 475v8M386.5 492v1M386.5 505v3M386.5 513v2M386.5 517v6M386.5 524v1M386.5 526v1M386.5 529v1M386.5 531v4M386.5 538v6M386.5 547v3M387.5 475v1M387.5 481v10M387.5 502v2M387.5 505v4M387.5 510v1M387.5 513v2M387.5 517v2M387.5 520v1M387.5 527v1M387.5 531v2M387.5 538v4M387.5 548v1M388.5 478v1M388.5 482v6M388.5 490v1M388.5 493v1M388.5 505v2M388.5 516v1M388.5 518v1M388.5 539v5M389.5 451v1M389.5 458v1M389.5 479v1M389.5 483v2M389.5 486v1M389.5 488v1M389.5 490v1M389.5 503v2M389.5 507v1M389.5 509v2M389.5 527v1M389.5 530v2M390.5 451v1M390.5 453v2M390.5 458v5M390.5 472v1M390.5 482v2M390.5 485v1M390.5 487v1M390.5 495v3M390.5 503v1M390.5 506v2M390.5 509v1M390.5 511v1M390.5 516v1M390.5 528v1M390.5 531v1M390.5 549v2M391.5 452v5M391.5 462v6M391.5 469v2M391.5 473v1M391.5 475v2M391.5 492v1M391.5 496v1M391.5 500v2M391.5 522v2M391.5 525v2M391.5 532v6M391.5 544v3M391.5 550v1M392.5 467v2M392.5 470v2M392.5 474v1M392.5 476v2M392.5 479v1M392.5 493v1M392.5 500v1M392.5 517v5M392.5 532v1M392.5 534v1M392.5 538v2M392.5 541v3M392.5 549v2M393.5 474v1M393.5 477v1M393.5 480v1M393.5 482v6M393.5 489v2M393.5 502v8M393.5 511v2M393.5 515v2M393.5 519v1M393.5 528v1M393.5 530v1M393.5 539v2M393.5 543v1M394.5 483v1M394.5 485v3M394.5 489v4M394.5 507v1M394.5 509v3M394.5 515v1M394.5 519v1M394.5 527v1M394.5 529v2M394.5 539v2M394.5 542v2M395.5 457v5M395.5 472v1M395.5 478v1M395.5 484v6M395.5 495v3M395.5 509v1M395.5 512v3M395.5 516v1M395.5 519v3M395.5 527v1M395.5 531v1M395.5 535v1M395.5 544v2M396.5 453v4M396.5 459v6M396.5 466v1M396.5 472v2M396.5 486v1M396.5 494v5M396.5 507v1M396.5 509v1M396.5 523v1M396.5 526v1M396.5 531v1M396.5 550v1M397.5 463v1M397.5 467v2M397.5 470v2M397.5 476v1M397.5 479v3M397.5 492v2M397.5 501v1M397.5 516v2M397.5 521v1M397.5 523v2M397.5 532v4M397.5 537v1M397.5 545v2M397.5 548v1M398.5 468v1M398.5 471v1M398.5 477v1M398.5 481v2M398.5 487v2M398.5 492v2M398.5 500v1M398.5 503v1M398.5 505v1M398.5 511v1M398.5 513v8M398.5 530v1M398.5 539v5M398.5 547v3M399.5 482v9M399.5 500v1M399.5 503v1M399.5 505v2M399.5 508v3M399.5 513v4M399.5 522v2M399.5 527v3M399.5 531v1M399.5 533v1M399.5 539v3M399.5 543v1M399.5 547v1M400.5 485v1M400.5 488v1M400.5 490v1M400.5 493v1M400.5 509v1M400.5 540v1M400.5 543v1M401.5 451v1M401.5 457v4M401.5 472v1M401.5 481v2M401.5 486v2M401.5 508v1M401.5 537v1M402.5 451v6M402.5 458v1M402.5 462v1M402.5 464v3M402.5 473v1M402.5 476v1M402.5 484v1M402.5 494v3M402.5 499v1M402.5 501v1M402.5 524v2M402.5 550v1M403.5 453v1M403.5 455v2M403.5 463v1M403.5 465v1M403.5 469v3M403.5 474v3M403.5 492v2M403.5 499v3M403.5 522v5M403.5 532v5M403.5 545v2M403.5 550v1M404.5 467v2M404.5 470v1M404.5 477v5M404.5 485v2M404.5 492v1M404.5 501v1M404.5 503v1M404.5 507v1M404.5 512v3M404.5 517v5M404.5 524v2M404.5 531v1M404.5 534v1M404.5 538v5M404.5 545v1M404.5 549v1M405.5 482v4M405.5 487v2M405.5 490v2M405.5 503v5M405.5 509v4M405.5 515v2M405.5 519v1M405.5 528v3M405.5 539v1M405.5 541v3M406.5 508v1M406.5 510v2M406.5 539v1M406.5 541v3M407.5 457v4M407.5 472v2M407.5 485v1M407.5 498v2M407.5 545v1M408.5 452v1M408.5 455v1M408.5 457v2M408.5 462v1M408.5 464v3M408.5 472v1M408.5 474v1M408.5 495v5M408.5 523v1M408.5 531v1M408.5 533v1M408.5 545v1M408.5 550v1M409.5 455v2M409.5 464v2M409.5 467v1M409.5 469v3M409.5 478v1M409.5 492v2M409.5 500v2M409.5 522v3M409.5 533v4M409.5 546v1M410.5 468v2M410.5 471v1M410.5 475v1M410.5 477v1M410.5 479v3M410.5 486v1M410.5 492v1M410.5 501v1M410.5 510v1M410.5 517v1M410.5 519v6M410.5 533v3M410.5 538v1M410.5 541v3M410.5 549v1M411.5 478v1M411.5 480v1M411.5 482v1M411.5 484v8M411.5 502v8M411.5 512v5M411.5 521v1M411.5 526v3M411.5 530v2M411.5 539v2M411.5 542v2M411.5 547v2M412.5 509v1M412.5 512v1M412.5 533v1M412.5 539v2M412.5 542v2M413.5 451v1M413.5 457v5M413.5 498v1M413.5 544v1M414.5 452v7M414.5 460v1M414.5 462v5M414.5 473v3M414.5 495v2M414.5 498v2M414.5 513v2M414.5 527v1M414.5 529v3M414.5 550v1M415.5 455v2M415.5 462v1M415.5 467v5M415.5 475v1M415.5 492v2M415.5 498v1M415.5 500v2M415.5 522v2M415.5 525v2M415.5 532v3M415.5 545v2M416.5 467v1M416.5 471v1M416.5 477v1M416.5 479v3M416.5 491v1M416.5 500v1M416.5 503v1M416.5 505v2M416.5 511v1M416.5 517v4M416.5 530v1M416.5 532v1M416.5 536v3M416.5 544v2M416.5 547v3M417.5 477v1M417.5 483v2M417.5 486v3M417.5 491v1M417.5 502v1M417.5 504v1M417.5 506v2M417.5 509v2M417.5 518v1M417.5 528v1M417.5 538v3M417.5 542v1M417.5 548v1M418.5 484v1M418.5 486v1M418.5 491v1M418.5 502v1M418.5 505v1M418.5 509v1M418.5 517v2M418.5 539v4M419.5 539v4M419.5 546v1M420.5 457v5M420.5 472v4M420.5 479v1M420.5 484v1M420.5 495v4M420.5 537v1M421.5 452v1M421.5 462v2M421.5 465v2M421.5 492v2M421.5 495v1M421.5 500v1M421.5 511v4M421.5 524v1M421.5 527v2M421.5 531v1M421.5 533v1M421.5 550v1M422.5 467v3M422.5 471v1M422.5 475v2M422.5 480v1M422.5 483v1M422.5 493v1M422.5 501v1M422.5 518v1M422.5 521v6M422.5 532v3M422.5 548v1M422.5 550v1M423.5 477v2M423.5 482v5M423.5 489v3M423.5 503v4M423.5 508v5M423.5 522v1M423.5 525v6M423.5 532v1M423.5 535v2M423.5 538v1M423.5 544v1M423.5 547v1M424.5 484v1M424.5 486v3M424.5 502v2M424.5 506v2M424.5 511v1M424.5 513v4M424.5 530v1M424.5 535v1M424.5 538v1M424.5 544v5M425.5 511v1M425.5 516v1M425.5 530v1M425.5 536v1M425.5 540v3M425.5 544v4M426.5 458v1M426.5 460v1M426.5 472v5M426.5 495v1M426.5 497v2M426.5 501v1M426.5 508v1M426.5 535v1M426.5 548v1M427.5 453v1M427.5 464v1M427.5 475v1M427.5 479v2M427.5 492v4M427.5 499v3M427.5 514v1M427.5 522v2M427.5 528v1M427.5 533v2M427.5 550v1M428.5 467v1M428.5 471v1M428.5 476v6M428.5 485v1M428.5 492v1M428.5 499v2M428.5 522v1M428.5 524v1M428.5 533v2M428.5 537v1M428.5 549v1M429.5 482v2M429.5 485v2M429.5 488v1M429.5 490v2M429.5 502v1M429.5 505v3M429.5 509v3M429.5 517v2M429.5 523v4M429.5 531v1M429.5 533v5M429.5 549v1M430.5 489v2M430.5 504v2M430.5 507v1M430.5 514v4M430.5 519v2M430.5 522v1M430.5 528v4M430.5 536v1M430.5 538v1M430.5 544v1M430.5 549v1M431.5 503v2M431.5 526v3M431.5 531v1M431.5 536v1M431.5 539v5M431.5 545v2M431.5 548v1M432.5 538v2M432.5 541v1M432.5 544v5M433.5 451v1M433.5 458v2M433.5 461v1M433.5 475v1M433.5 496v3M434.5 452v2M434.5 455v2M434.5 462v5M434.5 475v2M434.5 481v1M434.5 492v1M434.5 494v1M434.5 496v1M434.5 498v2M434.5 513v1M435.5 469v3M435.5 477v5M435.5 483v2M435.5 487v1M435.5 490v2M435.5 500v1M435.5 534v2M435.5 537v1M435.5 550v1M436.5 469v1M436.5 478v1M436.5 483v4M436.5 488v4M436.5 505v2M436.5 535v1M436.5 537v1M436.5 550v1M437.5 502v4M437.5 507v1M437.5 511v1M437.5 515v4M437.5 520v11M437.5 536v3M437.5 545v1M437.5 549v1M438.5 538v3M438.5 542v1M438.5 544v1M438.5 546v1M438.5 549v2M439.5 460v1M439.5 474v2M439.5 492v2M439.5 497v2M439.5 535v1M439.5 550v1M440.5 476v1M440.5 480v2M440.5 492v2M440.5 499v1M440.5 501v1M440.5 513v2M440.5 533v1M440.5 551v1M441.5 471v1M441.5 478v4M441.5 483v1M441.5 486v3M441.5 491v1M441.5 501v1M441.5 519v1M441.5 532v1M441.5 535v1M441.5 550v2M442.5 482v5M442.5 488v4M442.5 504v9M442.5 518v2M442.5 522v1M442.5 524v3M442.5 528v1M442.5 532v6M442.5 548v1M442.5 550v1M443.5 508v1M443.5 520v1M443.5 526v6M443.5 537v1M443.5 541v1M443.5 545v1M443.5 550v1M444.5 537v1M444.5 539v1M444.5 541v3M444.5 545v1M444.5 549v2M445.5 536v5M445.5 543v3M445.5 549v2M446.5 475v1M446.5 492v4M446.5 498v1M446.5 547v2M447.5 475v1M447.5 478v1M447.5 481v1M447.5 493v2M447.5 499v1M448.5 477v1M448.5 479v4M448.5 491v1M448.5 500v2M448.5 532v1M448.5 535v1M449.5 483v9M449.5 505v2M449.5 513v2M449.5 525v2M449.5 533v1M449.5 535v2M450.5 502v1M450.5 506v1M450.5 510v2M450.5 513v1M450.5 516v5M450.5 523v2M450.5 530v3M450.5 534v1M450.5 537v2M450.5 542v1M450.5 549v3M451.5 476v1M451.5 492v2M451.5 499v1M451.5 532v1M451.5 535v3M451.5 551v1M452.5 476v2M452.5 480v2M452.5 500v1M452.5 511v2M452.5 531v2M452.5 535v2M453.5 482v10M453.5 502v1M453.5 510v1M453.5 513v1M453.5 532v4M453.5 552v1M454.5 483v2M454.5 488v2M454.5 502v3M454.5 506v5M454.5 512v1M454.5 514v1M454.5 516v3M454.5 520v3M454.5 524v1M454.5 529v4M454.5 534v4M455.5 503v1M455.5 506v2M455.5 515v1M455.5 519v1M455.5 523v1M455.5 527v1M455.5 529v3M455.5 535v1M455.5 537v1M455.5 539v3M455.5 549v3M456.5 538v2M456.5 541v2M456.5 549v4M457.5 538v3M457.5 551v1M458.5 536v1M458.5 539v2M458.5 543v1M459.5 476v1M459.5 492v1M459.5 494v2M459.5 498v1M459.5 536v2M459.5 551v2M460.5 477v5M460.5 499v2M460.5 511v2M460.5 532v1M461.5 477v1M461.5 482v8M461.5 491v1M461.5 501v1M461.5 503v2M461.5 509v4M461.5 553v1M462.5 503v6M462.5 510v1M462.5 512v1M462.5 518v2M462.5 521v1M462.5 525v2M462.5 529v2M462.5 532v6M462.5 552v1M463.5 509v1M463.5 515v1M463.5 517v1M463.5 525v1M463.5 527v3M463.5 531v1M463.5 538v3M463.5 542v2M463.5 545v2M463.5 552v1M464.5 538v1M464.5 543v2M464.5 549v2M464.5 552v1M465.5 492v1M465.5 499v1M465.5 547v2M465.5 551v1M466.5 477v3M466.5 481v1M466.5 500v2M466.5 532v1M466.5 553v1M467.5 482v3M467.5 488v1M467.5 491v1M467.5 507v2M467.5 512v1M467.5 535v2M467.5 553v1M468.5 491v1M468.5 502v2M468.5 506v1M468.5 508v4M468.5 513v1M468.5 517v1M468.5 519v2M468.5 527v2M468.5 532v5M468.5 553v1M469.5 503v2M469.5 507v2M469.5 510v1M469.5 515v3M469.5 523v1M469.5 529v3M469.5 534v1M469.5 538v1M469.5 542v2M469.5 547v1M470.5 538v1M470.5 541v2M470.5 544v3M470.5 548v1M470.5 552v1M471.5 538v1M471.5 542v1M471.5 548v1M471.5 551v1M472.5 537v2M472.5 542v1M473.5 475v2M473.5 493v1M473.5 498v1M473.5 547v1M473.5 550v1M473.5 552v1M474.5 477v1M474.5 479v2M474.5 499v3M474.5 513v1M474.5 553v1M475.5 484v3M475.5 489v3M475.5 505v2M475.5 533v1M475.5 535v1M475.5 554v1M476.5 484v1M476.5 489v1M476.5 502v1M476.5 505v1M476.5 507v3M476.5 511v1M476.5 517v2M476.5 532v5M476.5 553v1M477.5 520v1M477.5 524v5M477.5 530v2M477.5 538v4M477.5 543v2M477.5 546v3M477.5 551v3M478.5 536v1M478.5 538v5M478.5 544v6M478.5 551v3M479.5 499v2M479.5 532v5M479.5 547v7M480.5 479v1M480.5 500v1M480.5 511v2M480.5 514v1M480.5 523v2M480.5 526v1M480.5 529v7M480.5 554v1M481.5 483v1M481.5 486v1M481.5 502v1M481.5 505v1M481.5 507v2M481.5 511v1M481.5 518v1M481.5 521v2M481.5 524v2M481.5 530v1M481.5 532v4M481.5 554v1M482.5 503v2M482.5 510v2M482.5 513v16M482.5 530v3M482.5 535v3M482.5 542v2M482.5 546v1M482.5 548v2M482.5 553v1M483.5 536v3M483.5 540v1M483.5 544v5M483.5 551v2M484.5 492v1M484.5 499v1M484.5 501v1M484.5 525v2M484.5 535v1M484.5 547v1M484.5 549v2M485.5 480v1M485.5 500v1M485.5 511v10M485.5 522v7M485.5 531v4M486.5 476v1M486.5 482v1M486.5 499v1M486.5 505v1M486.5 508v2M486.5 511v2M486.5 514v1M486.5 519v2M486.5 528v1M486.5 530v3M486.5 534v1M486.5 554v2M487.5 477v1M487.5 481v1M487.5 500v4M487.5 505v3M487.5 509v8M487.5 522v2M487.5 525v2M487.5 528v7M488.5 485v2M488.5 505v2M488.5 508v4M488.5 514v2M488.5 517v1M488.5 519v6M488.5 527v3M488.5 532v1M488.5 534v2M489.5 499v1M489.5 501v4M489.5 508v1M489.5 510v3M489.5 514v2M489.5 517v1M489.5 522v1M489.5 525v1M489.5 528v3M489.5 532v1M489.5 535v1M489.5 548v4M489.5 553v2M490.5 479v2M490.5 501v1M490.5 511v4M490.5 516v2M490.5 520v11M490.5 533v2M490.5 554v1M491.5 482v1M491.5 486v1M491.5 489v1M491.5 507v1M491.5 511v2M491.5 516v3M491.5 520v1M491.5 523v4M491.5 529v2M491.5 533v5M491.5 544v1M491.5 555v1M492.5 502v1M492.5 504v3M492.5 510v1M492.5 512v5M492.5 527v2M492.5 530v2M492.5 537v1M492.5 544v3M492.5 549v6M493.5 537v4M493.5 542v3M493.5 546v2M494.5 537v4M494.5 542v3M494.5 547v1M495.5 492v1M495.5 500v1M495.5 522v5M495.5 532v4M495.5 547v1M496.5 517v5M496.5 535v1M496.5 550v4M497.5 505v1M497.5 507v2M497.5 510v4M497.5 515v4M497.5 528v4M497.5 535v1M497.5 550v4M498.5 502v3M498.5 506v1M498.5 509v1M498.5 516v1M498.5 528v2M498.5 531v1M498.5 536v1M498.5 538v1M498.5 542v1M498.5 544v6M499.5 536v2M499.5 542v1M499.5 544v5M500.5 537v2M500.5 541v4M500.5 546v2M501.5 501v1M501.5 524v3M501.5 535v3M501.5 547v2M502.5 518v2M502.5 521v1M502.5 535v1M503.5 503v1M503.5 505v4M503.5 510v1M503.5 513v2M503.5 527v1M503.5 529v1M503.5 531v1M503.5 535v1M503.5 549v1M504.5 536v2M504.5 541v1M504.5 544v1M504.5 547v3M505.5 537v1M505.5 539v2M505.5 544v3M506.5 537v5M506.5 543v1M506.5 545v2M506.5 548v1M507.5 537v1M507.5 539v1M507.5 541v5M507.5 548v2M508.5 522v1M508.5 526v1M508.5 533v1M508.5 535v2M508.5 546v1M509.5 517v1M509.5 520v1M509.5 550v1M510.5 502v1M510.5 504v4M510.5 509v1M510.5 511v1M510.5 513v3M510.5 535v1M510.5 546v1M511.5 536v4M511.5 544v2M511.5 547v3M512.5 537v3M512.5 543v2M512.5 546v3M513.5 500v1M513.5 535v2M513.5 547v2M514.5 517v1M514.5 520v2M514.5 535v1M514.5 550v1M515.5 535v1M516.5 536v4M516.5 542v1M516.5 544v2M516.5 549v1M517.5 538v4M517.5 543v1M517.5 545v2M518.5 537v5M518.5 543v4M519.5 535v1M519.5 547v2M520.5 535v1M521.5 509v1M521.5 535v2M522.5 535v2M522.5 539v2M522.5 544v4M522.5 549v1M523.5 536v4M523.5 544v5M524.5 536v1M524.5 538v3M524.5 542v6M525.5 500v1M525.5 535v1M525.5 537v1M525.5 547v2M526.5 517v1M526.5 535v2M527.5 503v1M527.5 509v1M527.5 528v1M527.5 531v1M527.5 535v2M528.5 536v2M528.5 539v2M528.5 545v2M528.5 549v1M529.5 538v3M529.5 542v2M529.5 547v2M530.5 538v5M530.5 544v1M530.5 546v1M530.5 548v1M531.5 538v6M531.5 547v2M532.5 536v1M532.5 538v4M532.5 546v1M532.5 548v1M533.5 547v2M534.5 535v1M535.5 537v1M535.5 545v2M536.5 536v3M536.5 541v1M536.5 544v4M536.5 549v1M537.5 537v5M537.5 543v1M537.5 545v3M537.5 549v1M538.5 535v1M538.5 544v2M538.5 547v3M539.5 535v1M539.5 549v1M540.5 506v1M540.5 535v1M540.5 537v1M541.5 539v4M541.5 544v5M542.5 538v1M542.5 540v3M542.5 544v5M543.5 536v3M543.5 547v2M544.5 535v1M545.5 535v2M545.5 538v1M545.5 548v2M546.5 537v2M546.5 541v1M546.5 544v5M547.5 537v1M547.5 540v2M547.5 543v6M548.5 535v2M548.5 543v1M548.5 547v3M549.5 535v1M549.5 550v1M550.5 535v4M550.5 546v2M550.5 549v1M551.5 543v5M551.5 549v1M552.5 539v5M552.5 546v4M553.5 536v5M553.5 543v2M554.5 535v2M555.5 538v1M555.5 549v1M556.5 536v1M556.5 538v1M556.5 541v1M556.5 544v2M556.5 547v1M557.5 538v1M557.5 543v2M557.5 546v2M558.5 537v2M558.5 547v1M559.5 535v1M560.5 536v1M561.5 537v1M561.5 539v1M561.5 543v6M562.5 537v5M562.5 544v1M562.5 547v2M563.5 539v2M563.5 542v4M563.5 548v1M564.5 537v2M564.5 540v1M564.5 542v4" stroke="#00008c" stroke-width="1" fill="none"/>
<path d="M115.5 457v5M115.5 466v1M115.5 469v3M115.5 477v4M115.5 483v3M115.5 487v5M115.5 505v2M115.5 508v1M115.5 511v8M115.5 527v4M115.5 537v1M115.5 548v1M116.5 455v2M116.5 462v3M116.5 467v2M116.5 470v2M116.5 482v4M116.5 487v1M116.5 489v3M116.5 495v2M116.5 498v1M116.5 502v1M116.5 504v3M116.5 511v6M116.5 523v2M116.5 527v5M116.5 537v1M116.5 549v1M117.5 452v1M117.5 462v1M117.5 474v1M117.5 476v1M117.5 499v3M117.5 522v2M117.5 526v1M117.5 532v1M117.5 534v1M117.5 536v1M117.5 544v1M118.5 465v1M118.5 467v1M118.5 472v2M118.5 475v4M118.5 480v2M118.5 492v1M118.5 500v2M118.5 503v1M118.5 507v1M118.5 509v1M118.5 512v2M118.5 517v1M118.5 520v2M118.5 524v1M118.5 526v1M118.5 528v1M118.5 530v1M118.5 532v1M118.5 534v2M118.5 540v1M118.5 547v2M119.5 466v1M119.5 471v2M119.5 476v2M119.5 480v1M119.5 483v1M119.5 486v1M119.5 489v1M119.5 494v1M119.5 497v1M119.5 500v1M119.5 502v1M119.5 506v1M119.5 509v1M119.5 513v1M119.5 515v1M119.5 518v2M119.5 521v1M119.5 523v2M119.5 526v1M119.5 529v2M119.5 533v1M119.5 535v1M119.5 540v1M119.5 542v2M119.5 547v2M120.5 466v2M120.5 470v7M120.5 479v4M120.5 485v6M120.5 492v2M120.5 502v3M120.5 506v2M120.5 509v1M120.5 511v3M120.5 517v2M120.5 523v5M120.5 530v4M120.5 538v5M121.5 451v1M121.5 458v4M121.5 466v1M121.5 468v1M121.5 471v1M121.5 477v3M121.5 482v4M121.5 487v5M121.5 495v5M121.5 501v1M121.5 503v3M121.5 508v1M121.5 514v3M121.5 527v5M121.5 535v2M122.5 452v2M122.5 459v2M122.5 462v1M122.5 469v3M122.5 483v1M122.5 485v1M122.5 487v1M122.5 497v1M122.5 501v3M122.5 505v2M122.5 508v1M122.5 516v1M122.5 523v1M122.5 527v3M122.5 535v2M122.5 544v1M123.5 465v1M123.5 473v1M123.5 493v2M123.5 499v2M123.5 509v2M123.5 517v1M123.5 522v5M123.5 532v3M123.5 537v1M123.5 544v1M123.5 547v1M123.5 549v1M124.5 451v1M124.5 457v2M124.5 468v1M124.5 490v1M124.5 495v4M124.5 504v1M124.5 509v1M124.5 515v3M124.5 519v1M124.5 521v1M124.5 526v1M124.5 534v2M124.5 545v2M124.5 548v1M125.5 456v1M125.5 463v1M125.5 467v1M125.5 469v1M125.5 471v2M125.5 485v1M125.5 487v1M125.5 489v2M125.5 492v1M125.5 494v3M125.5 502v2M125.5 505v5M125.5 511v5M125.5 517v2M125.5 523v1M125.5 529v1M125.5 533v2M125.5 545v2M126.5 455v1M126.5 464v1M126.5 472v1M126.5 475v1M126.5 494v1M126.5 500v2M126.5 503v2M126.5 515v1M126.5 518v1M126.5 522v2M126.5 526v1M126.5 532v1M126.5 536v2M126.5 542v1M126.5 549v1M127.5 465v1M127.5 472v1M127.5 475v3M127.5 487v1M127.5 489v1M127.5 492v3M127.5 500v1M127.5 506v1M127.5 509v1M127.5 512v1M127.5 518v2M127.5 522v1M127.5 524v3M127.5 532v3M127.5 538v1M127.5 544v1M128.5 465v2M128.5 468v1M128.5 470v1M128.5 472v4M128.5 478v3M128.5 484v1M128.5 486v3M128.5 490v2M128.5 493v1M128.5 500v2M128.5 505v2M128.5 508v1M128.5 510v6M128.5 518v1M128.5 520v7M128.5 528v1M128.5 531v3M128.5 538v1M128.5 542v1M128.5 547v2M129.5 460v1M129.5 465v1M129.5 468v4M129.5 477v1M129.5 479v2M129.5 482v1M129.5 484v2M129.5 487v2M129.5 495v4M129.5 503v2M129.5 507v5M129.5 513v2M129.5 517v5M129.5 525v1M129.5 527v3M129.5 536v1M129.5 545v1M130.5 462v1M130.5 468v1M130.5 470v2M130.5 482v2M130.5 485v2M130.5 488v1M130.5 490v1M130.5 495v2M130.5 498v2M130.5 502v2M130.5 505v1M130.5 507v4M130.5 512v1M130.5 514v1M130.5 521v6M130.5 528v2M130.5 535v3M130.5 545v1M130.5 547v3M131.5 456v1M131.5 465v1M131.5 472v1M131.5 475v2M131.5 496v1M131.5 498v3M131.5 519v2M131.5 522v2M131.5 525v2M131.5 528v2M131.5 532v3M131.5 537v1M131.5 546v1M132.5 465v2M132.5 468v1M132.5 471v2M132.5 476v3M132.5 485v1M132.5 491v1M132.5 493v2M132.5 502v2M132.5 505v5M132.5 511v5M132.5 519v3M132.5 523v2M132.5 526v5M132.5 538v1M132.5 540v1M132.5 547v2M133.5 466v1M133.5 470v2M133.5 476v1M133.5 479v1M133.5 488v1M133.5 492v2M133.5 501v1M133.5 504v1M133.5 506v1M133.5 508v2M133.5 511v2M133.5 514v3M133.5 518v3M133.5 522v1M133.5 525v1M133.5 527v2M133.5 531v4M133.5 538v1M133.5 543v1M133.5 547v2M134.5 458v1M134.5 460v1M134.5 467v1M134.5 470v1M134.5 480v1M134.5 483v4M134.5 488v1M134.5 490v1M134.5 497v1M134.5 499v1M134.5 502v1M134.5 505v2M134.5 509v2M134.5 512v10M134.5 523v1M134.5 529v2M134.5 535v2M134.5 544v1M134.5 548v1M135.5 452v1M135.5 455v2M135.5 462v1M135.5 467v1M135.5 469v1M135.5 482v10M135.5 495v1M135.5 497v3M135.5 502v15M135.5 526v6M135.5 534v2M135.5 549v1M136.5 456v1M136.5 465v1M136.5 473v1M136.5 478v1M136.5 494v1M136.5 499v3M136.5 519v1M136.5 523v1M136.5 525v2M136.5 533v2M136.5 536v1M136.5 544v1M136.5 546v1M136.5 548v2M137.5 465v2M137.5 472v2M137.5 475v5M137.5 492v3M137.5 501v1M137.5 503v1M137.5 508v2M137.5 520v1M137.5 522v6M137.5 532v3M137.5 540v3M137.5 545v1M137.5 548v1M138.5 466v1M138.5 469v1M138.5 471v2M138.5 474v3M138.5 479v2M138.5 486v1M138.5 491v3M138.5 501v2M138.5 504v1M138.5 506v5M138.5 513v2M138.5 516v5M138.5 523v2M138.5 527v1M138.5 529v3M138.5 533v1M138.5 539v4M139.5 458v1M139.5 465v7M139.5 477v3M139.5 482v1M139.5 486v3M139.5 490v2M139.5 497v2M139.5 500v2M139.5 503v4M139.5 509v2M139.5 514v3M139.5 519v1M139.5 533v2M139.5 536v2M139.5 544v2M140.5 455v1M140.5 465v1M140.5 467v1M140.5 474v1M140.5 479v1M140.5 482v3M140.5 487v5M140.5 493v2M140.5 501v1M140.5 503v1M140.5 509v1M140.5 512v3M140.5 520v1M140.5 522v2M140.5 526v1M140.5 532v5M140.5 549v1M141.5 465v1M141.5 473v1M141.5 493v1M141.5 495v1M141.5 497v2M141.5 501v1M141.5 519v1M141.5 522v5M141.5 532v3M141.5 538v1M141.5 544v1M141.5 547v3M142.5 472v9M142.5 485v1M142.5 492v1M142.5 500v1M142.5 505v2M142.5 510v1M142.5 513v1M142.5 516v1M142.5 518v3M142.5 522v1M142.5 528v1M142.5 530v4M142.5 540v1M142.5 543v1M142.5 549v1M143.5 467v2M143.5 471v6M143.5 478v3M143.5 484v3M143.5 489v1M143.5 492v1M143.5 494v1M143.5 500v1M143.5 502v6M143.5 510v3M143.5 514v2M143.5 520v3M143.5 527v4M143.5 532v1M143.5 538v3M143.5 547v1M144.5 467v4M144.5 472v1M144.5 475v1M144.5 477v1M144.5 479v3M144.5 484v1M144.5 489v1M144.5 491v4M144.5 500v1M144.5 505v1M144.5 510v2M144.5 516v1M144.5 521v2M144.5 527v4M144.5 532v1M144.5 538v1M144.5 541v1M145.5 461v1M145.5 466v1M145.5 468v4M145.5 477v6M145.5 484v8M145.5 496v4M145.5 501v1M145.5 503v2M145.5 507v1M145.5 509v1M145.5 511v1M145.5 513v2M145.5 518v4M145.5 530v1M145.5 534v4M145.5 545v1M146.5 453v1M146.5 462v1M146.5 465v1M146.5 467v3M146.5 471v1M146.5 482v3M146.5 486v6M146.5 494v1M146.5 496v2M146.5 499v1M146.5 504v1M146.5 507v1M146.5 511v1M146.5 514v1M146.5 522v1M146.5 525v2M146.5 532v4M146.5 545v2M147.5 463v1M147.5 465v1M147.5 472v1M147.5 475v2M147.5 497v1M147.5 499v2M147.5 504v1M147.5 507v1M147.5 524v1M147.5 526v4M147.5 534v1M147.5 538v1M147.5 545v4M148.5 474v1M148.5 476v3M148.5 480v1M148.5 487v1M148.5 489v1M148.5 492v2M148.5 501v4M148.5 508v1M148.5 510v4M148.5 515v3M148.5 519v1M148.5 521v2M148.5 526v2M148.5 529v1M148.5 532v1M148.5 540v4M148.5 549v1M149.5 457v1M149.5 461v1M149.5 466v1M149.5 468v4M149.5 478v4M149.5 483v1M149.5 485v1M149.5 487v1M149.5 489v2M149.5 494v3M149.5 503v2M149.5 508v2M149.5 511v1M149.5 513v1M149.5 517v3M149.5 527v5M149.5 533v1M149.5 537v1M149.5 544v1M149.5 546v3M150.5 453v1M150.5 465v2M150.5 469v1M150.5 482v1M150.5 484v7M150.5 497v2M150.5 501v1M150.5 503v3M150.5 509v2M150.5 512v2M150.5 524v1M150.5 527v1M150.5 531v1M150.5 533v2M150.5 544v1M150.5 546v1M150.5 549v1M151.5 463v1M151.5 465v1M151.5 475v2M151.5 494v1M151.5 500v2M151.5 504v1M151.5 517v1M151.5 519v1M151.5 522v1M151.5 524v4M151.5 533v1M151.5 537v1M151.5 547v3M152.5 466v1M152.5 474v3M152.5 480v1M152.5 487v2M152.5 494v1M152.5 501v1M152.5 504v1M152.5 509v2M152.5 512v1M152.5 518v5M152.5 526v3M152.5 530v1M152.5 532v2M152.5 538v1M152.5 541v2M152.5 547v1M153.5 467v12M153.5 483v2M153.5 486v1M153.5 488v1M153.5 501v2M153.5 504v1M153.5 506v8M153.5 519v4M153.5 524v1M153.5 527v5M153.5 534v1M153.5 538v1M153.5 542v2M154.5 451v1M154.5 457v2M154.5 461v1M154.5 467v2M154.5 470v2M154.5 477v1M154.5 481v3M154.5 485v5M154.5 495v1M154.5 503v2M154.5 507v1M154.5 509v3M154.5 513v2M154.5 517v1M154.5 519v3M154.5 527v1M154.5 529v2M155.5 454v3M155.5 461v5M155.5 469v2M155.5 482v1M155.5 484v5M155.5 490v2M155.5 495v5M155.5 502v2M155.5 505v4M155.5 512v1M155.5 516v1M155.5 523v2M155.5 527v1M155.5 531v1M155.5 535v2M155.5 546v1M155.5 549v1M156.5 466v1M156.5 472v1M156.5 474v8M156.5 492v2M156.5 509v2M156.5 516v2M156.5 519v1M156.5 522v1M156.5 525v2M156.5 531v1M156.5 538v1M156.5 545v1M156.5 548v2M157.5 466v1M157.5 469v1M157.5 472v2M157.5 475v2M157.5 478v1M157.5 481v1M157.5 492v3M157.5 501v1M157.5 505v1M157.5 507v2M157.5 511v5M157.5 517v1M157.5 520v4M157.5 525v2M157.5 529v1M157.5 532v3M157.5 536v1M157.5 540v1M158.5 451v1M158.5 457v2M158.5 461v1M158.5 466v4M158.5 471v1M158.5 479v4M158.5 484v3M158.5 488v2M158.5 491v1M158.5 496v4M158.5 502v1M158.5 504v1M158.5 507v1M158.5 509v2M158.5 515v2M158.5 518v4M158.5 527v2M158.5 531v1M158.5 537v1M159.5 452v4M159.5 458v1M159.5 460v1M159.5 462v1M159.5 468v1M159.5 470v1M159.5 482v1M159.5 487v1M159.5 492v1M159.5 496v4M159.5 502v3M159.5 507v3M159.5 511v2M159.5 516v1M159.5 527v1M159.5 529v3M159.5 535v2M159.5 544v1M159.5 546v1M159.5 548v1M160.5 465v1M160.5 472v3M160.5 476v2M160.5 492v1M160.5 494v1M160.5 501v1M160.5 513v2M160.5 519v2M160.5 522v3M160.5 526v1M160.5 532v4M160.5 537v1M160.5 541v1M160.5 543v1M160.5 546v1M161.5 466v1M161.5 472v4M161.5 477v1M161.5 480v1M161.5 485v2M161.5 490v1M161.5 493v1M161.5 501v1M161.5 505v3M161.5 510v1M161.5 512v1M161.5 515v1M161.5 525v1M161.5 532v1M161.5 538v1M161.5 540v1M161.5 542v2M161.5 547v2M162.5 466v1M162.5 469v2M162.5 475v2M162.5 481v1M162.5 483v1M162.5 485v7M162.5 502v3M162.5 507v2M162.5 510v1M162.5 512v1M162.5 514v2M162.5 523v1M162.5 525v1M162.5 527v1M162.5 529v2M162.5 540v1M162.5 542v2M163.5 451v1M163.5 457v1M163.5 461v1M163.5 468v1M163.5 470v2M163.5 477v5M163.5 485v5M163.5 496v3M163.5 502v1M163.5 506v1M163.5 508v6M163.5 515v1M163.5 520v1M163.5 527v2M163.5 530v1M163.5 547v2M164.5 461v2M164.5 464v1M164.5 467v4M164.5 482v1M164.5 485v3M164.5 489v1M164.5 494v3M164.5 502v1M164.5 505v2M164.5 508v1M164.5 511v6M164.5 523v1M164.5 527v2M164.5 532v1M164.5 534v2M164.5 537v1M164.5 549v1M165.5 472v2M165.5 475v2M165.5 489v1M165.5 492v2M165.5 499v3M165.5 504v1M165.5 510v1M165.5 515v5M165.5 522v2M165.5 525v1M165.5 532v3M165.5 538v1M165.5 540v1M165.5 545v5M166.5 469v1M166.5 472v7M166.5 480v2M166.5 492v1M166.5 501v1M166.5 503v2M166.5 506v5M166.5 512v1M166.5 515v2M166.5 521v2M166.5 527v1M166.5 538v5M166.5 547v2M167.5 468v2M167.5 472v1M167.5 475v1M167.5 480v1M167.5 483v1M167.5 485v4M167.5 491v1M167.5 493v1M167.5 500v1M167.5 502v7M167.5 510v1M167.5 513v4M167.5 520v4M167.5 528v1M167.5 531v1M167.5 539v2M167.5 542v1M168.5 458v2M168.5 461v1M168.5 467v3M168.5 471v1M168.5 479v5M168.5 485v2M168.5 489v2M168.5 495v5M168.5 503v4M168.5 509v1M168.5 513v2M168.5 529v1M168.5 537v1M169.5 452v1M169.5 456v1M169.5 459v2M169.5 462v4M169.5 467v4M169.5 482v1M169.5 484v2M169.5 487v3M169.5 493v6M169.5 502v2M169.5 505v2M169.5 510v1M169.5 515v1M169.5 528v3M169.5 537v1M169.5 545v1M169.5 549v1M170.5 472v1M170.5 474v3M170.5 497v1M170.5 501v1M170.5 517v1M170.5 519v2M170.5 522v3M170.5 531v1M170.5 533v4M170.5 538v1M170.5 544v3M170.5 549v1M171.5 472v1M171.5 475v6M171.5 493v2M171.5 500v4M171.5 508v1M171.5 511v2M171.5 516v2M171.5 519v2M171.5 523v2M171.5 526v1M171.5 532v1M171.5 534v1M171.5 538v1M171.5 543v1M171.5 548v2M172.5 469v2M172.5 473v1M172.5 475v2M172.5 478v2M172.5 483v2M172.5 487v4M172.5 492v2M172.5 500v1M172.5 502v2M172.5 506v2M172.5 510v3M172.5 515v1M172.5 518v3M172.5 524v1M172.5 526v2M172.5 529v3M172.5 538v1M172.5 540v1M172.5 542v2M173.5 467v2M173.5 470v1M173.5 472v3M173.5 479v6M173.5 487v2M173.5 491v1M173.5 493v1M173.5 500v3M173.5 509v1M173.5 513v3M173.5 531v1M173.5 541v1M173.5 543v1M174.5 451v1M174.5 457v3M174.5 461v1M174.5 468v4M174.5 477v2M174.5 480v1M174.5 483v9M174.5 496v1M174.5 498v1M174.5 502v5M174.5 513v5M174.5 520v1M174.5 529v3M174.5 537v1M174.5 546v1M175.5 452v1M175.5 455v2M175.5 466v2M175.5 470v2M175.5 482v7M175.5 491v1M175.5 495v6M175.5 502v2M175.5 505v1M175.5 508v1M175.5 513v1M175.5 522v5M175.5 531v3M175.5 535v1M175.5 546v2M175.5 549v1M176.5 466v1M176.5 478v1M176.5 492v1M176.5 494v1M176.5 498v1M176.5 500v1M176.5 515v1M176.5 517v1M176.5 519v1M176.5 521v1M176.5 523v2M176.5 526v1M176.5 532v2M176.5 546v4M177.5 472v1M177.5 476v1M177.5 478v4M177.5 488v1M177.5 492v2M177.5 500v2M177.5 503v2M177.5 508v1M177.5 511v1M177.5 513v2M177.5 516v4M177.5 521v1M177.5 532v1M178.5 470v1M178.5 472v2M178.5 475v4M178.5 480v2M178.5 487v1M178.5 493v1M178.5 499v3M178.5 505v2M178.5 509v2M178.5 512v3M178.5 517v3M178.5 528v5M178.5 548v1M179.5 451v1M179.5 458v1M179.5 461v1M179.5 467v1M179.5 469v1M179.5 471v1M179.5 479v4M179.5 484v2M179.5 489v3M179.5 495v2M179.5 498v1M179.5 505v2M179.5 518v1M179.5 527v1M179.5 529v2M179.5 537v1M179.5 544v1M180.5 452v5M180.5 462v3M180.5 468v1M180.5 470v1M180.5 482v5M180.5 490v2M180.5 495v1M180.5 498v2M180.5 501v1M180.5 504v3M180.5 510v1M180.5 527v2M180.5 530v1M180.5 533v1M180.5 535v1M180.5 537v1M180.5 549v1M181.5 466v1M181.5 474v1M181.5 492v1M181.5 494v1M181.5 500v1M181.5 516v1M181.5 519v1M181.5 523v3M181.5 533v5M181.5 547v3M182.5 472v2M182.5 475v2M182.5 481v1M182.5 483v2M182.5 486v1M182.5 493v1M182.5 501v1M182.5 503v1M182.5 505v1M182.5 507v1M182.5 511v1M182.5 515v1M182.5 517v2M182.5 521v1M182.5 524v1M182.5 528v4M182.5 539v1M182.5 541v1M183.5 468v1M183.5 472v1M183.5 474v7M183.5 484v1M183.5 492v2M183.5 501v2M183.5 504v1M183.5 506v2M183.5 510v6M183.5 519v1M183.5 523v3M183.5 528v4M183.5 538v1M183.5 540v1M183.5 542v1M183.5 548v1M184.5 451v1M184.5 458v1M184.5 460v2M184.5 471v1M184.5 478v4M184.5 483v2M184.5 487v1M184.5 502v1M184.5 505v5M184.5 512v5M184.5 519v2M184.5 528v1M184.5 530v2M185.5 455v3M185.5 461v1M185.5 468v2M185.5 471v1M185.5 475v1M185.5 481v1M185.5 483v3M185.5 489v3M185.5 493v6M185.5 500v2M185.5 504v1M185.5 507v1M185.5 522v1M185.5 528v1M185.5 534v2M185.5 544v3M186.5 473v2M186.5 476v1M186.5 479v1M186.5 498v1M186.5 505v1M186.5 517v4M186.5 522v5M186.5 533v2M186.5 536v2M186.5 547v3M187.5 471v3M187.5 475v2M187.5 478v2M187.5 486v1M187.5 501v1M187.5 505v1M187.5 507v1M187.5 510v1M187.5 517v4M187.5 522v1M187.5 524v2M187.5 527v2M187.5 532v3M187.5 538v4M187.5 547v2M188.5 458v2M188.5 467v3M188.5 471v1M188.5 477v1M188.5 479v1M188.5 482v2M188.5 486v1M188.5 489v3M188.5 497v1M188.5 499v2M188.5 502v3M188.5 507v1M188.5 511v2M188.5 519v1M188.5 530v1M188.5 537v1M188.5 544v1M189.5 452v3M189.5 457v2M189.5 462v1M189.5 464v2M189.5 468v1M189.5 471v1M189.5 482v3M189.5 486v3M189.5 490v2M189.5 494v6M189.5 505v1M189.5 507v4M189.5 514v3M189.5 526v1M189.5 528v1M189.5 535v2M189.5 544v1M189.5 547v1M189.5 549v1M190.5 464v1M190.5 466v1M190.5 475v2M190.5 492v1M190.5 500v2M190.5 521v1M190.5 523v2M190.5 533v1M190.5 537v1M190.5 546v3M191.5 475v1M191.5 479v2M191.5 493v1M191.5 502v2M191.5 509v1M191.5 519v6M191.5 533v2M191.5 537v2M191.5 541v2M192.5 467v3M192.5 472v1M192.5 481v2M192.5 486v2M192.5 491v2M192.5 502v2M192.5 505v5M192.5 511v2M192.5 516v2M192.5 521v1M192.5 527v1M192.5 529v3M192.5 534v1M192.5 538v3M192.5 542v2M193.5 459v3M193.5 467v4M193.5 482v4M193.5 488v1M193.5 491v1M193.5 506v1M193.5 513v2M193.5 522v2M193.5 531v1M193.5 533v1M193.5 536v1M193.5 545v2M194.5 452v1M194.5 463v1M194.5 466v1M194.5 470v1M194.5 483v5M194.5 494v1M194.5 496v5M194.5 513v1M194.5 522v1M194.5 524v1M194.5 533v2M194.5 545v1M194.5 547v3M195.5 466v1M195.5 473v1M195.5 476v1M195.5 492v1M195.5 501v1M195.5 521v1M195.5 524v3M195.5 532v1M195.5 537v1M195.5 545v1M195.5 549v1M196.5 475v5M196.5 482v1M196.5 492v2M196.5 500v1M196.5 503v2M196.5 506v1M196.5 509v2M196.5 513v1M196.5 516v4M196.5 525v2M196.5 532v1M196.5 538v1M196.5 543v1M196.5 547v1M196.5 549v1M197.5 468v1M197.5 471v2M197.5 475v10M197.5 486v1M197.5 489v3M197.5 493v1M197.5 502v1M197.5 505v3M197.5 512v1M197.5 515v2M197.5 521v2M197.5 527v2M197.5 530v1M197.5 539v4M198.5 451v1M198.5 459v3M198.5 469v1M198.5 471v1M198.5 477v7M198.5 485v5M198.5 495v2M198.5 498v1M198.5 505v1M198.5 508v3M198.5 515v3M198.5 521v1M198.5 527v1M198.5 535v1M198.5 547v1M199.5 454v3M199.5 462v4M199.5 468v4M199.5 476v1M199.5 482v1M199.5 484v4M199.5 490v2M199.5 494v1M199.5 497v2M199.5 502v1M199.5 504v5M199.5 510v1M199.5 512v1M199.5 518v1M199.5 523v1M199.5 531v5M199.5 537v1M199.5 544v3M199.5 548v1M200.5 466v1M200.5 474v2M200.5 478v1M200.5 500v2M200.5 517v1M200.5 522v4M200.5 533v2M201.5 472v1M201.5 474v2M201.5 477v2M201.5 493v2M201.5 500v1M201.5 502v1M201.5 507v1M201.5 517v8M201.5 526v1M201.5 532v1M201.5 539v2M201.5 542v2M201.5 547v3M202.5 468v1M202.5 470v1M202.5 472v3M202.5 477v4M202.5 483v4M202.5 489v2M202.5 500v1M202.5 503v1M202.5 506v1M202.5 509v3M202.5 514v3M202.5 519v2M202.5 528v3M202.5 532v1M202.5 538v1M202.5 540v3M203.5 467v5M203.5 473v2M203.5 477v2M203.5 480v1M203.5 482v1M203.5 484v1M203.5 487v4M203.5 495v1M203.5 497v3M203.5 501v1M203.5 504v1M203.5 514v2M203.5 523v1M203.5 526v1M203.5 531v2M203.5 536v1M203.5 544v3M204.5 468v1M204.5 470v1M204.5 475v1M204.5 482v2M204.5 485v3M204.5 489v2M204.5 495v2M204.5 498v1M204.5 501v1M204.5 503v1M204.5 518v2M204.5 523v5M204.5 532v6M205.5 473v1M205.5 475v1M205.5 492v1M205.5 494v1M205.5 500v2M205.5 503v2M205.5 506v1M205.5 509v2M205.5 515v1M205.5 517v1M205.5 519v1M205.5 521v4M205.5 527v2M205.5 533v1M205.5 537v2M205.5 544v1M205.5 546v3M206.5 467v2M206.5 472v2M206.5 475v4M206.5 482v2M206.5 485v1M206.5 489v2M206.5 492v3M206.5 501v1M206.5 503v8M206.5 513v3M206.5 518v1M206.5 521v1M206.5 524v1M206.5 528v3M206.5 532v1M206.5 538v2M206.5 541v2M206.5 548v1M207.5 467v1M207.5 470v5M207.5 476v2M207.5 479v2M207.5 483v1M207.5 485v5M207.5 492v2M207.5 501v3M207.5 505v2M207.5 508v2M207.5 511v3M207.5 518v1M207.5 525v2M207.5 528v1M207.5 539v5M208.5 468v3M208.5 472v3M208.5 478v1M208.5 483v3M208.5 489v3M208.5 500v1M208.5 503v1M208.5 505v4M208.5 512v1M208.5 529v3M208.5 540v4M209.5 457v1M209.5 460v2M209.5 477v2M209.5 483v2M209.5 489v1M209.5 491v1M209.5 493v2M209.5 497v1M209.5 508v1M209.5 544v3M210.5 452v2M210.5 455v2M210.5 463v2M210.5 466v1M210.5 474v3M210.5 485v1M210.5 497v2M210.5 510v1M210.5 520v4M210.5 525v2M210.5 530v1M210.5 545v1M210.5 549v1M211.5 464v1M211.5 472v2M211.5 475v2M211.5 492v2M211.5 499v1M211.5 501v1M211.5 517v1M211.5 519v1M211.5 525v2M211.5 532v5M211.5 538v2M211.5 544v1M211.5 546v1M211.5 549v1M212.5 472v1M212.5 475v2M212.5 479v1M212.5 492v2M212.5 500v3M212.5 508v1M212.5 518v5M212.5 524v2M212.5 532v2M212.5 538v1M212.5 540v2M212.5 543v1M212.5 547v3M213.5 457v2M213.5 467v1M213.5 469v1M213.5 471v1M213.5 478v1M213.5 480v1M213.5 483v2M213.5 489v2M213.5 495v1M213.5 497v3M213.5 502v1M213.5 504v5M213.5 510v1M213.5 512v1M213.5 514v1M213.5 519v3M213.5 527v1M213.5 529v3M213.5 534v1M213.5 537v1M213.5 546v1M214.5 456v1M214.5 462v2M214.5 465v1M214.5 468v3M214.5 485v4M214.5 490v2M214.5 499v1M214.5 505v1M214.5 508v3M214.5 512v1M214.5 529v2M214.5 534v1M214.5 546v2M214.5 549v1M215.5 467v1M215.5 472v1M215.5 474v3M215.5 478v1M215.5 492v2M215.5 501v1M215.5 519v1M215.5 523v3M215.5 532v2M215.5 535v2M215.5 538v1M215.5 543v1M215.5 545v1M215.5 547v3M216.5 468v1M216.5 472v1M216.5 474v4M216.5 481v1M216.5 484v1M216.5 502v1M216.5 505v1M216.5 509v2M216.5 515v5M216.5 527v2M216.5 531v1M216.5 539v4M217.5 468v1M217.5 471v1M217.5 473v2M217.5 476v1M217.5 479v9M217.5 489v4M217.5 502v2M217.5 505v1M217.5 507v1M217.5 511v1M217.5 513v5M217.5 524v5M217.5 531v1M217.5 533v1M217.5 538v5M218.5 458v3M218.5 477v1M218.5 479v5M218.5 485v1M218.5 487v2M218.5 490v1M218.5 495v3M218.5 499v1M218.5 507v2M218.5 511v1M218.5 513v1M218.5 519v1M218.5 531v1M218.5 535v1M218.5 545v1M219.5 455v1M219.5 463v1M219.5 468v3M219.5 473v1M219.5 482v1M219.5 485v2M219.5 491v1M219.5 494v3M219.5 501v1M219.5 504v2M219.5 509v1M219.5 517v1M219.5 522v2M219.5 525v2M219.5 536v2M219.5 547v3M220.5 472v1M220.5 476v3M220.5 500v1M220.5 508v1M220.5 511v3M220.5 517v3M220.5 524v1M220.5 530v1M220.5 532v3M220.5 537v2M220.5 544v1M220.5 546v2M221.5 467v1M221.5 472v3M221.5 478v4M221.5 490v1M221.5 492v1M221.5 494v1M221.5 500v1M221.5 502v3M221.5 508v3M221.5 514v1M221.5 518v7M221.5 527v2M221.5 530v2M221.5 539v2M221.5 547v1M221.5 549v1M222.5 469v5M222.5 477v1M222.5 482v1M222.5 485v2M222.5 488v4M222.5 505v2M222.5 511v2M222.5 517v1M222.5 520v1M222.5 529v2M222.5 540v4M223.5 468v1M223.5 470v3M223.5 474v1M223.5 477v5M223.5 483v11M223.5 507v3M223.5 517v1M223.5 520v2M223.5 523v9M223.5 540v1M223.5 543v1M224.5 486v2M224.5 493v4M224.5 501v1M224.5 522v1M224.5 526v1M224.5 532v2M224.5 536v2M224.5 545v1M225.5 473v2M225.5 476v1M225.5 483v2M225.5 486v1M225.5 493v2M225.5 499v1M225.5 501v1M225.5 505v1M225.5 517v2M225.5 523v1M225.5 533v1M225.5 537v1M225.5 545v2M225.5 549v1M226.5 467v1M226.5 473v4M226.5 488v1M226.5 492v3M226.5 500v2M226.5 510v2M226.5 514v1M226.5 517v3M226.5 522v2M226.5 525v2M226.5 532v2M226.5 535v1M226.5 544v1M227.5 467v1M227.5 472v2M227.5 475v1M227.5 477v5M227.5 485v1M227.5 503v5M227.5 510v2M227.5 513v4M227.5 518v1M227.5 520v1M227.5 525v1M227.5 529v2M227.5 541v3M228.5 467v6M228.5 474v9M228.5 486v2M228.5 489v1M228.5 491v1M228.5 502v1M228.5 504v3M228.5 509v4M228.5 521v1M228.5 524v2M228.5 527v4M228.5 534v1M228.5 538v6M229.5 451v1M229.5 457v1M229.5 460v2M229.5 471v1M229.5 481v5M229.5 487v5M229.5 498v1M229.5 503v1M229.5 505v2M229.5 509v1M229.5 515v1M230.5 452v1M230.5 454v3M230.5 463v2M230.5 466v1M230.5 483v5M230.5 489v3M230.5 494v4M230.5 500v1M230.5 505v1M230.5 509v1M230.5 515v2M230.5 532v1M230.5 535v2M230.5 546v1M231.5 467v1M231.5 472v5M231.5 492v2M231.5 505v1M231.5 507v1M231.5 517v5M231.5 525v2M231.5 528v1M231.5 541v1M231.5 545v4M232.5 467v1M232.5 473v4M232.5 478v1M232.5 492v1M232.5 502v1M232.5 513v1M232.5 519v1M232.5 522v1M232.5 525v3M232.5 533v1M232.5 539v4M232.5 547v3M233.5 468v3M233.5 480v3M233.5 485v1M233.5 490v2M233.5 501v2M233.5 505v3M233.5 509v3M233.5 513v5M233.5 527v1M233.5 529v3M233.5 539v3M234.5 469v1M234.5 472v1M234.5 474v1M234.5 479v2M234.5 483v2M234.5 487v2M234.5 490v1M234.5 502v1M234.5 510v1M234.5 515v2M234.5 524v1M234.5 540v2M234.5 543v1M235.5 451v1M235.5 459v1M235.5 461v1M235.5 477v4M235.5 482v3M235.5 487v1M235.5 489v2M235.5 497v1M235.5 508v1M235.5 512v1M235.5 519v1M235.5 529v2M235.5 536v1M235.5 545v1M236.5 452v4M236.5 459v2M236.5 462v1M236.5 464v3M236.5 470v1M236.5 482v5M236.5 488v3M236.5 494v5M236.5 507v1M236.5 510v1M236.5 516v1M236.5 523v1M236.5 534v2M237.5 466v2M237.5 472v1M237.5 476v1M237.5 492v1M237.5 501v1M237.5 523v2M237.5 533v2M237.5 536v2M238.5 468v1M238.5 475v2M238.5 483v1M238.5 491v1M238.5 507v1M238.5 511v1M238.5 518v2M238.5 521v1M238.5 523v1M238.5 527v1M238.5 530v2M238.5 534v1M238.5 538v1M238.5 541v3M238.5 548v2M239.5 469v3M239.5 482v1M239.5 484v1M239.5 486v6M239.5 504v2M239.5 511v1M239.5 513v2M239.5 521v1M239.5 529v3M239.5 541v1M240.5 461v1M240.5 469v3M240.5 479v1M240.5 481v2M240.5 487v2M240.5 490v2M240.5 495v2M240.5 499v1M240.5 502v1M240.5 505v1M240.5 529v1M240.5 531v1M240.5 535v3M240.5 544v1M240.5 546v1M241.5 452v1M241.5 470v1M241.5 474v1M241.5 497v1M241.5 499v3M241.5 519v1M241.5 521v2M241.5 525v2M241.5 532v1M241.5 534v3M241.5 546v1M241.5 549v1M242.5 468v1M242.5 474v2M242.5 481v1M242.5 492v2M242.5 500v2M242.5 509v1M242.5 517v2M242.5 520v1M242.5 522v1M242.5 532v1M242.5 537v1M242.5 544v2M242.5 547v1M243.5 468v1M243.5 470v2M243.5 479v2M243.5 482v1M243.5 487v3M243.5 491v1M243.5 493v1M243.5 503v10M243.5 514v1M243.5 516v1M243.5 518v1M243.5 527v1M243.5 529v3M243.5 543v1M244.5 468v2M244.5 471v1M244.5 475v2M244.5 478v3M244.5 486v1M244.5 488v1M244.5 490v2M244.5 493v2M244.5 503v3M244.5 508v2M244.5 511v1M244.5 515v2M244.5 518v1M244.5 523v2M244.5 527v1M244.5 529v3M244.5 538v4M244.5 543v1M245.5 451v1M245.5 457v4M245.5 469v1M245.5 471v1M245.5 478v1M245.5 483v5M245.5 489v1M245.5 491v1M245.5 495v1M245.5 497v2M245.5 502v1M245.5 504v1M245.5 507v4M245.5 513v1M245.5 515v1M245.5 527v3M245.5 535v3M246.5 452v5M246.5 462v1M246.5 465v2M246.5 469v1M246.5 483v4M246.5 488v1M246.5 491v1M246.5 494v1M246.5 499v1M246.5 535v3M246.5 548v1M247.5 452v1M247.5 467v1M247.5 473v4M247.5 492v1M247.5 501v1M247.5 521v1M247.5 523v2M247.5 532v3M247.5 538v1M247.5 544v2M247.5 549v1M248.5 468v1M248.5 475v1M248.5 478v1M248.5 481v1M248.5 483v1M248.5 489v1M248.5 493v2M248.5 507v1M248.5 512v1M248.5 515v1M248.5 518v3M248.5 531v1M248.5 539v4M248.5 547v2M249.5 469v1M249.5 471v1M249.5 473v1M249.5 477v1M249.5 485v1M249.5 488v3M249.5 502v1M249.5 509v4M249.5 517v1M249.5 520v1M249.5 528v1M249.5 541v1M250.5 461v1M250.5 471v1M250.5 478v1M250.5 488v3M250.5 495v1M250.5 497v1M250.5 499v1M250.5 510v1M250.5 513v1M250.5 545v1M251.5 453v1M251.5 473v1M251.5 482v1M251.5 493v1M251.5 496v2M251.5 499v1M251.5 524v2M251.5 533v2M251.5 549v1M252.5 475v2M252.5 478v1M252.5 492v1M252.5 500v1M252.5 509v1M252.5 517v5M252.5 530v1M252.5 532v1M252.5 535v2M252.5 538v1M252.5 545v2M253.5 470v1M253.5 473v6M253.5 481v1M253.5 483v1M253.5 487v2M253.5 504v3M253.5 508v4M253.5 513v1M253.5 519v1M253.5 527v2M253.5 531v1M253.5 534v1M253.5 539v4M253.5 547v2M254.5 469v2M254.5 473v1M254.5 475v1M254.5 477v2M254.5 482v1M254.5 487v2M254.5 503v2M254.5 509v2M254.5 512v1M254.5 515v2M254.5 519v3M254.5 528v4M254.5 539v5M255.5 479v1M255.5 484v1M255.5 486v1M255.5 488v1M255.5 494v2M255.5 499v1M255.5 503v1M255.5 509v3M255.5 526v1M255.5 531v1M255.5 536v2M255.5 544v3M256.5 463v1M256.5 471v1M256.5 485v1M256.5 487v1M256.5 491v1M256.5 500v1M256.5 502v1M256.5 511v1M256.5 515v1M256.5 526v1M256.5 531v5M256.5 546v1M256.5 549v1M257.5 468v1M257.5 472v1M257.5 476v1M257.5 483v1M257.5 500v1M257.5 504v1M257.5 518v2M257.5 522v1M257.5 525v1M257.5 531v1M257.5 538v1M257.5 543v1M257.5 545v1M257.5 547v2M258.5 468v2M258.5 471v1M258.5 477v2M258.5 481v5M258.5 491v1M258.5 505v6M258.5 515v2M258.5 518v1M258.5 527v2M258.5 539v1M258.5 542v2M259.5 486v1M259.5 488v1M259.5 504v1M259.5 528v1M259.5 540v3M260.5 471v1M260.5 475v4M260.5 480v1M260.5 482v1M260.5 484v6M260.5 491v1M260.5 502v1M260.5 515v2M260.5 531v1M260.5 539v2M261.5 451v1M261.5 480v1M261.5 488v1M261.5 494v5M261.5 500v1M261.5 535v1M261.5 544v1M262.5 452v1M262.5 472v1M262.5 474v2M262.5 501v1M262.5 517v1M262.5 519v2M262.5 523v1M262.5 526v1M262.5 532v4M262.5 548v1M263.5 468v1M263.5 472v3M263.5 479v2M263.5 484v1M263.5 493v1M263.5 515v1M263.5 517v3M263.5 523v1M263.5 525v3M263.5 529v1M263.5 531v1M263.5 535v1M263.5 538v1M263.5 540v2M263.5 545v4M264.5 468v4M264.5 473v2M264.5 479v1M264.5 481v1M264.5 483v1M264.5 488v1M264.5 492v1M264.5 501v2M264.5 507v2M264.5 515v2M264.5 519v2M264.5 523v1M264.5 525v1M264.5 527v1M264.5 531v1M264.5 539v3M264.5 547v1M265.5 468v3M265.5 473v1M265.5 476v1M265.5 482v6M265.5 489v2M265.5 501v1M265.5 503v6M265.5 510v3M265.5 515v1M265.5 527v2M265.5 540v4M266.5 472v1M266.5 485v2M266.5 494v1M266.5 524v1M266.5 532v1M266.5 534v4M266.5 545v2M267.5 473v1M267.5 478v1M267.5 480v1M267.5 491v1M267.5 499v1M267.5 501v1M267.5 523v1M267.5 525v2M267.5 535v2M267.5 549v1M268.5 472v2M268.5 475v1M268.5 478v1M268.5 485v1M268.5 494v1M268.5 500v2M268.5 505v1M268.5 515v2M268.5 518v1M268.5 520v1M268.5 522v1M268.5 526v3M268.5 537v1M268.5 541v1M268.5 544v1M268.5 549v1M269.5 468v4M269.5 476v1M269.5 479v4M269.5 484v1M269.5 487v1M269.5 490v2M269.5 502v1M269.5 504v5M269.5 510v3M269.5 516v2M269.5 519v2M269.5 528v2M269.5 531v1M269.5 541v3M269.5 547v2M270.5 470v2M270.5 473v1M270.5 478v3M270.5 482v1M270.5 484v2M270.5 488v1M270.5 491v1M270.5 503v1M270.5 507v3M270.5 512v5M270.5 519v1M270.5 543v1M271.5 469v1M271.5 471v1M271.5 477v1M271.5 481v2M271.5 486v1M271.5 488v1M271.5 490v1M271.5 493v1M271.5 505v1M271.5 509v1M271.5 514v1M271.5 525v1M271.5 539v2M271.5 542v1M272.5 457v2M272.5 470v1M272.5 477v1M272.5 481v1M272.5 483v1M272.5 487v1M272.5 489v1M272.5 496v1M272.5 501v1M272.5 509v1M272.5 513v1M272.5 529v1M272.5 536v2M272.5 544v1M273.5 452v2M273.5 456v1M273.5 463v2M273.5 491v1M273.5 497v1M273.5 499v1M273.5 501v1M273.5 503v1M273.5 518v1M273.5 522v1M273.5 524v2M273.5 527v1M273.5 532v1M273.5 535v2M273.5 547v2M274.5 472v2M274.5 475v3M274.5 481v1M274.5 483v1M274.5 492v2M274.5 501v1M274.5 518v2M274.5 521v1M274.5 523v2M274.5 526v1M274.5 530v1M274.5 532v2M274.5 537v1M274.5 541v1M274.5 545v5M275.5 469v1M275.5 474v1M275.5 476v3M275.5 483v1M275.5 485v1M275.5 487v1M275.5 503v4M275.5 508v1M275.5 513v2M275.5 529v3M275.5 539v1M275.5 543v1M275.5 547v2M276.5 470v1M276.5 472v1M276.5 476v3M276.5 481v11M276.5 503v4M276.5 508v1M276.5 511v1M276.5 515v2M276.5 527v2M276.5 534v1M276.5 540v4M276.5 547v1M277.5 457v1M277.5 479v1M277.5 486v1M277.5 489v1M277.5 495v1M277.5 497v1M277.5 510v1M277.5 544v1M278.5 452v1M278.5 465v1M278.5 473v1M278.5 475v2M278.5 493v2M278.5 498v1M278.5 501v1M278.5 523v1M278.5 526v1M278.5 532v2M278.5 544v2M278.5 548v1M279.5 455v1M279.5 467v1M279.5 473v5M279.5 492v2M279.5 517v1M279.5 524v1M279.5 526v1M279.5 533v2M279.5 538v1M279.5 544v1M279.5 548v2M280.5 468v1M280.5 470v2M280.5 477v1M280.5 479v3M280.5 487v1M280.5 506v1M280.5 508v1M280.5 511v2M280.5 519v3M280.5 528v2M280.5 538v1M280.5 540v1M280.5 542v2M280.5 547v2M281.5 470v2M281.5 474v1M281.5 481v2M281.5 484v1M281.5 486v6M281.5 504v2M281.5 508v5M281.5 514v3M281.5 527v4M281.5 540v3M282.5 457v4M282.5 471v1M282.5 482v3M282.5 496v2M282.5 499v1M282.5 511v1M282.5 516v1M282.5 528v1M282.5 530v1M282.5 544v3M283.5 453v1M283.5 455v2M283.5 472v1M283.5 474v2M283.5 481v1M283.5 493v2M283.5 498v1M283.5 500v2M283.5 521v1M283.5 523v1M283.5 533v1M283.5 536v2M283.5 544v1M283.5 549v1M284.5 468v1M284.5 475v1M284.5 478v1M284.5 480v2M284.5 493v1M284.5 504v1M284.5 513v1M284.5 520v2M284.5 535v1M284.5 538v1M284.5 545v5M285.5 469v1M285.5 471v1M285.5 475v1M285.5 477v2M285.5 480v1M285.5 483v1M285.5 489v2M285.5 502v3M285.5 506v1M285.5 509v3M285.5 513v3M285.5 527v3M285.5 531v1M285.5 542v1M285.5 547v1M286.5 469v2M286.5 482v1M286.5 484v3M286.5 488v2M286.5 491v1M286.5 507v2M286.5 510v1M286.5 527v4M286.5 539v1M286.5 542v1M287.5 481v1M287.5 490v1M287.5 509v1M287.5 538v1M287.5 541v1M287.5 543v1M288.5 472v1M288.5 476v1M288.5 494v4M288.5 499v1M288.5 526v1M288.5 532v1M288.5 535v2M288.5 545v2M289.5 455v1M289.5 466v1M289.5 475v2M289.5 479v1M289.5 494v1M289.5 500v1M289.5 519v1M289.5 522v2M289.5 532v1M289.5 534v1M289.5 537v1M289.5 549v1M290.5 472v1M290.5 474v1M290.5 479v2M290.5 492v3M290.5 501v1M290.5 511v1M290.5 517v6M290.5 533v2M290.5 536v1M290.5 544v1M290.5 546v2M290.5 549v1M291.5 469v1M291.5 471v1M291.5 483v4M291.5 489v2M291.5 503v3M291.5 509v1M291.5 511v1M291.5 515v3M291.5 527v2M291.5 530v2M291.5 540v2M292.5 469v3M292.5 481v3M292.5 486v3M292.5 490v2M292.5 503v2M292.5 506v1M292.5 509v3M292.5 515v3M292.5 527v3M292.5 541v2M293.5 474v2M293.5 486v3M293.5 493v1M293.5 528v1M293.5 542v1M294.5 472v1M294.5 494v1M294.5 499v2M294.5 523v3M294.5 532v3M294.5 536v2M294.5 544v1M294.5 546v1M295.5 473v1M295.5 475v2M295.5 479v2M295.5 501v1M295.5 517v3M295.5 521v2M295.5 524v3M295.5 532v1M295.5 534v3M295.5 549v1M296.5 469v3M296.5 477v1M296.5 479v3M296.5 485v1M296.5 487v2M296.5 505v2M296.5 510v1M296.5 512v2M296.5 519v3M296.5 527v1M296.5 529v1M296.5 537v2M296.5 544v1M296.5 546v2M297.5 471v1M297.5 473v1M297.5 478v1M297.5 480v3M297.5 485v1M297.5 488v3M297.5 502v5M297.5 508v5M297.5 515v2M297.5 529v3M297.5 543v1M298.5 471v4M298.5 489v3M298.5 493v1M298.5 505v1M298.5 509v1M298.5 527v2M298.5 530v2M298.5 540v1M299.5 543v1M300.5 498v1M300.5 500v1M300.5 522v3M300.5 526v1M300.5 533v5M300.5 545v1M301.5 472v1M301.5 476v1M301.5 492v1M301.5 494v1M301.5 498v1M301.5 501v1M301.5 522v2M301.5 525v2M301.5 532v2M301.5 549v1M302.5 468v2M302.5 472v3M302.5 481v1M302.5 493v1M302.5 503v1M302.5 508v1M302.5 510v1M302.5 513v1M302.5 517v2M302.5 520v3M302.5 529v1M302.5 537v1M302.5 544v2M302.5 547v2M303.5 469v1M303.5 478v1M303.5 480v2M303.5 502v1M303.5 504v2M303.5 508v4M303.5 514v3M303.5 521v1M303.5 527v2M303.5 531v1M303.5 539v1M303.5 542v1M304.5 470v1M304.5 477v1M304.5 482v1M304.5 484v4M304.5 491v1M304.5 505v2M304.5 512v1M304.5 514v1M305.5 459v2M305.5 470v2M305.5 479v1M305.5 485v2M305.5 491v1M305.5 495v6M305.5 537v2M305.5 546v1M306.5 474v1M306.5 476v1M306.5 492v1M306.5 494v1M306.5 500v2M306.5 522v5M306.5 532v2M306.5 537v1M306.5 549v1M307.5 467v1M307.5 473v5M307.5 500v1M307.5 502v1M307.5 511v1M307.5 518v1M307.5 520v2M307.5 528v2M307.5 537v1M307.5 544v3M307.5 549v1M308.5 469v1M308.5 479v1M308.5 489v2M308.5 502v1M308.5 510v1M308.5 517v2M308.5 521v1M308.5 527v5M308.5 539v1M308.5 541v3M308.5 547v2M309.5 472v1M309.5 475v1M309.5 481v2M309.5 484v1M309.5 486v1M309.5 506v3M309.5 514v2M309.5 531v1M309.5 541v1M309.5 543v1M310.5 451v1M310.5 459v2M310.5 495v1M310.5 498v3M310.5 526v1M310.5 537v1M310.5 544v1M311.5 456v1M311.5 462v2M311.5 465v2M311.5 474v1M311.5 490v1M311.5 494v1M311.5 496v4M311.5 501v1M311.5 544v1M312.5 468v2M312.5 472v2M312.5 476v1M312.5 479v1M312.5 492v2M312.5 522v2M312.5 525v1M312.5 532v1M312.5 535v2M312.5 549v1M313.5 470v2M313.5 473v1M313.5 477v5M313.5 484v1M313.5 503v1M313.5 507v1M313.5 514v1M313.5 516v1M313.5 521v1M313.5 530v1M313.5 539v2M313.5 547v1M313.5 549v1M314.5 470v2M314.5 485v2M314.5 488v2M314.5 491v1M314.5 506v1M314.5 509v5M314.5 515v2M314.5 531v1M315.5 457v2M315.5 461v1M315.5 487v2M315.5 491v1M315.5 494v7M315.5 523v2M315.5 536v2M315.5 544v3M316.5 452v1M316.5 462v1M316.5 488v1M316.5 494v2M316.5 498v1M316.5 500v1M316.5 522v1M316.5 524v2M316.5 529v1M316.5 546v1M316.5 548v1M317.5 469v1M317.5 472v1M317.5 477v1M317.5 493v1M317.5 507v2M317.5 517v2M317.5 520v2M317.5 526v1M317.5 529v1M317.5 537v2M317.5 548v2M318.5 470v1M318.5 477v1M318.5 481v1M318.5 483v1M318.5 485v1M318.5 487v2M318.5 491v1M318.5 502v11M318.5 514v1M318.5 528v3M319.5 471v1M319.5 478v1M319.5 482v1M319.5 485v6M319.5 514v1M319.5 527v1M320.5 485v1M321.5 475v1M321.5 494v1M321.5 496v1M321.5 499v1M321.5 501v1M321.5 524v1M321.5 526v1M321.5 537v1M321.5 544v1M322.5 455v1M322.5 493v3M322.5 500v2M322.5 524v3M322.5 532v3M322.5 536v1M322.5 545v1M323.5 470v1M323.5 472v3M323.5 476v1M323.5 479v2M323.5 493v1M323.5 517v2M323.5 520v1M323.5 522v1M323.5 528v2M323.5 532v1M323.5 536v2M323.5 545v3M323.5 549v1M324.5 471v1M324.5 481v4M324.5 486v1M324.5 488v1M324.5 491v1M324.5 505v4M324.5 510v4M324.5 516v2M324.5 530v2M325.5 484v1M325.5 487v3M325.5 511v1M326.5 540v1M327.5 494v1M327.5 496v4M327.5 523v1M327.5 525v2M327.5 536v3M327.5 544v3M328.5 464v1M328.5 472v1M328.5 475v3M328.5 492v1M328.5 494v1M328.5 498v4M328.5 522v5M328.5 533v3M328.5 537v1M328.5 546v4M329.5 470v2M329.5 477v4M329.5 483v1M329.5 490v1M329.5 507v1M329.5 510v2M329.5 513v1M329.5 519v1M329.5 521v1M329.5 529v3M329.5 538v1M329.5 543v1M329.5 548v2M330.5 470v2M330.5 478v4M330.5 483v1M330.5 485v2M330.5 489v2M330.5 502v1M330.5 504v1M330.5 509v1M330.5 520v2M330.5 528v3M330.5 541v2M330.5 548v1M331.5 477v2M331.5 483v9M331.5 505v2M331.5 512v3M331.5 529v1M331.5 531v1M332.5 459v3M332.5 477v1M332.5 495v1M332.5 497v2M332.5 545v2M333.5 452v1M333.5 465v1M333.5 474v1M333.5 494v5M333.5 500v2M333.5 524v3M333.5 532v1M333.5 535v2M334.5 472v1M334.5 475v4M334.5 492v2M334.5 505v1M334.5 517v1M334.5 519v2M334.5 522v1M334.5 531v1M334.5 544v3M334.5 549v1M335.5 477v1M335.5 487v1M335.5 503v1M335.5 507v4M335.5 512v5M335.5 521v1M335.5 527v1M335.5 531v1M335.5 541v1M336.5 483v4M336.5 488v1M336.5 491v1M336.5 505v1M336.5 510v1M338.5 457v1M338.5 459v2M338.5 494v2M338.5 497v3M338.5 501v1M338.5 526v1M338.5 537v1M339.5 453v1M339.5 472v1M339.5 475v1M339.5 492v2M339.5 500v1M339.5 521v2M339.5 525v2M339.5 533v2M339.5 536v1M339.5 549v1M340.5 469v1M340.5 471v3M340.5 475v2M340.5 500v1M340.5 505v1M340.5 514v1M340.5 518v2M340.5 523v1M340.5 532v1M340.5 537v1M340.5 541v2M340.5 544v4M340.5 549v1M341.5 471v1M341.5 477v2M341.5 481v1M341.5 483v1M341.5 505v7M341.5 515v1M341.5 527v4M341.5 541v2M341.5 548v1M342.5 486v1M343.5 459v1M343.5 473v1M343.5 493v2M343.5 496v3M343.5 500v1M343.5 524v1M343.5 536v3M343.5 545v2M344.5 473v4M344.5 493v1M344.5 500v2M344.5 522v3M344.5 533v1M344.5 535v3M344.5 545v1M344.5 547v2M345.5 468v1M345.5 472v3M345.5 501v1M345.5 504v1M345.5 513v1M345.5 517v1M345.5 519v4M345.5 524v1M345.5 537v1M345.5 547v1M346.5 471v1M346.5 477v7M346.5 485v4M346.5 490v2M346.5 502v5M346.5 508v8M346.5 517v1M346.5 527v2M346.5 530v2M346.5 540v2M347.5 514v1M349.5 459v1M349.5 495v2M349.5 499v1M349.5 524v1M349.5 535v2M349.5 544v1M349.5 546v1M350.5 452v1M350.5 463v3M350.5 473v2M350.5 492v1M350.5 494v1M350.5 498v1M350.5 501v1M350.5 523v4M350.5 532v4M350.5 545v2M351.5 471v1M351.5 479v3M351.5 493v1M351.5 501v1M351.5 507v4M351.5 518v1M351.5 520v2M351.5 523v1M351.5 538v1M352.5 477v4M352.5 489v2M352.5 502v1M352.5 504v2M352.5 507v5M352.5 515v3M352.5 520v1M352.5 529v1M352.5 539v1M352.5 541v1M352.5 547v2M353.5 481v5M353.5 487v5M353.5 503v3M353.5 507v1M353.5 511v2M353.5 514v1M353.5 529v1M354.5 451v1M354.5 457v1M354.5 459v1M354.5 461v1M354.5 479v1M354.5 483v2M354.5 495v4M354.5 536v1M354.5 545v1M355.5 452v5M355.5 458v1M355.5 462v1M355.5 465v2M355.5 493v2M355.5 496v1M355.5 499v1M355.5 524v1M355.5 526v1M355.5 532v1M355.5 537v1M356.5 452v1M356.5 467v2M356.5 470v1M356.5 473v4M356.5 493v1M356.5 500v1M356.5 517v2M356.5 520v1M356.5 522v2M356.5 538v1M356.5 540v3M356.5 545v2M356.5 548v1M357.5 471v1M357.5 477v1M357.5 481v1M357.5 486v2M357.5 502v1M357.5 513v3M357.5 517v1M357.5 529v2M357.5 539v2M357.5 547v2M358.5 482v1M358.5 504v1M358.5 509v1M360.5 457v4M361.5 452v1M361.5 463v4M361.5 493v1M361.5 498v2M361.5 533v1M361.5 544v3M361.5 549v1M362.5 468v1M362.5 470v1M362.5 473v1M362.5 479v1M362.5 513v1M362.5 516v3M362.5 520v1M362.5 526v1M362.5 530v2M362.5 536v2M362.5 539v1M362.5 544v1M362.5 548v2M363.5 481v1M363.5 490v2M363.5 503v2M363.5 507v2M363.5 513v2M363.5 527v1M364.5 487v2M364.5 512v1M365.5 540v1M366.5 458v1M366.5 461v1M366.5 472v1M366.5 497v1M366.5 535v1M367.5 456v1M367.5 466v1M367.5 493v1M367.5 499v3M367.5 522v3M367.5 526v1M367.5 532v1M367.5 536v2M367.5 546v4M368.5 470v2M368.5 473v2M368.5 476v5M368.5 492v1M368.5 511v1M368.5 513v1M368.5 517v1M368.5 538v1M368.5 544v2M368.5 547v2M369.5 477v1M369.5 479v1M369.5 481v1M369.5 505v4M369.5 512v3M369.5 519v2M369.5 540v1M369.5 548v2M370.5 483v2M370.5 487v1M370.5 491v1M371.5 472v1M371.5 494v3M371.5 501v1M371.5 525v2M371.5 534v2M371.5 537v1M371.5 544v1M371.5 546v1M372.5 472v2M372.5 475v4M372.5 494v1M372.5 518v1M372.5 522v1M372.5 524v1M372.5 532v1M372.5 534v2M372.5 544v1M372.5 548v2M373.5 477v1M373.5 479v1M373.5 483v2M373.5 490v2M373.5 503v1M373.5 505v4M373.5 510v1M373.5 512v1M373.5 515v4M373.5 521v1M373.5 529v2M373.5 535v1M373.5 538v1M373.5 544v6M374.5 484v2M374.5 487v2M374.5 491v1M374.5 504v2M374.5 508v3M374.5 513v1M374.5 515v2M374.5 527v3M377.5 459v1M377.5 472v1M377.5 494v2M377.5 501v1M377.5 522v1M377.5 533v1M377.5 535v3M377.5 545v2M378.5 473v1M378.5 492v2M378.5 497v1M378.5 500v2M378.5 517v1M378.5 521v1M378.5 524v1M378.5 526v1M378.5 534v1M378.5 548v2M379.5 479v3M379.5 503v1M379.5 505v1M379.5 509v1M379.5 517v1M379.5 520v2M379.5 537v1M379.5 545v1M379.5 548v1M380.5 477v2M380.5 481v1M380.5 484v1M380.5 486v1M380.5 488v1M380.5 502v1M380.5 504v1M380.5 506v1M380.5 510v1M380.5 513v1M380.5 527v1M380.5 529v1M380.5 531v1M380.5 540v1M380.5 542v1M380.5 547v2M383.5 472v2M383.5 475v2M383.5 497v3M383.5 532v1M383.5 535v4M383.5 545v2M384.5 474v1M384.5 476v1M384.5 493v1M384.5 500v2M384.5 519v2M384.5 523v4M384.5 532v1M384.5 534v1M384.5 545v4M385.5 478v1M385.5 480v1M385.5 482v1M385.5 485v1M385.5 487v1M385.5 491v1M385.5 502v2M385.5 505v2M385.5 509v2M385.5 512v5M385.5 521v1M385.5 528v1M385.5 537v2M385.5 542v1M386.5 483v1M386.5 485v5M386.5 491v1M386.5 502v3M386.5 508v5M386.5 515v2M386.5 527v2M386.5 530v1M389.5 457v1M389.5 459v3M389.5 536v1M390.5 452v1M390.5 455v2M390.5 463v4M390.5 492v1M390.5 494v1M390.5 498v2M390.5 525v1M390.5 534v3M391.5 468v1M391.5 471v1M391.5 474v1M391.5 487v1M391.5 493v1M391.5 521v1M391.5 548v2M392.5 478v1M392.5 480v2M392.5 484v4M392.5 491v1M392.5 508v1M392.5 510v3M392.5 514v3M392.5 529v1M392.5 547v2M393.5 488v1M393.5 491v1M393.5 527v1M393.5 529v1M395.5 473v1M395.5 493v2M395.5 498v2M395.5 524v1M395.5 526v1M395.5 533v1M395.5 536v1M395.5 546v1M396.5 465v1M396.5 474v3M396.5 481v1M396.5 492v2M396.5 499v3M396.5 522v1M396.5 524v2M396.5 533v2M396.5 536v1M396.5 544v3M396.5 549v1M397.5 477v2M397.5 482v1M397.5 485v4M397.5 491v1M397.5 502v3M397.5 510v1M397.5 513v3M397.5 518v3M397.5 527v3M397.5 531v1M397.5 536v1M397.5 544v1M397.5 547v1M397.5 549v1M398.5 478v1M398.5 484v3M398.5 489v3M398.5 502v1M398.5 504v1M398.5 506v5M398.5 512v1M398.5 527v3M398.5 531v1M401.5 461v1M401.5 495v3M401.5 524v1M401.5 526v1M401.5 536v1M401.5 544v1M402.5 463v1M402.5 474v2M402.5 477v1M402.5 492v2M402.5 500v1M402.5 519v1M402.5 522v2M402.5 526v1M402.5 532v1M402.5 544v1M402.5 549v1M403.5 467v2M403.5 477v1M403.5 486v1M403.5 517v3M403.5 521v1M403.5 531v1M403.5 537v1M403.5 544v1M403.5 547v3M404.5 482v1M404.5 484v1M404.5 487v2M404.5 491v1M404.5 502v1M404.5 504v3M404.5 508v4M404.5 515v2M404.5 527v4M404.5 543v1M404.5 547v2M405.5 508v1M407.5 495v3M407.5 500v2M407.5 535v1M408.5 456v1M408.5 463v1M408.5 493v2M408.5 500v2M408.5 522v1M408.5 524v2M408.5 534v1M408.5 546v1M408.5 549v1M409.5 477v1M409.5 479v3M409.5 488v1M409.5 509v1M409.5 517v2M409.5 520v2M409.5 537v2M409.5 544v2M409.5 547v3M410.5 482v1M410.5 485v1M410.5 487v2M410.5 502v3M410.5 506v1M410.5 509v1M410.5 511v2M410.5 515v2M410.5 518v1M410.5 527v2M410.5 531v1M410.5 539v2M410.5 547v2M411.5 510v2M413.5 473v1M413.5 476v1M413.5 494v4M413.5 499v1M413.5 501v1M413.5 537v1M413.5 546v1M414.5 476v1M414.5 492v3M414.5 497v1M414.5 500v2M414.5 520v1M414.5 523v1M414.5 525v1M414.5 532v1M414.5 544v1M414.5 546v1M414.5 549v1M415.5 477v2M415.5 480v1M415.5 491v1M415.5 506v1M415.5 517v1M415.5 519v1M415.5 521v1M415.5 535v3M415.5 544v1M415.5 547v1M415.5 549v1M416.5 483v8M416.5 502v1M416.5 504v1M416.5 507v1M416.5 509v1M416.5 512v2M416.5 515v1M416.5 527v3M416.5 531v1M416.5 539v4M420.5 476v1M420.5 492v3M420.5 499v1M420.5 522v1M420.5 526v1M420.5 533v4M420.5 538v1M420.5 544v1M420.5 546v1M421.5 475v2M421.5 479v3M421.5 501v1M421.5 518v1M421.5 521v3M421.5 525v2M421.5 532v1M421.5 534v1M421.5 544v1M421.5 549v1M422.5 477v3M422.5 481v1M422.5 484v2M422.5 489v3M422.5 503v1M422.5 509v1M422.5 512v1M422.5 515v1M422.5 517v1M422.5 519v2M422.5 530v1M422.5 535v3M422.5 544v2M422.5 547v1M422.5 549v1M423.5 487v2M423.5 502v1M423.5 507v1M423.5 513v4M423.5 531v1M423.5 539v3M423.5 543v1M423.5 545v2M424.5 539v5M425.5 539v1M425.5 543v1M426.5 492v1M426.5 494v1M426.5 496v1M426.5 499v1M426.5 522v1M426.5 536v2M427.5 477v2M427.5 481v1M427.5 511v3M427.5 516v3M427.5 521v1M427.5 524v4M427.5 529v4M427.5 549v1M428.5 482v3M428.5 486v2M428.5 489v3M428.5 502v1M428.5 508v1M428.5 513v1M428.5 517v2M428.5 520v2M428.5 523v1M428.5 525v2M428.5 529v1M428.5 532v1M428.5 535v2M429.5 484v1M429.5 489v1M429.5 503v2M429.5 508v1M429.5 512v5M429.5 519v4M429.5 527v4M429.5 538v2M429.5 544v3M429.5 548v1M430.5 539v5M430.5 545v2M430.5 548v1M431.5 544v1M431.5 547v1M432.5 540v1M432.5 542v2M433.5 476v1M433.5 495v1M433.5 533v4M433.5 548v1M434.5 477v1M434.5 479v1M434.5 493v1M434.5 500v2M434.5 511v2M434.5 514v1M434.5 520v1M434.5 526v1M434.5 530v1M434.5 533v3M434.5 550v1M435.5 485v2M435.5 488v2M435.5 502v1M435.5 505v2M435.5 509v2M435.5 513v1M435.5 523v1M435.5 533v1M435.5 536v1M436.5 482v1M436.5 487v1M436.5 502v1M436.5 504v1M436.5 508v9M436.5 518v1M436.5 520v6M436.5 528v1M436.5 530v1M436.5 532v3M436.5 538v3M436.5 544v2M436.5 549v1M437.5 539v6M437.5 546v3M438.5 541v1M438.5 543v1M438.5 545v1M438.5 547v2M439.5 476v1M439.5 499v2M439.5 523v2M439.5 533v1M439.5 536v4M439.5 547v1M439.5 549v1M440.5 477v3M440.5 500v1M440.5 511v2M440.5 516v1M440.5 519v1M440.5 523v3M440.5 527v1M440.5 532v1M440.5 534v1M440.5 537v1M441.5 482v1M441.5 484v2M441.5 489v2M441.5 505v4M441.5 510v1M441.5 512v1M441.5 514v1M441.5 520v2M441.5 523v4M441.5 533v2M441.5 536v2M441.5 549v1M442.5 502v2M442.5 513v2M442.5 516v2M442.5 520v2M442.5 523v1M442.5 527v1M442.5 530v2M442.5 538v3M442.5 542v2M442.5 549v1M443.5 538v3M443.5 542v3M443.5 546v1M443.5 549v1M444.5 538v1M444.5 540v1M444.5 544v1M444.5 546v1M444.5 548v1M445.5 541v2M445.5 546v3M446.5 476v1M446.5 499v2M446.5 535v1M446.5 537v1M446.5 549v1M447.5 477v1M447.5 479v2M447.5 500v2M447.5 511v1M447.5 513v1M447.5 515v1M447.5 532v1M447.5 534v1M447.5 536v2M447.5 551v1M448.5 483v7M448.5 505v1M448.5 533v2M448.5 536v3M448.5 543v1M448.5 551v1M449.5 503v2M449.5 507v6M449.5 515v2M449.5 520v5M449.5 530v1M449.5 532v1M449.5 534v1M449.5 537v5M449.5 550v2M450.5 527v2M450.5 539v3M450.5 543v4M450.5 548v1M451.5 500v2M451.5 525v2M451.5 533v1M451.5 538v1M451.5 540v1M451.5 547v4M452.5 479v1M452.5 501v1M452.5 513v1M452.5 515v1M452.5 524v2M452.5 528v1M452.5 533v2M452.5 552v1M453.5 503v2M453.5 506v4M453.5 511v2M453.5 514v1M453.5 516v3M453.5 521v2M453.5 526v1M453.5 528v1M453.5 536v2M453.5 539v1M454.5 505v1M454.5 511v1M454.5 515v1M454.5 519v1M454.5 523v1M454.5 525v4M454.5 538v4M454.5 543v1M454.5 545v3M454.5 551v1M455.5 538v1M455.5 542v7M456.5 540v1M456.5 543v6M457.5 541v7M457.5 549v2M458.5 538v1M458.5 541v2M458.5 544v7M459.5 493v1M459.5 499v2M459.5 522v3M459.5 532v2M459.5 535v1M459.5 538v1M459.5 547v2M459.5 550v1M460.5 501v1M460.5 513v4M460.5 519v8M460.5 529v3M460.5 533v3M460.5 537v1M461.5 505v2M461.5 517v1M461.5 525v2M461.5 530v1M461.5 532v7M461.5 552v1M462.5 502v1M462.5 513v5M462.5 520v1M462.5 522v3M462.5 527v1M462.5 531v1M462.5 538v3M462.5 542v3M462.5 549v1M462.5 551v1M463.5 541v1M463.5 544v1M463.5 547v5M464.5 539v4M464.5 545v4M464.5 551v1M465.5 500v2M465.5 532v6M465.5 549v2M466.5 511v4M466.5 516v1M466.5 522v3M466.5 526v1M466.5 531v1M466.5 533v4M467.5 502v2M467.5 509v1M467.5 511v1M467.5 513v2M467.5 519v2M467.5 532v3M467.5 537v1M468.5 504v2M468.5 514v1M468.5 518v1M468.5 521v6M468.5 529v3M468.5 537v5M468.5 543v6M468.5 552v1M469.5 540v2M469.5 544v3M469.5 548v1M469.5 551v2M470.5 539v2M470.5 543v1M470.5 547v1M470.5 549v3M471.5 539v3M471.5 543v5M471.5 549v2M471.5 552v1M472.5 539v3M472.5 543v10M473.5 499v1M473.5 533v3M473.5 537v1M473.5 548v2M473.5 551v1M474.5 511v2M474.5 514v3M474.5 522v1M474.5 529v2M474.5 533v4M475.5 502v2M475.5 507v2M475.5 518v1M475.5 532v1M475.5 534v1M475.5 536v1M475.5 553v1M476.5 503v2M476.5 510v1M476.5 512v5M476.5 520v7M476.5 528v2M476.5 537v1M476.5 539v3M476.5 544v1M477.5 542v1M477.5 545v1M477.5 549v2M478.5 543v1M478.5 550v1M479.5 501v1M479.5 522v4M479.5 540v1M480.5 513v1M480.5 515v2M480.5 519v1M480.5 522v1M480.5 525v1M480.5 527v2M480.5 536v1M481.5 503v2M481.5 506v1M481.5 509v2M481.5 512v3M481.5 516v2M481.5 519v2M481.5 523v1M481.5 526v1M481.5 528v2M481.5 536v2M481.5 541v1M481.5 544v2M482.5 538v1M482.5 541v1M482.5 544v2M482.5 547v1M482.5 550v3M483.5 539v1M483.5 541v3M484.5 500v1M484.5 522v3M484.5 532v3M484.5 536v2M485.5 521v1M485.5 535v1M485.5 545v2M485.5 551v1M485.5 553v2M486.5 500v5M486.5 506v2M486.5 510v1M486.5 513v1M486.5 515v2M486.5 522v6M486.5 529v1M486.5 533v1M486.5 535v3M486.5 545v1M486.5 551v2M487.5 504v1M487.5 508v1M487.5 517v5M487.5 524v1M487.5 535v1M487.5 548v1M487.5 554v1M488.5 502v3M488.5 507v1M488.5 512v2M488.5 516v1M488.5 530v2M488.5 536v3M488.5 542v1M488.5 544v5M488.5 554v1M489.5 500v1M489.5 523v2M489.5 526v1M489.5 533v2M489.5 536v1M489.5 546v2M489.5 552v1M490.5 518v2M490.5 535v1M490.5 550v2M491.5 502v3M491.5 506v1M491.5 508v3M491.5 513v3M491.5 527v2M491.5 531v1M491.5 545v2M491.5 550v3M491.5 554v1M492.5 538v6M492.5 547v2M493.5 541v1M494.5 541v1M495.5 501v1M495.5 536v1M495.5 544v1M496.5 536v1M496.5 545v1M496.5 547v3M497.5 502v3M497.5 506v1M497.5 509v1M497.5 514v1M497.5 527v1M497.5 536v3M497.5 541v1M497.5 545v3M497.5 549v1M498.5 539v2M499.5 538v1M499.5 540v2M499.5 543v1M501.5 538v1M501.5 541v1M501.5 544v3M502.5 537v1M503.5 536v2M503.5 542v1M503.5 546v3M504.5 538v1M504.5 540v1M504.5 542v1M504.5 545v2M505.5 541v3M506.5 542v1M508.5 537v2M508.5 542v1M508.5 545v1M509.5 535v3M510.5 536v3M510.5 544v2M510.5 549v1M511.5 540v1M511.5 543v1M511.5 546v1M512.5 540v3M513.5 537v1M513.5 544v2M514.5 536v1M514.5 549v1M515.5 536v7M515.5 545v2M515.5 549v1M516.5 540v2M516.5 543v1M516.5 547v2M517.5 542v1M518.5 542v1M519.5 536v3M519.5 542v1M520.5 536v2M520.5 549v1M521.5 539v1M521.5 542v3M521.5 547v1M521.5 549v1M522.5 537v2M522.5 541v3M522.5 548v1M523.5 540v4M524.5 541v1M525.5 538v1M525.5 541v1M525.5 543v2M525.5 546v1M526.5 537v2M526.5 544v1M526.5 549v1M527.5 537v4M527.5 544v3M527.5 548v2M528.5 538v1M528.5 541v4M528.5 547v2M529.5 541v1M532.5 542v2M533.5 535v4M533.5 540v1M533.5 544v1M534.5 536v2M534.5 548v1M535.5 538v1M535.5 544v1M535.5 547v3M536.5 539v2M536.5 542v2M537.5 542v1M538.5 536v4M538.5 541v1M538.5 543v1M539.5 536v2M539.5 545v2M540.5 536v1M540.5 538v1M540.5 544v3M540.5 549v1M541.5 543v1M542.5 543v1M543.5 539v8M544.5 536v1M544.5 549v1M545.5 537v1M545.5 541v1M545.5 544v1M545.5 546v2M546.5 539v2M546.5 542v2M547.5 539v1M547.5 542v1M548.5 537v2M548.5 542v1M548.5 544v3M549.5 536v2M549.5 547v3M550.5 539v2M550.5 544v2M550.5 548v1M551.5 539v4M551.5 548v1M552.5 545v1M553.5 541v2M553.5 545v2M554.5 538v2M554.5 543v2M554.5 547v1M555.5 536v2M555.5 541v4M555.5 546v3M556.5 539v2M556.5 542v2M556.5 546v1M557.5 539v4M558.5 540v2M558.5 543v4M559.5 536v1M559.5 546v1M559.5 549v1M560.5 537v2M560.5 542v1M560.5 544v4M560.5 549v1M561.5 538v1M561.5 540v3M562.5 542v2" stroke="#0a28c8" stroke-width="1" fill="none"/>
<path d="M115.5 467v2M115.5 481v2M115.5 486v1M115.5 496v1M115.5 498v2M115.5 502v1M115.5 524v1M115.5 531v1M115.5 536v1M115.5 538v1M115.5 544v1M115.5 546v1M116.5 469v1M116.5 486v1M116.5 488v1M116.5 492v1M116.5 497v1M116.5 500v1M116.5 519v2M116.5 525v2M116.5 533v1M116.5 535v2M116.5 545v1M117.5 465v1M117.5 473v1M117.5 475v1M117.5 505v1M117.5 515v1M117.5 517v1M117.5 521v1M117.5 525v1M117.5 530v2M117.5 533v1M117.5 538v3M117.5 542v2M117.5 548v2M118.5 466v1M118.5 468v4M118.5 479v1M118.5 483v1M118.5 486v1M118.5 488v1M118.5 490v1M118.5 493v1M118.5 502v1M118.5 504v3M118.5 508v1M118.5 510v1M118.5 514v3M118.5 518v2M118.5 527v1M118.5 529v1M118.5 531v1M118.5 539v1M118.5 541v3M119.5 469v2M119.5 473v3M119.5 478v2M119.5 481v1M119.5 484v1M119.5 487v2M119.5 490v4M119.5 503v3M119.5 507v2M119.5 510v1M119.5 512v1M119.5 514v1M119.5 516v2M119.5 525v1M119.5 527v2M119.5 532v1M119.5 534v1M119.5 538v2M119.5 541v1M120.5 491v1M121.5 467v1M121.5 481v1M121.5 486v1M121.5 507v1M121.5 522v1M121.5 524v1M121.5 532v1M121.5 537v1M121.5 544v3M122.5 465v1M122.5 467v2M122.5 472v1M122.5 482v1M122.5 486v1M122.5 488v4M122.5 500v1M122.5 507v1M122.5 519v1M122.5 522v1M122.5 525v1M122.5 532v1M122.5 537v1M122.5 547v1M122.5 549v1M123.5 466v2M123.5 469v1M123.5 472v1M123.5 474v1M123.5 476v1M123.5 480v1M123.5 489v1M123.5 491v2M123.5 502v1M123.5 514v1M123.5 516v1M123.5 519v2M123.5 530v1M123.5 538v1M123.5 541v2M123.5 548v1M124.5 466v2M124.5 469v1M124.5 477v5M124.5 485v1M124.5 487v1M124.5 489v1M124.5 492v3M124.5 499v3M124.5 503v1M124.5 506v1M124.5 510v5M124.5 525v1M124.5 527v1M124.5 529v2M124.5 533v1M124.5 537v2M124.5 544v1M125.5 465v1M125.5 468v1M125.5 470v1M125.5 474v1M125.5 476v1M125.5 482v3M125.5 486v1M125.5 488v1M125.5 491v1M125.5 501v1M125.5 510v1M125.5 519v2M125.5 522v1M125.5 524v3M125.5 528v1M125.5 530v1M125.5 532v1M125.5 535v3M125.5 549v1M126.5 465v2M126.5 468v1M126.5 471v1M126.5 473v1M126.5 476v1M126.5 489v2M126.5 493v1M126.5 505v1M126.5 508v4M126.5 513v2M126.5 516v2M126.5 519v3M126.5 524v2M126.5 527v1M126.5 530v2M126.5 538v2M126.5 541v1M126.5 547v2M127.5 466v2M127.5 471v1M127.5 473v2M127.5 478v1M127.5 480v1M127.5 483v1M127.5 485v2M127.5 488v1M127.5 502v1M127.5 505v1M127.5 510v2M127.5 513v2M127.5 521v1M127.5 523v1M127.5 527v1M127.5 529v2M127.5 539v1M127.5 541v1M127.5 547v2M128.5 467v1M128.5 469v1M128.5 471v1M128.5 477v1M128.5 481v1M128.5 483v1M128.5 489v1M128.5 492v1M128.5 503v2M128.5 507v1M128.5 516v1M128.5 527v1M128.5 539v3M128.5 543v1M129.5 466v2M129.5 472v1M129.5 483v1M129.5 489v3M129.5 499v1M129.5 502v1M129.5 505v1M129.5 522v3M129.5 526v1M129.5 537v1M129.5 544v1M129.5 546v1M130.5 465v1M130.5 467v1M130.5 469v1M130.5 476v6M130.5 484v1M130.5 489v1M130.5 491v1M130.5 494v1M130.5 500v1M130.5 531v4M130.5 546v1M131.5 473v2M131.5 477v1M131.5 480v2M131.5 485v1M131.5 492v1M131.5 494v1M131.5 502v2M131.5 505v4M131.5 512v2M131.5 515v4M131.5 521v1M131.5 524v1M131.5 527v1M131.5 530v2M131.5 538v1M131.5 543v1M131.5 547v2M132.5 467v1M132.5 473v2M132.5 479v3M132.5 486v3M132.5 500v1M132.5 504v1M132.5 510v1M132.5 531v1M132.5 539v1M132.5 541v3M133.5 467v3M133.5 473v3M133.5 477v2M133.5 481v1M133.5 483v2M133.5 486v2M133.5 489v1M133.5 491v1M133.5 502v1M133.5 510v1M133.5 513v1M133.5 529v2M133.5 539v1M133.5 541v2M134.5 468v1M134.5 477v2M134.5 481v2M134.5 487v1M134.5 489v1M134.5 491v1M134.5 498v1M134.5 500v1M134.5 524v2M134.5 532v1M134.5 537v1M134.5 539v1M134.5 545v2M135.5 465v1M135.5 468v1M135.5 471v1M135.5 473v3M135.5 478v1M135.5 494v1M135.5 500v2M135.5 518v1M135.5 523v2M135.5 533v1M135.5 536v2M135.5 544v3M135.5 548v1M136.5 466v1M136.5 469v1M136.5 472v1M136.5 474v1M136.5 476v1M136.5 481v1M136.5 484v1M136.5 487v1M136.5 492v2M136.5 513v1M136.5 517v1M136.5 520v1M136.5 522v1M136.5 532v1M136.5 538v1M136.5 541v3M136.5 547v1M137.5 469v2M137.5 480v2M137.5 486v1M137.5 488v1M137.5 491v1M137.5 504v2M137.5 507v1M137.5 510v4M137.5 515v5M137.5 528v4M137.5 539v1M138.5 468v1M138.5 470v1M138.5 481v5M138.5 487v4M138.5 505v1M138.5 515v1M138.5 543v1M139.5 472v1M139.5 476v1M139.5 481v1M139.5 483v2M139.5 489v1M139.5 494v1M139.5 522v2M139.5 525v2M139.5 532v1M139.5 538v1M139.5 541v1M139.5 543v1M139.5 546v1M140.5 466v1M140.5 472v2M140.5 475v2M140.5 478v1M140.5 480v1M140.5 492v1M140.5 517v3M140.5 521v1M140.5 524v2M140.5 537v2M140.5 544v2M140.5 547v2M141.5 469v1M141.5 472v1M141.5 474v1M141.5 479v2M141.5 488v1M141.5 492v1M141.5 500v1M141.5 502v1M141.5 504v1M141.5 513v1M141.5 516v3M141.5 520v2M141.5 543v1M142.5 468v2M142.5 481v1M142.5 483v2M142.5 486v3M142.5 502v3M142.5 507v3M142.5 511v2M142.5 514v2M142.5 527v1M142.5 529v1M142.5 539v1M142.5 542v1M143.5 469v2M143.5 481v3M143.5 487v2M143.5 490v2M143.5 493v1M143.5 509v1M143.5 531v1M143.5 541v2M144.5 471v1M144.5 476v1M144.5 487v2M144.5 542v2M145.5 467v1M145.5 474v1M145.5 483v1M145.5 523v1M145.5 526v1M145.5 532v2M145.5 540v1M145.5 544v1M146.5 466v1M146.5 472v3M146.5 481v1M146.5 500v2M146.5 521v1M146.5 523v2M146.5 536v1M146.5 547v3M147.5 473v2M147.5 477v1M147.5 492v2M147.5 501v1M147.5 503v1M147.5 511v2M147.5 514v1M147.5 517v3M147.5 521v2M147.5 525v1M147.5 530v1M147.5 532v1M147.5 539v3M147.5 543v1M147.5 549v1M148.5 467v5M148.5 479v1M148.5 481v6M148.5 488v1M148.5 490v1M148.5 505v2M148.5 509v1M148.5 514v1M148.5 520v1M148.5 531v1M148.5 539v1M149.5 477v1M149.5 482v1M149.5 486v1M149.5 488v1M149.5 491v1M149.5 497v2M149.5 500v2M149.5 505v2M149.5 514v1M149.5 521v1M149.5 523v2M149.5 534v3M150.5 472v1M150.5 474v1M150.5 480v1M150.5 491v1M150.5 493v1M150.5 517v4M150.5 522v2M150.5 526v1M150.5 532v1M150.5 535v3M150.5 545v1M150.5 547v2M151.5 466v1M151.5 472v3M151.5 488v1M151.5 492v1M151.5 503v1M151.5 507v4M151.5 515v1M151.5 518v1M151.5 520v2M151.5 528v1M151.5 531v2M151.5 538v1M151.5 541v1M151.5 543v1M152.5 471v1M152.5 473v1M152.5 477v3M152.5 481v1M152.5 485v1M152.5 489v1M152.5 491v3M152.5 502v2M152.5 505v4M152.5 511v1M152.5 513v2M152.5 516v1M152.5 529v1M152.5 531v1M152.5 539v2M152.5 543v1M153.5 479v2M153.5 487v1M153.5 489v2M153.5 514v1M153.5 539v2M154.5 478v3M154.5 490v2M154.5 493v2M154.5 496v5M154.5 523v1M154.5 525v2M154.5 533v1M154.5 535v3M154.5 544v3M155.5 466v1M155.5 471v1M155.5 478v1M155.5 481v1M155.5 483v1M155.5 489v1M155.5 492v1M155.5 494v1M155.5 500v1M155.5 519v2M155.5 522v1M155.5 528v1M155.5 532v1M155.5 537v1M155.5 544v2M155.5 547v2M156.5 473v1M156.5 482v1M156.5 491v1M156.5 501v1M156.5 503v2M156.5 511v5M156.5 518v1M156.5 520v2M156.5 529v2M156.5 539v5M156.5 547v1M157.5 467v1M157.5 470v1M157.5 474v1M157.5 479v1M157.5 482v1M157.5 484v1M157.5 486v1M157.5 489v2M157.5 502v3M157.5 509v1M157.5 516v1M157.5 519v1M157.5 528v1M157.5 530v2M157.5 539v1M157.5 541v3M158.5 476v1M158.5 487v1M158.5 490v1M158.5 500v1M158.5 523v1M158.5 532v1M158.5 535v2M158.5 538v1M158.5 544v1M158.5 546v1M159.5 465v1M159.5 469v1M159.5 473v1M159.5 478v1M159.5 483v2M159.5 488v3M159.5 494v1M159.5 500v2M159.5 523v3M159.5 532v1M159.5 534v1M159.5 545v1M159.5 547v1M159.5 549v1M160.5 466v1M160.5 475v1M160.5 478v1M160.5 493v1M160.5 505v1M160.5 509v2M160.5 517v1M160.5 525v1M160.5 528v1M160.5 538v1M160.5 542v1M160.5 547v3M161.5 469v2M161.5 479v1M161.5 482v3M161.5 487v2M161.5 491v1M161.5 502v3M161.5 509v1M161.5 513v2M161.5 516v1M161.5 528v4M161.5 539v1M162.5 467v2M162.5 471v2M163.5 467v1M163.5 482v3M163.5 494v2M163.5 505v1M163.5 516v1M163.5 523v1M163.5 532v1M163.5 534v1M163.5 536v2M163.5 544v1M163.5 546v1M164.5 466v1M164.5 472v1M164.5 475v2M164.5 483v2M164.5 491v3M164.5 499v1M164.5 517v1M164.5 520v1M164.5 522v1M164.5 524v3M164.5 533v1M164.5 536v1M164.5 546v1M165.5 466v1M165.5 470v1M165.5 474v1M165.5 477v1M165.5 502v2M165.5 505v1M165.5 509v1M165.5 512v1M165.5 520v2M165.5 529v1M165.5 531v1M165.5 542v2M166.5 468v1M166.5 470v1M166.5 479v1M166.5 484v1M166.5 489v2M166.5 502v1M166.5 505v1M166.5 511v1M166.5 514v1M166.5 529v2M167.5 467v1M167.5 470v2M167.5 481v2M167.5 484v1M167.5 489v2M167.5 529v2M167.5 541v1M168.5 470v1M168.5 473v1M168.5 476v1M168.5 484v1M168.5 500v2M168.5 523v1M168.5 534v3M168.5 538v1M168.5 544v3M169.5 475v1M169.5 491v1M169.5 500v2M169.5 517v1M169.5 523v1M169.5 525v2M169.5 532v1M169.5 534v2M169.5 546v3M170.5 466v1M170.5 471v1M170.5 473v1M170.5 479v2M170.5 492v2M170.5 507v1M170.5 509v1M170.5 511v1M170.5 513v2M170.5 516v1M170.5 518v1M170.5 547v1M171.5 467v1M171.5 470v1M171.5 481v1M171.5 483v2M171.5 488v1M171.5 492v1M171.5 504v4M171.5 509v2M171.5 513v2M171.5 518v1M171.5 528v3M171.5 539v4M172.5 467v2M172.5 471v2M172.5 480v3M172.5 486v1M172.5 505v1M172.5 508v2M172.5 528v1M172.5 539v1M172.5 541v1M173.5 539v2M173.5 542v1M174.5 460v1M174.5 479v1M174.5 495v1M174.5 497v1M174.5 499v1M174.5 524v1M174.5 526v1M174.5 533v2M174.5 538v1M174.5 544v2M175.5 472v3M175.5 477v1M175.5 492v2M175.5 501v1M175.5 517v5M175.5 536v2M175.5 544v2M175.5 548v1M176.5 472v6M176.5 493v1M176.5 501v1M176.5 506v1M176.5 509v1M176.5 512v2M176.5 516v1M176.5 518v1M176.5 520v1M176.5 531v1M176.5 538v1M176.5 541v2M177.5 473v2M177.5 485v3M177.5 491v1M177.5 505v3M177.5 510v1M177.5 512v1M177.5 515v1M177.5 528v4M177.5 539v5M178.5 467v3M178.5 471v1M178.5 474v1M178.5 479v1M178.5 482v1M178.5 484v3M178.5 488v1M178.5 491v1M178.5 502v1M178.5 527v1M178.5 540v4M179.5 468v1M179.5 477v2M179.5 487v2M179.5 497v1M179.5 528v1M179.5 532v1M179.5 536v1M179.5 538v1M179.5 546v1M180.5 466v1M180.5 471v1M180.5 473v1M180.5 487v3M180.5 494v1M180.5 520v1M180.5 522v1M180.5 524v3M180.5 532v1M180.5 534v1M180.5 536v1M180.5 538v1M180.5 544v5M181.5 467v1M181.5 473v1M181.5 475v2M181.5 479v2M181.5 484v3M181.5 493v1M181.5 502v3M181.5 506v1M181.5 508v1M181.5 515v1M181.5 518v1M181.5 520v1M181.5 522v1M181.5 527v1M181.5 529v1M181.5 531v1M181.5 538v3M181.5 543v1M182.5 467v2M182.5 470v2M182.5 477v2M182.5 485v1M182.5 487v5M182.5 502v1M182.5 504v1M182.5 506v1M182.5 508v3M182.5 513v2M182.5 542v2M183.5 469v3M183.5 481v3M183.5 485v2M183.5 489v1M183.5 491v1M183.5 505v1M183.5 516v1M183.5 527v1M183.5 539v1M184.5 469v2M184.5 474v1M184.5 477v1M184.5 482v1M184.5 485v2M184.5 489v1M184.5 491v1M184.5 496v5M184.5 511v1M184.5 527v1M184.5 532v1M184.5 534v2M184.5 537v1M184.5 544v1M185.5 472v3M185.5 476v1M185.5 479v1M185.5 518v2M185.5 523v2M185.5 526v1M185.5 532v2M185.5 536v2M185.5 547v2M186.5 480v3M186.5 492v1M186.5 502v2M186.5 506v1M186.5 509v1M186.5 512v5M186.5 521v1M186.5 530v1M186.5 542v2M187.5 474v1M187.5 477v1M187.5 480v2M187.5 483v3M187.5 492v2M187.5 502v1M187.5 506v1M187.5 509v1M187.5 521v1M187.5 530v2M187.5 542v1M188.5 470v1M188.5 472v1M188.5 487v2M188.5 494v3M188.5 523v4M188.5 529v1M188.5 533v1M188.5 535v2M188.5 543v1M188.5 545v2M189.5 463v1M189.5 475v1M189.5 485v1M189.5 489v1M189.5 492v1M189.5 501v1M189.5 517v1M189.5 521v2M189.5 525v1M189.5 532v1M189.5 534v1M189.5 545v2M190.5 468v1M190.5 472v3M190.5 479v3M190.5 502v1M190.5 506v1M190.5 511v1M190.5 517v2M190.5 520v1M190.5 527v1M190.5 529v1M190.5 538v1M190.5 542v2M190.5 549v1M191.5 467v2M191.5 472v1M191.5 481v1M191.5 492v1M191.5 504v1M191.5 506v1M191.5 508v1M191.5 510v1M191.5 512v2M191.5 515v1M191.5 517v2M191.5 527v1M191.5 531v1M191.5 539v2M191.5 543v1M191.5 547v2M192.5 470v2M192.5 485v1M192.5 488v2M193.5 486v1M193.5 495v5M193.5 524v1M193.5 534v1M193.5 544v1M194.5 472v1M194.5 474v2M194.5 477v2M194.5 480v1M194.5 492v2M194.5 501v1M194.5 517v1M194.5 521v1M194.5 523v1M194.5 525v2M194.5 532v1M194.5 544v1M194.5 546v1M195.5 475v1M195.5 481v1M195.5 493v1M195.5 500v1M195.5 505v2M195.5 509v1M195.5 513v1M195.5 518v3M195.5 538v1M195.5 542v1M195.5 547v2M196.5 467v2M196.5 471v1M196.5 480v1M196.5 483v2M196.5 487v4M196.5 502v1M196.5 505v1M196.5 507v1M196.5 511v2M196.5 514v2M196.5 520v1M196.5 527v2M196.5 531v1M196.5 539v4M196.5 548v1M197.5 469v2M197.5 485v1M197.5 487v2M198.5 470v1M198.5 474v1M198.5 497v1M198.5 499v1M198.5 536v2M198.5 544v2M199.5 466v1M199.5 474v1M199.5 520v1M199.5 524v1M199.5 536v1M199.5 538v1M199.5 547v1M199.5 549v1M200.5 472v2M200.5 476v1M200.5 492v2M200.5 511v1M200.5 518v3M200.5 526v1M200.5 538v3M200.5 543v1M200.5 547v3M201.5 467v1M201.5 469v2M201.5 473v1M201.5 479v2M201.5 483v1M201.5 490v1M201.5 492v1M201.5 506v1M201.5 508v6M201.5 529v1M201.5 541v1M202.5 469v1M202.5 471v1M202.5 481v1M202.5 487v2M202.5 491v1M202.5 504v2M202.5 527v1M202.5 531v1M203.5 472v1M203.5 476v1M203.5 492v1M203.5 494v1M203.5 500v1M203.5 522v1M203.5 524v2M203.5 533v2M203.5 538v1M204.5 472v3M204.5 476v1M204.5 492v1M204.5 494v1M204.5 500v1M204.5 517v1M204.5 520v3M204.5 545v1M204.5 547v3M205.5 467v2M205.5 472v1M205.5 476v1M205.5 479v3M205.5 483v3M205.5 489v2M205.5 493v1M205.5 505v1M205.5 507v2M205.5 516v1M205.5 520v1M205.5 531v2M205.5 541v1M206.5 469v3M206.5 484v1M206.5 486v1M206.5 491v1M206.5 502v1M206.5 511v2M206.5 531v1M206.5 540v1M206.5 543v1M207.5 468v2M207.5 484v1M207.5 490v2M207.5 529v2M208.5 539v1M209.5 498v2M209.5 526v1M209.5 535v3M210.5 472v2M210.5 481v1M210.5 493v1M210.5 499v3M210.5 518v2M210.5 524v1M210.5 532v5M210.5 544v1M210.5 546v3M211.5 477v1M211.5 479v3M211.5 500v1M211.5 503v1M211.5 507v2M211.5 511v1M211.5 514v1M211.5 518v1M211.5 520v2M211.5 540v1M211.5 542v1M211.5 547v2M212.5 467v1M212.5 477v2M212.5 480v1M212.5 487v1M212.5 503v5M212.5 509v1M212.5 511v4M212.5 527v2M212.5 530v2M212.5 542v1M213.5 468v1M213.5 470v1M213.5 472v1M213.5 477v1M213.5 479v1M213.5 485v4M213.5 509v1M213.5 533v1M213.5 535v2M213.5 538v1M213.5 544v2M214.5 455v1M214.5 466v1M214.5 472v1M214.5 476v1M214.5 494v1M214.5 501v1M214.5 517v2M214.5 524v3M214.5 532v2M214.5 535v1M214.5 537v2M214.5 545v1M214.5 548v1M215.5 479v3M215.5 485v1M215.5 505v2M215.5 515v1M215.5 517v2M215.5 520v2M215.5 528v1M215.5 539v4M216.5 470v2M216.5 482v2M216.5 485v1M216.5 487v2M216.5 491v1M216.5 503v2M216.5 506v3M216.5 511v1M216.5 513v2M216.5 529v2M217.5 469v2M217.5 475v1M217.5 477v2M217.5 508v1M217.5 512v1M218.5 473v1M218.5 478v1M218.5 492v1M218.5 494v1M218.5 500v1M218.5 522v2M218.5 525v1M218.5 533v2M218.5 536v2M218.5 542v1M218.5 544v1M218.5 546v1M219.5 472v1M219.5 474v3M219.5 493v1M219.5 500v1M219.5 518v1M219.5 521v1M219.5 524v1M219.5 533v3M219.5 545v2M220.5 467v1M220.5 471v1M220.5 481v1M220.5 483v1M220.5 488v2M220.5 492v1M220.5 502v1M220.5 504v2M220.5 507v1M220.5 510v1M220.5 515v2M220.5 520v2M220.5 529v1M221.5 468v1M221.5 477v1M221.5 484v4M221.5 489v1M221.5 491v1M221.5 493v1M221.5 505v1M221.5 507v1M221.5 511v1M221.5 513v1M221.5 516v2M221.5 529v1M221.5 541v3M222.5 483v2M222.5 487v1M224.5 472v2M224.5 475v2M224.5 500v1M224.5 523v3M224.5 534v1M224.5 539v1M224.5 541v3M225.5 472v1M225.5 475v1M225.5 477v2M225.5 481v1M225.5 492v1M225.5 500v1M225.5 519v2M225.5 522v1M225.5 524v3M225.5 532v1M225.5 534v3M225.5 544v1M225.5 548v1M226.5 472v1M226.5 477v2M226.5 480v3M226.5 487v1M226.5 490v2M226.5 509v1M226.5 512v2M226.5 515v2M226.5 520v2M226.5 527v2M226.5 538v1M226.5 540v2M226.5 547v2M227.5 468v4M227.5 482v3M227.5 486v4M227.5 509v1M227.5 512v1M227.5 527v2M227.5 539v2M228.5 483v3M228.5 488v1M228.5 490v1M229.5 494v1M229.5 496v2M229.5 499v2M229.5 535v3M229.5 544v1M229.5 546v1M230.5 465v1M230.5 472v1M230.5 493v1M230.5 501v1M230.5 520v3M230.5 524v3M230.5 533v2M230.5 537v1M230.5 544v2M231.5 480v2M231.5 502v1M231.5 506v1M231.5 508v2M231.5 513v1M231.5 527v1M231.5 531v1M231.5 539v1M231.5 542v2M232.5 468v1M232.5 471v1M232.5 477v1M232.5 480v2M232.5 503v6M232.5 512v1M232.5 514v1M232.5 516v1M232.5 528v4M232.5 543v1M233.5 471v1M233.5 483v2M233.5 487v3M233.5 508v1M233.5 528v1M235.5 495v2M235.5 498v2M235.5 522v1M235.5 534v2M235.5 544v1M235.5 546v1M236.5 463v1M236.5 474v1M236.5 492v1M236.5 499v3M236.5 522v1M236.5 524v1M236.5 526v1M236.5 532v2M236.5 536v2M236.5 544v6M237.5 475v1M237.5 477v4M237.5 483v2M237.5 505v1M237.5 508v1M237.5 517v5M237.5 539v3M237.5 547v2M238.5 469v3M238.5 477v2M238.5 481v1M238.5 484v1M238.5 502v5M238.5 508v3M238.5 512v4M238.5 528v2M240.5 476v1M240.5 494v1M240.5 500v2M240.5 524v1M240.5 539v1M240.5 545v1M241.5 473v1M241.5 476v1M241.5 493v1M241.5 517v2M241.5 520v1M241.5 544v2M241.5 547v1M242.5 472v2M242.5 476v1M242.5 483v2M242.5 488v2M242.5 503v1M242.5 505v2M242.5 508v1M242.5 510v2M242.5 515v1M242.5 521v1M242.5 528v1M242.5 538v3M242.5 548v1M243.5 469v1M243.5 484v3M243.5 490v1M243.5 515v1M244.5 470v1M244.5 483v3M244.5 489v1M244.5 507v1M245.5 496v1M245.5 499v1M245.5 525v1M245.5 544v2M246.5 472v2M246.5 476v1M246.5 493v1M246.5 500v1M246.5 518v1M246.5 521v6M246.5 544v4M246.5 549v1M247.5 472v1M247.5 478v1M247.5 493v1M247.5 520v1M247.5 540v2M247.5 548v1M248.5 470v2M248.5 479v2M248.5 484v1M248.5 487v1M248.5 490v2M248.5 502v3M248.5 506v1M248.5 509v3M248.5 513v2M248.5 516v1M248.5 527v1M248.5 529v2M248.5 543v1M250.5 498v1M250.5 535v3M250.5 544v1M250.5 546v1M251.5 472v1M251.5 474v3M251.5 492v1M251.5 500v1M251.5 517v1M251.5 520v4M251.5 526v1M251.5 532v1M251.5 535v1M251.5 537v1M251.5 544v5M252.5 468v1M252.5 477v1M252.5 479v1M252.5 481v1M252.5 489v2M252.5 502v1M252.5 507v1M252.5 510v5M252.5 516v1M252.5 527v3M252.5 539v1M252.5 543v1M252.5 547v2M253.5 469v1M253.5 471v1M253.5 482v1M253.5 484v3M253.5 489v3M253.5 502v2M253.5 507v1M253.5 512v1M253.5 514v3M253.5 529v2M254.5 485v2M255.5 476v1M255.5 500v2M255.5 522v2M255.5 525v1M255.5 532v2M255.5 538v1M256.5 472v1M256.5 474v1M256.5 476v3M256.5 481v1M256.5 492v1M256.5 494v1M256.5 501v1M256.5 520v1M256.5 522v3M256.5 536v2M256.5 544v2M256.5 547v1M257.5 470v2M257.5 477v1M257.5 479v3M257.5 484v1M257.5 486v1M257.5 490v2M257.5 502v2M257.5 505v6M257.5 514v3M257.5 521v1M257.5 527v3M257.5 539v1M257.5 542v1M258.5 470v1M258.5 486v5M258.5 511v4M260.5 541v1M261.5 472v2M261.5 475v1M261.5 501v1M261.5 522v3M261.5 526v1M261.5 532v3M261.5 538v1M262.5 473v1M262.5 476v3M262.5 481v1M262.5 492v2M262.5 518v1M262.5 521v2M262.5 536v2M262.5 545v3M262.5 549v1M263.5 469v2M263.5 477v2M263.5 481v1M263.5 483v1M263.5 487v1M263.5 489v2M263.5 492v1M263.5 502v6M263.5 510v2M263.5 513v1M263.5 516v1M263.5 520v1M263.5 528v1M263.5 539v1M263.5 543v1M264.5 477v2M264.5 484v1M264.5 487v1M264.5 489v2M264.5 503v4M264.5 509v2M264.5 512v2M264.5 528v3M265.5 491v1M265.5 539v1M266.5 473v1M266.5 475v2M266.5 493v1M266.5 500v2M266.5 523v1M266.5 525v2M266.5 533v1M266.5 542v1M266.5 544v1M267.5 472v1M267.5 474v4M267.5 479v1M267.5 492v1M267.5 494v1M267.5 500v1M267.5 517v2M267.5 520v1M267.5 537v1M267.5 544v5M268.5 469v2M268.5 476v2M268.5 479v3M268.5 486v3M268.5 493v1M268.5 503v2M268.5 506v3M268.5 510v1M268.5 512v3M268.5 517v1M268.5 519v1M268.5 521v1M268.5 531v1M268.5 538v3M268.5 542v2M268.5 547v2M269.5 483v1M269.5 485v2M269.5 489v1M269.5 503v1M269.5 509v1M269.5 513v2M269.5 527v1M272.5 492v1M272.5 494v2M272.5 499v1M272.5 522v1M272.5 545v2M273.5 473v1M273.5 475v1M273.5 492v3M273.5 500v1M273.5 517v1M273.5 521v1M273.5 523v1M273.5 526v1M273.5 533v2M273.5 537v1M273.5 544v1M273.5 549v1M274.5 469v1M274.5 478v3M274.5 487v1M274.5 489v2M274.5 502v2M274.5 509v2M274.5 512v5M274.5 520v1M274.5 529v1M274.5 538v2M274.5 542v2M275.5 470v2M275.5 484v1M275.5 486v1M275.5 488v4M275.5 510v3M275.5 515v2M275.5 527v2M276.5 471v1M277.5 474v1M277.5 476v1M277.5 494v1M277.5 496v1M277.5 498v2M277.5 524v1M277.5 526v1M277.5 536v2M277.5 540v1M277.5 545v2M278.5 472v1M278.5 474v1M278.5 492v1M278.5 500v1M278.5 518v1M278.5 522v1M278.5 525v1M278.5 534v4M278.5 546v1M278.5 549v1M279.5 478v1M279.5 507v1M279.5 518v1M279.5 527v1M279.5 539v1M279.5 541v1M279.5 547v1M280.5 469v1M280.5 482v1M280.5 488v4M280.5 502v4M280.5 507v1M280.5 510v1M280.5 514v3M280.5 527v1M280.5 530v2M281.5 483v1M281.5 513v1M282.5 461v1M282.5 494v2M282.5 498v1M282.5 500v1M282.5 532v1M282.5 535v3M283.5 473v1M283.5 476v2M283.5 518v1M283.5 524v3M283.5 532v1M283.5 535v1M283.5 545v1M283.5 548v1M284.5 471v1M284.5 477v1M284.5 479v1M284.5 482v4M284.5 489v2M284.5 502v2M284.5 505v1M284.5 507v2M284.5 514v6M284.5 539v5M285.5 470v1M285.5 482v1M285.5 484v3M285.5 488v1M285.5 491v1M285.5 507v2M285.5 512v1M286.5 487v1M286.5 490v1M288.5 473v1M288.5 475v1M288.5 493v1M288.5 500v1M288.5 522v1M288.5 524v2M288.5 537v1M288.5 544v1M289.5 472v3M289.5 480v1M289.5 492v2M289.5 501v1M289.5 517v1M289.5 520v1M289.5 533v1M289.5 535v2M289.5 538v1M289.5 544v3M290.5 483v1M290.5 504v3M290.5 508v3M290.5 513v2M290.5 529v3M290.5 539v5M290.5 548v1M291.5 470v1M291.5 482v1M291.5 487v2M291.5 491v1M294.5 492v1M294.5 501v1M294.5 522v1M294.5 526v1M294.5 538v1M294.5 543v1M294.5 545v1M295.5 472v1M295.5 478v1M295.5 492v2M295.5 520v1M295.5 533v1M295.5 537v1M295.5 544v5M296.5 482v2M296.5 486v1M296.5 490v2M296.5 503v2M296.5 507v1M296.5 509v1M296.5 514v2M296.5 528v1M296.5 531v1M296.5 539v3M296.5 543v1M297.5 491v1M297.5 527v2M300.5 475v1M300.5 494v1M300.5 525v1M300.5 544v1M301.5 473v3M301.5 477v2M301.5 480v1M301.5 493v1M301.5 517v5M301.5 536v1M301.5 538v1M301.5 545v1M301.5 548v1M302.5 470v2M302.5 477v4M302.5 487v1M302.5 491v1M302.5 502v1M302.5 504v4M302.5 509v1M302.5 511v2M302.5 514v3M302.5 519v1M302.5 527v2M302.5 530v2M302.5 539v3M303.5 470v2M303.5 482v3M303.5 486v1M303.5 489v3M303.5 506v1M303.5 513v1M305.5 533v4M305.5 545v1M306.5 472v2M306.5 475v1M306.5 493v1M306.5 517v2M306.5 520v2M306.5 536v1M306.5 544v4M307.5 469v1M307.5 478v4M307.5 484v1M307.5 489v1M307.5 504v2M307.5 507v1M307.5 509v1M307.5 512v1M307.5 514v4M307.5 527v1M307.5 530v1M307.5 538v1M307.5 540v3M307.5 547v2M308.5 470v2M308.5 480v2M308.5 483v1M308.5 487v2M308.5 491v1M308.5 503v7M308.5 511v6M309.5 471v1M310.5 492v1M310.5 494v1M310.5 497v1M310.5 501v1M310.5 525v1M310.5 533v2M310.5 536v1M310.5 545v2M311.5 473v1M311.5 519v2M311.5 522v2M311.5 525v1M311.5 532v4M311.5 545v2M311.5 549v1M312.5 478v1M312.5 480v2M312.5 502v1M312.5 504v1M312.5 508v5M312.5 515v4M312.5 520v2M312.5 530v2M312.5 538v1M312.5 542v2M312.5 547v2M313.5 482v2M313.5 485v2M313.5 489v1M313.5 502v1M313.5 504v1M313.5 506v1M313.5 508v2M313.5 511v3M313.5 515v1M313.5 528v2M313.5 531v1M314.5 487v1M314.5 490v1M315.5 493v1M315.5 522v1M315.5 525v2M315.5 535v1M316.5 472v1M316.5 476v1M316.5 492v2M316.5 501v1M316.5 517v2M316.5 526v1M316.5 532v1M316.5 534v4M316.5 545v1M316.5 547v1M316.5 549v1M317.5 470v1M317.5 478v1M317.5 480v2M317.5 483v1M317.5 487v2M317.5 502v1M317.5 509v1M317.5 512v1M317.5 514v3M317.5 531v1M317.5 539v2M318.5 471v1M318.5 482v1M318.5 486v1M318.5 489v2M321.5 472v1M321.5 492v2M321.5 500v1M321.5 523v1M321.5 525v1M321.5 533v2M321.5 538v1M321.5 541v2M322.5 474v3M322.5 478v3M322.5 492v1M322.5 517v2M322.5 522v2M322.5 537v1M322.5 546v4M323.5 477v2M323.5 481v1M323.5 484v1M323.5 487v1M323.5 502v6M323.5 510v1M323.5 512v2M323.5 515v2M323.5 519v1M323.5 527v1M323.5 530v2M323.5 538v1M323.5 540v2M323.5 543v1M324.5 485v1M324.5 489v2M327.5 473v2M327.5 500v2M327.5 522v1M327.5 533v2M328.5 473v2M328.5 478v1M328.5 480v1M328.5 493v1M328.5 517v1M328.5 519v2M328.5 536v1M328.5 544v2M329.5 481v1M329.5 484v1M329.5 486v1M329.5 489v1M329.5 491v1M329.5 502v5M329.5 508v2M329.5 512v1M329.5 514v3M329.5 527v2M329.5 539v2M329.5 542v1M330.5 484v1M330.5 491v1M330.5 503v1M330.5 505v4M330.5 510v7M330.5 527v1M332.5 499v1M332.5 535v1M332.5 537v1M332.5 544v1M333.5 473v1M333.5 476v1M333.5 493v1M333.5 517v2M333.5 522v2M333.5 533v2M333.5 546v4M334.5 470v1M334.5 506v1M334.5 521v1M334.5 530v1M334.5 538v2M334.5 541v1M334.5 547v1M335.5 482v1M335.5 485v1M335.5 488v4M335.5 504v3M335.5 529v2M338.5 474v1M338.5 500v1M338.5 522v4M338.5 532v5M338.5 544v3M339.5 473v2M339.5 476v1M339.5 517v2M339.5 535v1M339.5 537v1M339.5 544v2M339.5 547v2M340.5 478v1M340.5 480v1M340.5 484v2M340.5 487v2M340.5 491v1M340.5 502v2M340.5 506v5M340.5 513v1M340.5 515v1M340.5 517v1M340.5 520v1M340.5 527v3M340.5 531v1M340.5 538v1M340.5 548v1M341.5 482v1M341.5 484v2M341.5 487v5M341.5 502v3M341.5 513v1M341.5 516v1M343.5 474v1M343.5 501v1M343.5 523v1M343.5 532v1M343.5 535v1M343.5 539v1M343.5 544v1M344.5 472v1M344.5 477v1M344.5 492v1M344.5 517v3M344.5 521v1M344.5 525v2M344.5 534v1M344.5 538v1M344.5 546v1M345.5 471v1M345.5 477v1M345.5 480v2M345.5 485v6M345.5 503v1M345.5 506v2M345.5 510v2M345.5 514v2M345.5 518v1M345.5 527v5M345.5 538v2M345.5 541v2M346.5 484v1M346.5 489v1M346.5 507v1M346.5 516v1M346.5 529v1M349.5 474v1M349.5 492v1M349.5 497v2M349.5 523v1M349.5 533v1M349.5 537v1M349.5 545v1M350.5 472v1M350.5 475v3M350.5 479v2M350.5 493v1M350.5 520v3M350.5 536v2M350.5 544v1M350.5 547v3M351.5 478v1M351.5 489v3M351.5 503v4M351.5 511v1M351.5 513v1M351.5 517v1M351.5 519v1M351.5 527v2M351.5 530v1M351.5 543v1M351.5 547v2M352.5 482v3M352.5 486v1M352.5 488v1M352.5 503v1M352.5 512v3M352.5 527v2M352.5 530v2M354.5 499v1M354.5 501v1M354.5 523v1M354.5 526v1M354.5 537v1M354.5 544v1M354.5 546v1M355.5 474v1M355.5 492v1M355.5 501v1M355.5 520v1M355.5 522v2M355.5 525v1M355.5 533v1M355.5 535v1M355.5 544v2M355.5 547v2M356.5 469v1M356.5 479v1M356.5 481v2M356.5 504v2M356.5 510v3M356.5 519v1M356.5 527v1M356.5 539v1M356.5 543v1M356.5 547v1M357.5 482v1M357.5 488v4M357.5 503v6M357.5 510v3M357.5 516v1M357.5 527v2M357.5 531v1M360.5 461v1M360.5 474v1M360.5 496v4M360.5 501v1M360.5 523v1M360.5 526v1M360.5 535v3M360.5 544v2M361.5 474v4M361.5 492v1M361.5 500v1M361.5 522v5M361.5 534v3M361.5 547v1M362.5 477v2M362.5 480v2M362.5 483v1M362.5 489v2M362.5 502v1M362.5 505v1M362.5 510v1M362.5 514v2M362.5 519v1M362.5 521v1M362.5 527v3M362.5 538v1M362.5 540v1M362.5 547v1M363.5 482v3M363.5 486v4M363.5 502v1M363.5 505v2M363.5 509v4M363.5 515v2M363.5 529v3M366.5 473v2M366.5 493v4M366.5 498v2M366.5 532v2M366.5 536v2M366.5 544v3M367.5 473v1M367.5 475v1M367.5 517v1M367.5 525v1M367.5 533v3M367.5 538v1M367.5 544v1M368.5 481v1M368.5 489v1M368.5 502v3M368.5 512v1M368.5 514v3M368.5 518v4M368.5 529v3M368.5 540v3M369.5 478v1M369.5 482v2M369.5 485v2M369.5 490v1M369.5 502v1M369.5 511v1M369.5 515v2M369.5 527v2M369.5 530v2M371.5 473v4M371.5 492v2M371.5 500v1M371.5 522v3M371.5 533v1M371.5 543v1M371.5 545v1M372.5 474v1M372.5 479v3M372.5 492v1M372.5 517v1M372.5 519v3M372.5 536v2M372.5 545v1M372.5 547v1M373.5 478v1M373.5 482v1M373.5 486v1M373.5 489v1M373.5 502v1M373.5 509v1M373.5 511v1M373.5 513v2M373.5 527v2M373.5 541v2M374.5 486v1M374.5 502v1M377.5 497v3M377.5 523v2M377.5 526v1M377.5 534v1M377.5 544v1M378.5 474v1M378.5 481v1M378.5 520v1M378.5 525v1M378.5 532v1M378.5 535v3M378.5 544v2M378.5 547v1M379.5 478v1M379.5 486v1M379.5 504v1M379.5 506v1M379.5 510v5M379.5 519v1M379.5 527v1M379.5 529v1M379.5 538v2M379.5 542v2M379.5 547v1M380.5 482v2M380.5 485v1M380.5 487v1M380.5 489v3M380.5 503v1M380.5 507v2M380.5 515v2M380.5 528v1M380.5 530v1M383.5 492v2M383.5 501v1M383.5 522v5M383.5 533v2M383.5 539v3M384.5 477v2M384.5 517v2M384.5 521v1M384.5 535v3M384.5 544v1M384.5 549v1M385.5 483v1M385.5 486v1M385.5 488v1M385.5 490v1M385.5 504v1M385.5 511v1M385.5 527v1M385.5 529v3M385.5 539v2M385.5 543v1M386.5 484v1M386.5 490v1M389.5 472v1M389.5 495v3M389.5 499v2M389.5 526v1M389.5 533v1M389.5 535v1M390.5 473v1M390.5 476v1M390.5 500v2M390.5 521v3M390.5 526v1M390.5 533v1M390.5 537v1M390.5 544v1M390.5 546v3M391.5 477v1M391.5 480v2M391.5 485v2M391.5 491v1M391.5 514v1M391.5 516v1M391.5 518v3M391.5 529v2M391.5 538v2M391.5 542v2M392.5 483v1M392.5 488v1M392.5 490v1M392.5 502v5M392.5 509v1M392.5 513v1M392.5 527v2M392.5 530v2M395.5 474v3M395.5 500v2M395.5 522v2M395.5 525v1M395.5 534v1M395.5 537v1M395.5 543v1M396.5 478v2M396.5 517v3M396.5 532v1M396.5 535v1M396.5 537v1M396.5 547v2M397.5 484v1M397.5 489v2M397.5 505v5M397.5 511v2M397.5 530v1M397.5 538v1M397.5 542v1M398.5 483v1M401.5 473v2M401.5 476v1M401.5 492v1M401.5 494v1M401.5 499v2M401.5 522v2M401.5 525v1M401.5 535v1M401.5 545v2M402.5 478v1M402.5 520v2M402.5 533v5M402.5 547v2M403.5 478v2M403.5 481v1M403.5 485v1M403.5 488v1M403.5 503v1M403.5 505v4M403.5 511v2M403.5 520v1M403.5 527v1M403.5 530v1M403.5 538v6M404.5 483v1M404.5 489v2M407.5 474v1M407.5 493v2M407.5 522v2M407.5 525v1M407.5 534v1M407.5 536v2M407.5 544v1M407.5 546v1M408.5 475v3M408.5 481v1M408.5 492v1M408.5 517v1M408.5 519v2M408.5 526v1M408.5 532v1M408.5 535v1M408.5 544v1M408.5 547v2M409.5 482v1M409.5 485v3M409.5 489v1M409.5 503v2M409.5 506v1M409.5 510v3M409.5 514v1M409.5 516v1M409.5 519v1M409.5 527v3M409.5 531v1M409.5 543v1M410.5 483v2M410.5 489v3M410.5 505v1M410.5 507v2M410.5 513v2M410.5 529v2M413.5 474v2M413.5 492v2M413.5 525v1M413.5 535v2M413.5 545v1M414.5 480v2M414.5 518v2M414.5 522v1M414.5 524v1M414.5 526v1M414.5 533v5M414.5 545v1M414.5 547v1M415.5 479v1M415.5 481v1M415.5 487v4M415.5 502v4M415.5 512v2M415.5 518v1M415.5 520v1M415.5 541v1M415.5 548v1M416.5 482v1M416.5 508v1M416.5 510v1M416.5 514v1M416.5 516v1M416.5 543v1M420.5 500v1M420.5 523v3M420.5 532v1M420.5 545v1M421.5 477v2M421.5 517v1M421.5 519v2M421.5 535v3M421.5 545v1M421.5 547v2M422.5 486v3M422.5 504v5M422.5 510v2M422.5 513v2M422.5 516v1M422.5 529v1M422.5 531v1M422.5 538v1M422.5 542v1M422.5 546v1M423.5 542v1M426.5 493v1M426.5 500v1M426.5 523v1M426.5 525v2M426.5 534v1M426.5 538v1M426.5 546v1M427.5 515v1M427.5 519v2M427.5 535v3M428.5 488v1M428.5 505v3M428.5 509v4M428.5 514v1M428.5 516v1M428.5 519v1M428.5 527v2M428.5 530v1M429.5 540v4M429.5 547v1M430.5 547v1M433.5 493v2M433.5 499v2M433.5 525v1M433.5 537v1M433.5 547v1M434.5 478v1M434.5 480v1M434.5 515v2M434.5 522v1M434.5 524v2M434.5 528v2M434.5 531v2M434.5 536v2M435.5 482v1M435.5 503v2M435.5 507v2M435.5 511v2M435.5 514v3M435.5 518v1M435.5 521v2M435.5 524v1M435.5 528v1M435.5 530v1M435.5 532v1M435.5 543v1M435.5 549v1M436.5 503v1M436.5 507v1M436.5 517v1M436.5 519v1M436.5 526v2M436.5 529v1M436.5 531v1M436.5 541v1M436.5 543v1M436.5 546v2M439.5 501v1M439.5 522v1M439.5 525v1M439.5 532v1M439.5 534v1M439.5 548v1M440.5 515v1M440.5 520v1M440.5 522v1M440.5 526v1M440.5 528v4M440.5 535v2M440.5 538v1M441.5 503v2M441.5 509v1M441.5 511v1M441.5 513v1M441.5 517v2M441.5 522v1M441.5 527v3M441.5 538v3M441.5 543v2M442.5 515v1M442.5 529v1M442.5 541v1M442.5 544v4M443.5 547v2M444.5 547v1M446.5 525v2M446.5 532v1M446.5 536v1M447.5 512v1M447.5 514v1M447.5 521v2M447.5 526v2M447.5 529v3M447.5 533v1M447.5 535v1M448.5 490v1M448.5 502v1M448.5 504v1M448.5 506v3M448.5 510v2M448.5 513v2M448.5 520v3M448.5 526v1M448.5 540v2M449.5 502v1M449.5 517v3M449.5 527v3M449.5 531v1M449.5 542v3M449.5 549v1M450.5 547v1M451.5 522v1M451.5 534v1M451.5 539v1M451.5 545v2M452.5 514v1M452.5 516v2M452.5 521v3M452.5 526v2M452.5 529v2M452.5 537v1M453.5 505v1M453.5 515v1M453.5 519v2M453.5 523v3M453.5 527v1M453.5 529v3M453.5 538v1M453.5 546v1M453.5 548v1M453.5 551v1M454.5 542v1M454.5 544v1M454.5 548v3M457.5 548v1M459.5 501v1M459.5 525v2M459.5 534v1M459.5 549v1M460.5 517v2M460.5 527v1M460.5 536v1M460.5 538v1M460.5 552v1M461.5 507v2M461.5 513v2M461.5 518v7M461.5 527v1M461.5 529v1M461.5 543v1M462.5 528v1M462.5 541v1M462.5 545v4M462.5 550v1M465.5 522v2M465.5 526v1M465.5 538v1M466.5 515v1M466.5 517v3M466.5 525v1M466.5 527v2M466.5 537v2M466.5 552v1M467.5 504v3M467.5 510v1M467.5 517v2M467.5 521v2M467.5 524v7M467.5 539v2M467.5 543v1M467.5 545v3M467.5 552v1M468.5 515v2M468.5 542v1M468.5 549v1M469.5 539v1M469.5 549v2M473.5 500v2M473.5 532v1M473.5 538v1M474.5 517v2M474.5 521v1M474.5 523v1M474.5 525v1M474.5 527v1M474.5 531v2M474.5 537v1M475.5 504v1M475.5 509v9M475.5 520v1M475.5 523v6M475.5 537v3M475.5 552v1M476.5 519v1M476.5 527v1M476.5 530v2M476.5 538v1M476.5 542v2M476.5 545v2M476.5 548v5M479.5 526v1M479.5 537v1M480.5 517v2M480.5 520v2M480.5 537v1M480.5 539v1M480.5 547v1M480.5 552v2M481.5 515v1M481.5 527v1M481.5 531v1M481.5 538v1M481.5 543v1M481.5 546v2M481.5 551v3M482.5 539v2M484.5 544v3M485.5 536v3M485.5 541v1M485.5 547v2M485.5 552v1M486.5 546v4M486.5 553v1M487.5 536v2M487.5 544v4M487.5 549v1M487.5 551v3M488.5 539v1M488.5 541v1M488.5 543v1M488.5 549v5M489.5 537v1M489.5 540v1M489.5 544v2M490.5 536v1M490.5 540v1M490.5 544v6M490.5 552v2M491.5 505v1M491.5 538v1M491.5 540v4M491.5 549v1M495.5 537v1M495.5 541v1M495.5 546v1M496.5 537v1M496.5 544v1M496.5 546v1M497.5 539v1M497.5 542v1M497.5 544v1M497.5 548v1M498.5 541v1M498.5 543v1M501.5 539v2M501.5 542v2M502.5 536v1M502.5 538v1M502.5 544v1M502.5 546v1M502.5 549v1M503.5 538v1M503.5 541v1M503.5 544v2M504.5 539v1M504.5 543v1M508.5 539v1M508.5 541v1M508.5 544v1M509.5 544v3M509.5 549v1M510.5 539v1M510.5 541v3M511.5 541v2M513.5 538v1M513.5 540v1M513.5 543v1M513.5 546v1M514.5 537v2M514.5 544v4M515.5 543v2M515.5 547v2M519.5 539v1M519.5 541v1M519.5 544v3M520.5 541v1M520.5 547v2M521.5 537v2M521.5 540v2M521.5 545v2M521.5 548v1M525.5 539v2M525.5 542v1M526.5 539v2M526.5 542v2M526.5 545v1M527.5 541v3M527.5 547v1M533.5 539v1M533.5 545v2M534.5 538v3M534.5 544v4M534.5 549v1M535.5 539v4M538.5 540v1M538.5 542v1M538.5 546v1M539.5 538v1M539.5 544v1M540.5 539v4M540.5 547v1M544.5 537v1M544.5 546v3M545.5 539v2M545.5 542v2M545.5 545v1M548.5 539v3M549.5 538v1M549.5 545v2M550.5 541v1M554.5 537v1M554.5 546v1M554.5 548v2M555.5 539v2M555.5 545v1M558.5 539v1M558.5 542v1M559.5 537v2M559.5 541v2M559.5 545v1M559.5 547v2M560.5 540v2M560.5 543v1M560.5 548v1" stroke="#1478dc" stroke-width="1" fill="none"/>
<path d="M115.5 492v1M115.5 494v2M115.5 497v1M115.5 501v1M115.5 522v2M115.5 535v1M115.5 541v1M115.5 545v1M116.5 465v1M116.5 472v5M116.5 479v1M116.5 481v1M116.5 494v1M116.5 501v1M116.5 521v2M116.5 532v1M116.5 534v1M116.5 541v1M116.5 544v1M116.5 546v3M117.5 466v2M117.5 469v1M117.5 471v2M117.5 477v3M117.5 481v1M117.5 486v1M117.5 492v2M117.5 503v1M117.5 506v1M117.5 508v3M117.5 518v3M117.5 527v3M117.5 541v1M117.5 547v1M118.5 482v1M118.5 484v2M118.5 487v1M118.5 491v1M118.5 511v1M119.5 467v1M119.5 482v1M119.5 485v1M119.5 511v1M119.5 531v1M121.5 472v1M121.5 494v1M121.5 500v1M121.5 523v1M121.5 525v1M121.5 533v2M122.5 466v1M122.5 473v2M122.5 494v1M122.5 517v2M122.5 520v2M122.5 524v1M122.5 526v1M122.5 533v2M122.5 545v2M122.5 548v1M123.5 470v1M123.5 475v1M123.5 479v1M123.5 481v1M123.5 487v2M123.5 503v2M123.5 506v1M123.5 508v1M123.5 513v1M123.5 515v1M123.5 521v1M123.5 527v3M123.5 531v1M123.5 540v1M123.5 543v1M124.5 470v5M124.5 476v1M124.5 482v1M124.5 486v1M124.5 488v1M124.5 491v1M124.5 502v1M124.5 505v1M124.5 507v2M124.5 522v3M124.5 528v1M124.5 531v2M124.5 541v1M125.5 466v1M125.5 475v1M125.5 477v1M125.5 479v2M125.5 493v1M125.5 521v1M125.5 538v1M125.5 542v1M125.5 544v1M125.5 547v2M126.5 467v1M126.5 474v1M126.5 477v4M126.5 484v1M126.5 486v1M126.5 491v1M126.5 502v1M126.5 507v1M126.5 512v1M126.5 528v2M126.5 540v1M126.5 543v1M127.5 468v3M127.5 479v1M127.5 481v2M127.5 484v1M127.5 490v2M127.5 503v2M127.5 507v2M127.5 515v2M127.5 528v1M127.5 531v1M127.5 540v1M127.5 542v2M128.5 482v1M129.5 473v2M129.5 476v1M129.5 494v1M129.5 500v2M129.5 532v3M129.5 538v5M130.5 466v1M130.5 472v4M130.5 492v2M130.5 501v1M130.5 517v2M130.5 520v1M130.5 538v1M130.5 544v1M131.5 466v2M131.5 471v1M131.5 478v2M131.5 486v3M131.5 490v2M131.5 493v1M131.5 504v1M131.5 509v3M131.5 514v1M131.5 539v2M131.5 542v1M132.5 469v2M132.5 482v3M132.5 489v2M133.5 482v1M133.5 485v1M133.5 490v1M134.5 472v1M134.5 476v1M134.5 494v1M134.5 501v1M134.5 522v1M134.5 526v1M134.5 533v1M134.5 540v2M135.5 466v1M135.5 476v2M135.5 481v1M135.5 492v1M135.5 517v1M135.5 519v4M135.5 525v1M135.5 532v1M135.5 538v1M135.5 547v1M136.5 470v1M136.5 475v1M136.5 477v1M136.5 479v2M136.5 485v2M136.5 488v3M136.5 503v8M136.5 512v1M136.5 514v2M136.5 518v1M136.5 521v1M136.5 527v2M136.5 531v1M136.5 539v2M137.5 467v1M137.5 471v1M137.5 482v4M137.5 487v1M137.5 490v1M137.5 502v1M137.5 506v1M137.5 514v1M137.5 543v1M138.5 467v1M139.5 473v3M139.5 493v1M139.5 524v1M140.5 477v1M140.5 481v1M140.5 546v1M141.5 466v1M141.5 470v1M141.5 475v4M141.5 485v1M141.5 487v1M141.5 505v3M141.5 509v2M141.5 515v1M141.5 527v2M141.5 531v1M141.5 539v2M142.5 467v1M142.5 470v2M142.5 482v1M142.5 489v3M142.5 541v1M143.5 543v1M145.5 472v2M145.5 492v1M145.5 494v1M145.5 500v1M145.5 525v1M145.5 538v1M146.5 475v1M146.5 480v1M146.5 492v2M146.5 517v4M146.5 537v1M146.5 544v1M147.5 466v1M147.5 469v3M147.5 478v2M147.5 481v1M147.5 487v1M147.5 490v1M147.5 505v1M147.5 508v2M147.5 513v1M147.5 515v2M147.5 520v1M147.5 531v1M147.5 542v1M148.5 491v1M149.5 472v4M149.5 493v1M149.5 522v1M149.5 525v2M149.5 532v1M149.5 538v1M150.5 473v1M150.5 475v2M150.5 478v2M150.5 481v1M150.5 492v1M150.5 521v1M150.5 525v1M150.5 538v1M151.5 467v2M151.5 478v4M151.5 487v1M151.5 489v1M151.5 493v1M151.5 505v2M151.5 511v3M151.5 529v2M151.5 539v2M151.5 542v1M152.5 467v4M152.5 482v1M152.5 484v1M152.5 486v1M152.5 490v1M152.5 515v1M154.5 492v1M154.5 501v1M154.5 524v1M154.5 532v1M155.5 475v3M155.5 480v1M155.5 493v1M155.5 501v1M155.5 526v1M155.5 533v2M156.5 467v2M156.5 471v1M156.5 484v1M156.5 486v1M156.5 502v1M156.5 505v3M156.5 527v2M157.5 468v1M157.5 471v1M157.5 480v1M157.5 483v1M157.5 485v1M157.5 488v1M157.5 491v1M157.5 510v1M157.5 527v1M158.5 475v1M158.5 494v1M158.5 501v1M158.5 522v1M158.5 524v3M158.5 534v1M158.5 545v1M159.5 472v1M159.5 474v4M159.5 493v1M159.5 519v2M159.5 522v1M159.5 526v1M159.5 533v1M159.5 537v2M160.5 480v2M160.5 487v1M160.5 491v1M160.5 502v1M160.5 506v1M160.5 512v1M160.5 515v1M160.5 518v1M160.5 527v1M160.5 530v1M160.5 539v2M161.5 467v2M161.5 471v1M161.5 489v1M161.5 508v1M161.5 511v1M161.5 527v1M163.5 472v1M163.5 491v1M163.5 499v1M163.5 501v1M163.5 522v1M163.5 524v1M163.5 533v1M163.5 535v1M163.5 538v1M163.5 545v1M164.5 473v1M164.5 477v1M164.5 500v2M164.5 518v2M164.5 544v2M164.5 547v2M165.5 467v1M165.5 469v1M165.5 471v1M165.5 478v5M165.5 484v5M165.5 490v1M165.5 506v3M165.5 511v1M165.5 514v1M165.5 528v1M165.5 530v1M165.5 539v1M165.5 541v1M166.5 467v1M166.5 471v1M166.5 482v2M166.5 485v4M166.5 491v1M166.5 513v1M166.5 528v1M168.5 472v1M168.5 475v1M168.5 492v1M168.5 494v1M168.5 522v1M168.5 525v2M168.5 532v2M168.5 540v1M169.5 466v1M169.5 472v2M169.5 476v1M169.5 518v3M169.5 522v1M169.5 524v1M169.5 533v1M169.5 536v1M169.5 538v1M169.5 544v1M170.5 467v2M170.5 478v1M170.5 481v1M170.5 486v1M170.5 488v1M170.5 490v1M170.5 502v1M170.5 504v1M170.5 506v1M170.5 508v1M170.5 510v1M170.5 512v1M170.5 515v1M170.5 521v1M170.5 527v4M170.5 539v5M170.5 548v1M171.5 469v1M171.5 482v1M171.5 485v3M171.5 489v3M171.5 527v1M171.5 531v1M172.5 485v1M172.5 491v1M174.5 473v1M174.5 475v2M174.5 492v1M174.5 494v1M174.5 500v2M174.5 523v1M174.5 525v1M174.5 532v1M174.5 535v2M175.5 475v2M175.5 478v1M175.5 480v1M176.5 479v3M176.5 488v1M176.5 502v4M176.5 507v1M176.5 510v2M176.5 514v1M176.5 527v2M176.5 539v2M176.5 543v1M177.5 467v5M177.5 482v1M177.5 489v2M177.5 502v1M177.5 509v1M177.5 527v1M178.5 483v1M178.5 489v2M178.5 539v1M179.5 474v1M179.5 499v1M179.5 501v1M179.5 522v2M179.5 526v1M179.5 533v3M179.5 542v1M179.5 545v1M180.5 474v1M180.5 476v1M180.5 492v2M180.5 500v1M180.5 519v1M180.5 523v1M181.5 468v2M181.5 471v1M181.5 477v2M181.5 481v1M181.5 483v1M181.5 488v1M181.5 491v1M181.5 505v1M181.5 507v1M181.5 511v2M181.5 514v1M181.5 517v1M181.5 521v1M181.5 528v1M181.5 541v2M182.5 469v1M182.5 482v1M182.5 512v1M183.5 490v1M184.5 490v1M184.5 494v2M184.5 522v1M184.5 533v1M184.5 536v1M184.5 538v1M184.5 542v2M184.5 545v2M185.5 478v1M185.5 480v1M185.5 492v1M185.5 517v1M185.5 520v2M185.5 525v1M186.5 471v1M186.5 478v1M186.5 504v1M186.5 507v2M186.5 510v2M186.5 528v2M186.5 531v1M186.5 538v4M187.5 467v2M187.5 470v1M187.5 488v2M187.5 491v1M187.5 503v2M187.5 508v1M187.5 511v6M187.5 529v1M188.5 492v2M188.5 501v1M188.5 522v1M188.5 532v1M188.5 534v1M188.5 538v2M189.5 466v1M189.5 472v2M189.5 479v1M189.5 493v1M189.5 500v1M189.5 518v1M189.5 523v2M189.5 533v1M189.5 537v1M190.5 467v1M190.5 469v2M190.5 477v2M190.5 483v1M190.5 503v1M190.5 505v1M190.5 507v1M190.5 509v1M190.5 514v1M190.5 519v1M190.5 528v1M190.5 531v1M190.5 539v2M191.5 470v1M191.5 482v4M191.5 505v1M191.5 507v1M191.5 511v1M191.5 514v1M191.5 516v1M191.5 528v3M192.5 490v1M193.5 472v1M193.5 474v2M193.5 492v3M193.5 501v1M193.5 535v1M193.5 537v1M194.5 473v1M194.5 476v1M194.5 518v1M194.5 535v3M195.5 467v2M195.5 471v1M195.5 477v4M195.5 482v2M195.5 487v2M195.5 490v2M195.5 502v3M195.5 510v1M195.5 512v1M195.5 514v4M195.5 531v1M195.5 539v3M195.5 543v1M196.5 469v2M196.5 486v1M196.5 491v1M196.5 508v1M196.5 529v2M198.5 473v1M198.5 492v1M198.5 494v1M198.5 501v1M198.5 525v2M198.5 532v1M198.5 546v1M199.5 472v2M199.5 475v1M199.5 477v2M199.5 481v1M199.5 493v1M199.5 500v2M199.5 517v1M199.5 519v1M199.5 522v1M199.5 525v2M200.5 467v1M200.5 477v1M200.5 480v2M200.5 484v1M200.5 490v1M200.5 504v1M200.5 508v1M200.5 512v5M200.5 521v1M200.5 528v4M200.5 541v2M201.5 468v1M201.5 471v1M201.5 481v1M201.5 484v3M201.5 488v2M201.5 503v3M201.5 514v3M201.5 527v2M201.5 530v2M202.5 482v1M203.5 475v1M203.5 493v1M203.5 539v1M203.5 541v1M203.5 543v1M204.5 477v2M204.5 481v1M204.5 493v1M204.5 538v1M204.5 544v1M204.5 546v1M205.5 469v1M205.5 471v1M205.5 477v2M205.5 482v1M205.5 486v1M205.5 488v1M205.5 502v1M205.5 512v3M205.5 529v2M205.5 539v2M205.5 542v2M206.5 487v2M209.5 473v1M209.5 475v2M209.5 492v1M209.5 500v1M209.5 522v3M209.5 532v1M209.5 543v1M210.5 479v2M210.5 492v1M210.5 517v1M210.5 537v1M210.5 541v1M211.5 467v1M211.5 478v1M211.5 482v1M211.5 485v1M211.5 489v1M211.5 491v1M211.5 504v2M211.5 513v1M211.5 516v1M211.5 527v2M211.5 530v1M211.5 541v1M211.5 543v1M212.5 468v3M212.5 482v4M212.5 488v1M212.5 490v2M212.5 510v1M212.5 515v2M212.5 529v1M213.5 474v2M213.5 492v1M213.5 494v1M213.5 501v1M213.5 523v4M213.5 532v1M214.5 473v1M214.5 475v1M214.5 481v1M214.5 492v2M214.5 500v1M214.5 521v3M214.5 536v1M214.5 544v1M215.5 468v1M215.5 477v1M215.5 483v2M215.5 486v1M215.5 488v1M215.5 503v2M215.5 509v3M215.5 513v2M215.5 516v1M215.5 527v1M215.5 530v2M216.5 469v1M216.5 486v1M216.5 489v2M216.5 512v1M217.5 488v1M218.5 472v1M218.5 474v1M218.5 493v1M218.5 501v1M218.5 524v1M218.5 526v1M218.5 532v1M218.5 539v1M218.5 541v1M219.5 477v2M219.5 492v1M219.5 519v2M219.5 532v1M219.5 544v1M220.5 468v2M220.5 479v2M220.5 482v1M220.5 484v1M220.5 487v1M220.5 490v2M220.5 503v1M220.5 506v1M220.5 509v1M220.5 514v1M220.5 528v1M220.5 531v1M220.5 539v5M221.5 469v3M221.5 482v2M221.5 488v1M221.5 506v1M221.5 512v1M221.5 515v1M224.5 474v1M224.5 492v1M224.5 538v1M224.5 540v1M225.5 480v1M225.5 521v1M225.5 547v1M226.5 468v4M226.5 479v1M226.5 484v2M226.5 489v1M226.5 502v5M226.5 508v1M226.5 529v3M226.5 539v1M226.5 542v2M227.5 490v1M229.5 493v1M229.5 495v1M229.5 501v1M229.5 522v2M229.5 532v1M229.5 534v1M229.5 545v1M230.5 473v1M230.5 476v4M230.5 492v1M230.5 519v1M230.5 523v1M230.5 547v2M231.5 468v2M231.5 471v1M231.5 477v3M231.5 482v1M231.5 485v1M231.5 488v2M231.5 491v1M231.5 504v1M231.5 511v2M231.5 514v1M231.5 516v1M231.5 529v2M231.5 540v1M232.5 469v2M232.5 479v1M232.5 482v1M232.5 484v3M232.5 488v3M232.5 510v2M232.5 515v1M235.5 473v1M235.5 494v1M235.5 500v2M235.5 523v2M235.5 533v1M235.5 537v1M236.5 472v2M236.5 481v1M236.5 493v1M236.5 525v1M236.5 539v1M237.5 468v2M237.5 471v1M237.5 481v2M237.5 489v1M237.5 491v1M237.5 502v1M237.5 504v1M237.5 506v2M237.5 509v1M237.5 511v2M237.5 514v1M237.5 516v1M237.5 527v5M237.5 538v1M237.5 542v2M238.5 482v1M238.5 485v1M238.5 487v1M238.5 489v2M238.5 516v1M240.5 473v1M240.5 475v1M240.5 493v1M240.5 522v1M240.5 525v2M240.5 532v3M240.5 538v1M240.5 540v2M241.5 472v1M241.5 475v1M241.5 477v3M241.5 481v1M241.5 492v1M241.5 537v1M241.5 548v1M242.5 469v2M242.5 477v4M242.5 482v1M242.5 485v3M242.5 490v1M242.5 502v1M242.5 504v1M242.5 507v1M242.5 512v3M242.5 516v1M242.5 527v1M242.5 530v2M242.5 541v3M243.5 483v1M245.5 474v1M245.5 494v1M245.5 522v2M245.5 526v1M245.5 538v1M245.5 546v1M246.5 474v2M246.5 481v1M246.5 501v1M246.5 520v1M246.5 532v3M246.5 538v1M247.5 468v1M247.5 477v1M247.5 483v1M247.5 489v2M247.5 504v1M247.5 507v1M247.5 512v1M247.5 517v3M247.5 531v1M247.5 539v1M247.5 547v1M248.5 469v1M248.5 482v1M248.5 485v2M248.5 488v1M248.5 505v1M248.5 508v1M248.5 528v1M250.5 472v1M250.5 475v1M250.5 492v3M250.5 501v1M250.5 522v3M250.5 526v1M250.5 532v2M250.5 538v2M250.5 543v1M251.5 478v1M251.5 480v2M251.5 518v2M251.5 536v1M251.5 538v1M252.5 469v1M252.5 471v1M252.5 480v1M252.5 482v4M252.5 487v2M252.5 503v4M252.5 515v1M252.5 531v1M252.5 540v3M255.5 472v2M255.5 475v1M255.5 492v1M255.5 524v1M255.5 534v1M256.5 473v1M256.5 475v1M256.5 479v1M256.5 493v1M256.5 517v3M256.5 521v1M256.5 548v1M257.5 469v1M257.5 478v1M257.5 482v1M257.5 489v1M257.5 511v3M257.5 530v1M257.5 540v2M261.5 493v1M261.5 525v1M261.5 539v1M261.5 543v1M262.5 480v1M262.5 544v1M263.5 471v1M263.5 482v1M263.5 485v2M263.5 488v1M263.5 491v1M263.5 508v2M263.5 514v1M263.5 530v1M263.5 542v1M264.5 482v1M264.5 485v1M264.5 491v1M264.5 511v1M264.5 514v1M266.5 474v1M266.5 492v1M266.5 538v4M266.5 543v1M267.5 493v1M267.5 519v1M267.5 521v2M267.5 539v1M267.5 541v2M268.5 482v1M268.5 489v2M268.5 502v1M268.5 509v1M268.5 511v1M268.5 529v2M272.5 472v1M272.5 475v1M272.5 493v1M272.5 500v1M272.5 523v4M272.5 532v3M272.5 538v1M272.5 543v1M273.5 472v1M273.5 474v1M273.5 476v3M273.5 481v1M273.5 519v1M273.5 545v2M274.5 470v2M274.5 482v1M274.5 484v3M274.5 488v1M274.5 504v5M274.5 511v1M274.5 527v2M274.5 531v1M274.5 540v1M275.5 482v1M277.5 473v1M277.5 475v1M277.5 492v1M277.5 522v2M277.5 525v1M277.5 532v2M277.5 535v1M277.5 539v1M278.5 479v1M278.5 517v1M278.5 519v1M278.5 539v1M278.5 547v1M279.5 468v4M279.5 480v1M279.5 487v1M279.5 505v2M279.5 508v1M279.5 511v1M279.5 514v1M279.5 519v3M279.5 529v3M279.5 540v1M279.5 542v2M280.5 483v4M280.5 509v1M280.5 513v1M282.5 472v1M282.5 475v1M282.5 492v2M282.5 501v1M282.5 522v1M282.5 533v2M282.5 538v1M282.5 540v1M282.5 543v1M283.5 478v2M283.5 492v1M283.5 517v1M283.5 519v2M283.5 546v2M284.5 469v2M284.5 487v2M284.5 491v1M284.5 506v1M284.5 509v4M284.5 527v5M285.5 487v1M288.5 474v1M288.5 492v1M288.5 501v1M288.5 523v1M288.5 533v2M289.5 481v1M289.5 518v1M289.5 521v1M289.5 547v2M290.5 471v1M290.5 477v2M290.5 481v2M290.5 484v1M290.5 487v3M290.5 502v1M290.5 507v1M290.5 512v1M290.5 515v2M290.5 527v2M294.5 473v4M294.5 493v1M294.5 539v4M295.5 477v1M295.5 538v1M296.5 484v1M296.5 489v1M296.5 508v1M296.5 516v1M296.5 542v1M300.5 472v3M300.5 476v1M300.5 493v1M300.5 501v1M300.5 538v2M301.5 479v1M301.5 481v1M301.5 535v1M301.5 539v1M301.5 544v1M301.5 546v2M302.5 482v1M302.5 486v1M302.5 488v2M302.5 542v1M303.5 485v1M303.5 487v2M305.5 493v2M305.5 523v2M305.5 526v1M305.5 532v1M305.5 544v1M306.5 478v1M306.5 519v1M306.5 535v1M306.5 548v1M307.5 471v1M307.5 482v1M307.5 487v2M307.5 490v2M307.5 503v1M307.5 506v1M307.5 508v1M307.5 510v1M307.5 513v1M307.5 531v1M307.5 539v1M307.5 543v1M308.5 482v1M308.5 484v3M310.5 473v1M310.5 493v1M310.5 522v2M310.5 532v1M310.5 535v1M310.5 538v1M311.5 475v2M311.5 479v2M311.5 492v2M311.5 500v1M311.5 524v1M311.5 526v1M311.5 536v2M311.5 547v2M312.5 470v1M312.5 477v1M312.5 503v1M312.5 506v2M312.5 513v2M312.5 529v1M312.5 539v3M313.5 487v1M313.5 490v2M313.5 505v1M313.5 510v1M315.5 472v2M315.5 475v1M315.5 501v1M315.5 532v3M316.5 473v3M316.5 481v1M316.5 519v3M316.5 533v1M316.5 544v1M317.5 482v1M317.5 484v3M317.5 489v3M317.5 503v4M317.5 510v1M317.5 513v1M317.5 527v2M317.5 530v1M317.5 541v1M317.5 543v1M321.5 473v1M321.5 476v1M321.5 522v1M321.5 532v1M321.5 540v1M321.5 543v1M322.5 472v2M322.5 477v1M322.5 481v1M322.5 519v3M322.5 541v1M322.5 544v1M323.5 482v1M323.5 491v1M323.5 508v2M323.5 511v1M323.5 514v1M323.5 539v1M323.5 542v1M327.5 472v1M327.5 475v2M327.5 492v1M328.5 479v1M328.5 518v1M328.5 521v1M328.5 538v1M329.5 485v1M329.5 487v2M329.5 541v1M330.5 482v1M330.5 487v2M332.5 472v1M332.5 501v1M332.5 522v1M332.5 524v1M332.5 526v1M332.5 533v1M332.5 536v1M333.5 472v1M333.5 475v1M333.5 477v1M333.5 492v1M333.5 519v2M333.5 537v1M333.5 544v2M334.5 471v1M334.5 480v3M334.5 484v3M334.5 489v3M334.5 503v2M334.5 507v5M334.5 513v1M334.5 515v2M334.5 527v3M334.5 540v1M334.5 542v1M334.5 548v1M335.5 483v2M335.5 486v1M338.5 472v2M338.5 475v2M338.5 492v2M339.5 477v1M339.5 479v3M339.5 519v2M339.5 538v1M339.5 546v1M340.5 477v1M340.5 479v1M340.5 481v1M340.5 483v1M340.5 486v1M340.5 489v2M340.5 504v1M340.5 511v2M340.5 516v1M340.5 530v1M340.5 539v2M340.5 543v1M341.5 486v1M343.5 472v1M343.5 476v1M343.5 492v1M343.5 522v1M343.5 525v2M343.5 533v2M344.5 478v4M344.5 520v1M344.5 544v1M345.5 478v2M345.5 482v3M345.5 491v1M345.5 502v1M345.5 505v1M345.5 508v2M345.5 512v1M345.5 516v1M345.5 540v1M345.5 543v1M349.5 472v2M349.5 494v1M349.5 522v1M349.5 526v1M349.5 534v1M349.5 538v1M349.5 541v2M350.5 478v1M350.5 481v1M350.5 517v3M351.5 477v1M351.5 482v1M351.5 487v2M351.5 502v1M351.5 512v1M351.5 514v3M351.5 529v1M351.5 531v1M351.5 539v4M352.5 485v1M352.5 487v1M354.5 476v1M354.5 494v1M354.5 522v1M354.5 524v2M354.5 533v1M354.5 535v1M355.5 472v1M355.5 475v2M355.5 479v1M355.5 481v1M355.5 500v1M355.5 517v3M355.5 536v1M355.5 543v1M355.5 546v1M356.5 471v1M356.5 477v2M356.5 480v1M356.5 485v1M356.5 491v1M356.5 506v4M356.5 521v1M356.5 528v1M356.5 531v1M357.5 483v3M357.5 509v1M360.5 494v2M360.5 500v1M360.5 524v1M360.5 532v2M360.5 538v1M360.5 540v1M360.5 542v1M360.5 546v1M361.5 473v1M361.5 478v2M361.5 501v1M361.5 517v2M361.5 520v1M361.5 537v1M361.5 548v1M362.5 484v2M362.5 503v2M362.5 507v3M362.5 541v3M363.5 485v1M366.5 501v1M366.5 522v2M366.5 534v1M367.5 474v1M367.5 476v3M367.5 480v1M367.5 492v1M367.5 518v1M367.5 520v2M367.5 539v1M367.5 545v1M368.5 482v1M368.5 485v4M368.5 490v2M368.5 505v2M368.5 509v2M368.5 539v1M368.5 543v1M369.5 484v1M369.5 488v2M369.5 503v2M369.5 509v2M369.5 529v1M371.5 532v1M371.5 538v1M371.5 541v2M372.5 546v1M373.5 485v1M373.5 487v2M373.5 539v2M373.5 543v1M377.5 493v1M377.5 500v1M377.5 532v1M377.5 538v1M377.5 542v1M378.5 475v4M378.5 518v2M378.5 538v1M378.5 546v1M379.5 477v1M379.5 483v3M379.5 487v5M379.5 507v2M379.5 515v2M379.5 528v1M379.5 530v2M379.5 540v2M383.5 474v1M383.5 500v1M383.5 542v2M384.5 479v2M384.5 538v2M384.5 543v1M385.5 484v1M385.5 489v1M385.5 541v1M389.5 473v1M389.5 476v1M389.5 492v1M389.5 494v1M389.5 498v1M389.5 501v1M389.5 522v1M389.5 525v1M389.5 534v1M389.5 544v3M390.5 474v2M390.5 477v2M390.5 493v1M390.5 524v1M390.5 532v1M390.5 545v1M391.5 478v2M391.5 483v2M391.5 488v2M391.5 503v1M391.5 505v2M391.5 508v1M391.5 510v4M391.5 515v1M391.5 517v1M391.5 527v2M391.5 540v2M391.5 547v1M392.5 482v1M392.5 489v1M392.5 507v1M395.5 492v1M395.5 532v1M395.5 538v2M396.5 477v1M396.5 480v1M396.5 520v2M396.5 540v1M397.5 483v1M397.5 539v1M397.5 541v1M397.5 543v1M401.5 475v1M401.5 493v1M401.5 501v1M401.5 532v1M401.5 534v1M401.5 538v1M401.5 543v1M402.5 479v2M402.5 517v2M402.5 538v1M402.5 545v2M403.5 480v1M403.5 482v1M403.5 487v1M403.5 490v2M403.5 502v1M403.5 504v1M403.5 509v2M403.5 513v2M403.5 528v2M407.5 475v2M407.5 492v1M407.5 524v1M407.5 526v1M407.5 533v1M407.5 540v1M408.5 478v3M408.5 518v1M408.5 521v1M408.5 536v2M409.5 484v1M409.5 490v2M409.5 502v1M409.5 505v1M409.5 507v2M409.5 513v1M409.5 515v1M409.5 530v1M409.5 539v4M413.5 522v3M413.5 526v1M413.5 532v2M413.5 543v1M414.5 478v2M414.5 517v1M414.5 538v1M414.5 548v1M415.5 484v3M415.5 509v3M415.5 528v4M415.5 538v3M415.5 542v1M420.5 501v1M420.5 542v2M421.5 542v1M421.5 546v1M422.5 482v1M422.5 502v1M422.5 527v2M422.5 539v1M422.5 541v1M422.5 543v1M426.5 524v1M426.5 532v2M426.5 539v4M427.5 539v2M428.5 503v2M428.5 515v1M428.5 531v1M428.5 538v3M428.5 542v4M428.5 548v1M433.5 492v1M433.5 501v1M433.5 522v3M433.5 526v1M433.5 532v1M433.5 538v1M434.5 519v1M434.5 521v1M434.5 523v1M434.5 527v1M434.5 549v1M435.5 517v1M435.5 519v2M435.5 525v3M435.5 529v1M435.5 531v1M435.5 538v3M435.5 542v1M435.5 544v1M436.5 542v1M436.5 548v1M439.5 526v1M439.5 540v6M440.5 517v2M440.5 521v1M440.5 540v1M440.5 542v1M440.5 550v1M441.5 502v1M441.5 516v1M441.5 530v1M441.5 547v2M446.5 501v1M446.5 522v3M446.5 533v2M446.5 538v2M446.5 541v1M447.5 516v1M447.5 518v3M447.5 523v3M447.5 528v1M447.5 538v1M447.5 550v1M448.5 503v1M448.5 509v1M448.5 512v1M448.5 517v3M448.5 524v2M448.5 527v1M448.5 531v1M448.5 539v1M448.5 542v1M448.5 544v1M449.5 545v3M451.5 523v2M451.5 541v1M451.5 544v1M452.5 518v3M452.5 538v2M453.5 540v3M453.5 545v1M453.5 549v2M459.5 544v1M459.5 546v1M460.5 528v1M460.5 545v1M460.5 551v1M461.5 502v1M461.5 515v2M461.5 528v1M461.5 540v1M461.5 542v1M461.5 544v3M461.5 549v1M461.5 551v1M465.5 524v2M465.5 540v3M465.5 546v1M466.5 520v2M466.5 529v2M466.5 541v1M466.5 545v1M466.5 551v1M467.5 515v2M467.5 523v1M467.5 531v1M467.5 538v1M467.5 541v1M467.5 544v1M467.5 548v3M468.5 550v2M473.5 524v1M473.5 536v1M473.5 539v1M474.5 519v1M474.5 524v1M474.5 526v1M474.5 528v1M474.5 538v1M474.5 545v1M475.5 519v1M475.5 521v2M475.5 530v1M475.5 540v3M475.5 544v1M475.5 547v2M475.5 550v2M476.5 547v1M479.5 539v1M479.5 541v1M479.5 544v2M480.5 540v1M480.5 549v1M480.5 551v1M481.5 542v1M481.5 548v3M484.5 538v1M484.5 542v1M485.5 539v1M485.5 542v1M485.5 544v1M485.5 549v2M486.5 538v1M486.5 540v1M486.5 544v1M486.5 550v1M487.5 540v2M487.5 543v1M487.5 550v1M488.5 540v1M489.5 538v2M489.5 543v1M490.5 537v1M490.5 539v1M491.5 539v1M491.5 548v1M491.5 553v1M495.5 538v1M495.5 540v1M495.5 543v1M495.5 545v1M496.5 538v1M496.5 541v2M497.5 540v1M497.5 543v1M502.5 541v2M502.5 545v1M502.5 547v2M503.5 539v2M503.5 543v1M508.5 540v1M509.5 538v1M509.5 543v1M509.5 547v2M510.5 540v1M510.5 547v2M513.5 541v2M514.5 542v2M514.5 548v1M519.5 540v1M520.5 538v1M520.5 542v5M525.5 545v1M526.5 541v1M526.5 546v3M533.5 541v1M533.5 543v1M534.5 543v1M535.5 543v1M539.5 540v3M539.5 547v1M540.5 543v1M540.5 548v1M544.5 538v8M549.5 539v2M549.5 542v3M550.5 542v2M554.5 540v1M554.5 545v1M559.5 539v1M559.5 543v2M560.5 539v1" stroke="#0aa0f5" stroke-width="1" fill="none"/>
<path d="M115.5 472v1M115.5 500v1M115.5 525v2M115.5 533v2M116.5 466v1M116.5 480v1M116.5 493v1M116.5 517v2M116.5 538v1M117.5 468v1M117.5 470v1M117.5 480v1M117.5 482v1M117.5 484v2M117.5 487v1M117.5 502v1M117.5 504v1M117.5 507v1M117.5 511v4M117.5 516v1M118.5 489v1M119.5 468v1M121.5 473v2M121.5 492v2M121.5 526v1M121.5 540v1M121.5 543v1M122.5 475v3M122.5 480v1M122.5 492v2M123.5 468v1M123.5 477v2M123.5 482v1M123.5 490v1M123.5 505v1M123.5 507v1M123.5 511v2M123.5 539v1M124.5 475v1M124.5 483v2M124.5 539v2M124.5 543v1M125.5 473v1M125.5 478v1M125.5 481v1M126.5 481v3M126.5 485v1M126.5 487v2M126.5 506v1M129.5 475v1M130.5 519v1M130.5 540v2M131.5 468v1M131.5 482v1M131.5 489v1M131.5 541v1M134.5 474v1M134.5 493v1M134.5 534v1M134.5 538v1M134.5 543v1M135.5 472v1M135.5 480v1M135.5 493v1M135.5 541v1M136.5 483v1M136.5 511v1M136.5 516v1M136.5 529v2M137.5 468v1M137.5 489v1M139.5 492v1M139.5 540v1M139.5 542v1M140.5 541v2M141.5 467v2M141.5 471v1M141.5 481v1M141.5 483v2M141.5 486v1M141.5 489v3M141.5 503v1M141.5 508v1M141.5 511v2M141.5 514v1M141.5 529v2M141.5 541v2M145.5 475v2M145.5 493v1M145.5 522v1M145.5 524v1M145.5 539v1M145.5 542v2M146.5 476v4M146.5 539v2M147.5 480v1M147.5 484v3M147.5 488v2M147.5 502v1M147.5 506v1M147.5 510v1M149.5 476v1M149.5 492v1M149.5 540v2M150.5 477v1M151.5 469v3M151.5 477v1M151.5 486v1M151.5 490v2M151.5 502v1M151.5 514v1M151.5 516v1M152.5 483v1M154.5 472v1M154.5 474v1M154.5 522v1M154.5 534v1M154.5 538v1M154.5 541v2M155.5 473v2M155.5 479v1M155.5 517v2M155.5 521v1M155.5 525v1M155.5 538v1M155.5 541v3M156.5 469v2M156.5 483v1M156.5 485v1M156.5 488v3M156.5 508v1M157.5 487v1M158.5 474v1M158.5 492v2M158.5 533v1M158.5 541v1M159.5 466v1M159.5 481v1M159.5 517v1M160.5 470v2M160.5 479v1M160.5 482v1M160.5 485v2M160.5 488v1M160.5 503v2M160.5 508v1M160.5 516v1M160.5 521v1M160.5 529v1M163.5 475v2M163.5 493v1M163.5 525v2M164.5 474v1M164.5 478v1M164.5 480v2M164.5 521v1M164.5 538v1M165.5 468v1M165.5 483v1M165.5 513v1M165.5 527v1M168.5 474v1M168.5 493v1M168.5 524v1M168.5 541v1M168.5 543v1M169.5 474v1M169.5 479v3M169.5 492v1M169.5 521v1M170.5 469v1M170.5 477v1M170.5 483v2M170.5 487v1M170.5 489v1M170.5 491v1M170.5 503v1M170.5 505v1M171.5 468v1M171.5 471v1M174.5 472v1M174.5 474v1M174.5 522v1M175.5 479v1M175.5 481v1M175.5 538v1M176.5 468v4M176.5 482v1M176.5 485v1M176.5 487v1M176.5 490v2M176.5 508v1M176.5 529v2M177.5 483v2M179.5 473v1M179.5 494v1M179.5 524v2M179.5 543v1M180.5 472v1M180.5 475v1M180.5 477v3M180.5 481v1M180.5 517v1M180.5 521v1M180.5 541v2M181.5 470v1M181.5 482v1M181.5 487v1M181.5 489v2M181.5 509v2M181.5 513v1M181.5 530v1M184.5 475v1M184.5 493v1M184.5 501v1M184.5 523v1M184.5 525v2M185.5 477v1M186.5 469v2M186.5 477v1M186.5 483v1M186.5 485v1M186.5 487v4M186.5 527v1M187.5 482v1M187.5 487v1M187.5 490v1M188.5 473v1M188.5 475v1M188.5 540v3M189.5 474v1M189.5 476v1M189.5 478v1M189.5 480v1M189.5 519v2M189.5 543v1M190.5 471v1M190.5 484v1M190.5 486v1M190.5 488v1M190.5 490v1M190.5 504v1M190.5 508v1M190.5 510v1M190.5 512v1M190.5 515v1M190.5 530v1M190.5 541v1M191.5 469v1M191.5 486v4M191.5 491v1M193.5 476v1M193.5 500v1M193.5 525v2M193.5 532v1M193.5 538v1M193.5 540v1M194.5 479v1M194.5 481v1M194.5 519v2M194.5 542v1M195.5 469v1M195.5 484v2M195.5 507v1M195.5 511v1M195.5 527v1M195.5 529v2M196.5 485v1M198.5 472v1M198.5 476v1M198.5 493v1M198.5 500v1M198.5 522v2M198.5 533v2M198.5 538v2M199.5 492v1M199.5 521v1M200.5 469v2M200.5 479v1M200.5 483v1M200.5 489v1M200.5 502v2M200.5 505v1M200.5 509v1M200.5 527v1M201.5 482v1M201.5 487v1M201.5 491v1M203.5 540v1M203.5 542v1M204.5 479v2M205.5 470v1M205.5 487v1M205.5 491v1M205.5 511v1M209.5 472v1M209.5 474v1M209.5 501v1M209.5 525v1M209.5 533v2M209.5 538v1M209.5 540v3M210.5 477v2M210.5 538v1M210.5 543v1M211.5 468v3M211.5 483v2M211.5 487v2M211.5 502v1M211.5 506v1M211.5 510v1M211.5 512v1M211.5 515v1M211.5 529v1M212.5 471v1M212.5 486v1M212.5 489v1M213.5 473v1M213.5 476v1M213.5 493v1M213.5 500v1M213.5 522v1M213.5 542v1M214.5 474v1M214.5 480v1M214.5 519v2M215.5 469v3M215.5 482v1M215.5 487v1M215.5 489v1M215.5 491v1M215.5 502v1M215.5 507v2M215.5 512v1M215.5 529v1M218.5 540v1M219.5 480v1M220.5 470v1M220.5 485v2M220.5 527v1M225.5 479v1M225.5 538v2M226.5 483v1M226.5 486v1M226.5 507v1M229.5 475v1M229.5 492v1M229.5 524v2M229.5 533v1M229.5 538v1M230.5 474v2M230.5 480v1M230.5 517v2M230.5 538v1M231.5 470v1M231.5 484v1M231.5 486v1M231.5 490v1M231.5 503v1M231.5 510v1M231.5 515v1M232.5 483v1M232.5 487v1M232.5 491v1M232.5 509v1M235.5 476v1M235.5 492v1M235.5 525v2M235.5 532v1M236.5 475v2M236.5 517v2M236.5 521v1M236.5 538v1M236.5 540v1M237.5 470v1M237.5 486v1M237.5 490v1M237.5 503v1M237.5 510v1M237.5 513v1M237.5 515v1M238.5 486v1M238.5 488v1M240.5 474v1M240.5 492v1M240.5 523v1M240.5 542v2M241.5 480v1M242.5 471v1M242.5 491v1M242.5 529v1M245.5 472v1M245.5 476v1M245.5 500v1M245.5 524v1M245.5 532v2M245.5 542v2M246.5 477v1M246.5 479v1M246.5 492v1M246.5 517v1M246.5 519v1M247.5 469v1M247.5 479v3M247.5 484v1M247.5 491v1M247.5 502v1M247.5 506v1M247.5 509v3M247.5 513v1M247.5 515v1M247.5 528v3M247.5 542v2M250.5 474v1M250.5 476v1M250.5 500v1M250.5 525v1M250.5 534v1M250.5 540v1M251.5 477v1M251.5 539v1M251.5 543v1M252.5 491v1M252.5 508v1M255.5 474v1M255.5 493v1M255.5 540v1M255.5 543v1M256.5 480v1M256.5 543v1M257.5 485v1M257.5 487v2M261.5 474v1M261.5 476v1M261.5 492v1M261.5 540v1M261.5 542v1M262.5 479v1M262.5 538v2M262.5 543v1M263.5 512v1M264.5 486v1M267.5 481v1M267.5 538v1M267.5 540v1M268.5 471v1M268.5 483v2M268.5 491v1M272.5 474v1M272.5 476v1M272.5 541v1M273.5 479v2M273.5 520v1M273.5 540v1M273.5 543v1M274.5 491v1M277.5 472v1M277.5 493v1M277.5 500v2M277.5 534v1M277.5 543v1M278.5 477v2M278.5 480v2M278.5 520v2M279.5 479v1M279.5 481v1M279.5 484v3M279.5 488v2M279.5 491v1M279.5 502v3M279.5 509v2M279.5 512v2M279.5 515v1M279.5 528v1M282.5 523v4M282.5 539v1M283.5 480v1M283.5 538v1M283.5 543v1M284.5 486v1M288.5 538v1M288.5 540v1M288.5 542v2M289.5 477v2M289.5 539v2M290.5 469v2M290.5 485v2M290.5 490v2M290.5 503v1M295.5 481v1M295.5 540v1M295.5 543v1M300.5 492v1M300.5 532v1M300.5 541v2M301.5 540v1M302.5 483v3M302.5 490v1M302.5 543v1M305.5 473v2M305.5 501v1M305.5 522v1M305.5 543v1M306.5 477v1M306.5 479v3M306.5 538v1M306.5 543v1M307.5 470v1M307.5 483v1M307.5 485v2M310.5 474v3M310.5 524v1M310.5 539v2M311.5 472v1M311.5 517v2M311.5 521v1M311.5 543v1M312.5 471v1M312.5 482v1M312.5 485v2M312.5 490v2M312.5 505v1M312.5 527v2M313.5 488v1M315.5 474v1M315.5 476v1M315.5 492v1M315.5 538v1M315.5 542v1M316.5 477v2M316.5 480v1M316.5 538v1M316.5 540v1M316.5 542v1M317.5 471v1M317.5 511v1M317.5 542v1M321.5 474v1M321.5 539v1M322.5 542v2M323.5 483v1M323.5 485v2M323.5 488v3M327.5 493v1M327.5 539v5M328.5 481v1M328.5 541v1M329.5 482v1M332.5 492v1M332.5 494v1M332.5 500v1M332.5 525v1M332.5 534v1M332.5 539v1M333.5 478v2M333.5 481v1M333.5 521v1M333.5 538v1M333.5 542v1M334.5 479v1M334.5 483v1M334.5 487v2M334.5 502v1M334.5 512v1M334.5 514v1M334.5 543v1M338.5 538v3M339.5 478v1M339.5 540v1M340.5 482v1M343.5 475v1M343.5 540v2M343.5 543v1M344.5 539v1M349.5 500v2M349.5 525v1M349.5 532v1M349.5 539v2M350.5 538v1M350.5 541v2M351.5 483v4M354.5 472v4M354.5 492v2M354.5 500v1M354.5 532v1M354.5 534v1M354.5 539v1M355.5 473v1M355.5 521v1M355.5 538v3M356.5 487v1M356.5 489v2M356.5 503v1M356.5 513v2M356.5 529v2M360.5 472v2M360.5 475v2M360.5 522v1M360.5 525v1M360.5 534v1M360.5 539v1M360.5 541v1M361.5 480v2M361.5 519v1M361.5 521v1M361.5 540v1M362.5 482v1M362.5 486v3M362.5 491v1M362.5 506v1M362.5 511v2M366.5 476v1M366.5 500v1M366.5 524v3M367.5 479v1M367.5 481v1M367.5 519v1M368.5 483v2M368.5 507v2M368.5 527v2M369.5 487v1M369.5 491v1M371.5 540v1M372.5 541v1M377.5 473v2M377.5 476v1M377.5 492v1M377.5 525v1M377.5 539v3M378.5 479v2M379.5 482v1M379.5 502v1M384.5 540v1M389.5 523v1M389.5 537v1M390.5 481v1M390.5 517v3M390.5 538v2M390.5 541v2M391.5 502v1M391.5 504v1M391.5 507v1M391.5 509v1M391.5 531v1M395.5 540v2M396.5 538v2M396.5 543v1M397.5 540v1M401.5 533v1M401.5 542v1M402.5 481v1M402.5 541v1M402.5 543v1M403.5 483v2M403.5 489v1M403.5 515v2M407.5 532v1M407.5 538v1M407.5 542v1M409.5 483v1M413.5 500v1M413.5 534v1M413.5 538v5M414.5 477v1M414.5 521v1M414.5 541v3M415.5 482v2M415.5 507v2M415.5 514v3M415.5 527v1M415.5 543v1M420.5 540v2M421.5 538v1M421.5 541v1M421.5 543v1M422.5 540v1M426.5 543v3M427.5 541v1M427.5 545v2M427.5 548v1M428.5 541v1M428.5 546v2M433.5 540v2M434.5 517v2M434.5 538v1M434.5 540v1M434.5 543v1M435.5 541v1M435.5 545v2M439.5 546v1M440.5 539v1M440.5 541v1M440.5 543v1M441.5 515v1M441.5 531v1M441.5 541v2M441.5 546v1M446.5 540v1M446.5 543v1M446.5 546v1M447.5 539v6M447.5 547v2M448.5 515v1M448.5 523v1M448.5 528v3M448.5 546v3M449.5 548v1M451.5 542v2M452.5 540v1M452.5 545v2M452.5 551v1M453.5 543v2M453.5 547v1M459.5 539v5M459.5 545v1M460.5 540v1M460.5 543v2M461.5 531v1M461.5 539v1M461.5 541v1M461.5 547v1M461.5 550v1M465.5 539v1M465.5 544v2M466.5 540v1M466.5 543v1M466.5 546v2M467.5 542v1M467.5 551v1M473.5 522v2M473.5 525v1M473.5 546v1M474.5 520v1M474.5 539v2M474.5 543v1M474.5 546v1M474.5 548v1M474.5 550v1M474.5 552v1M475.5 529v1M475.5 531v1M475.5 543v1M475.5 545v2M475.5 549v1M479.5 538v1M479.5 542v1M479.5 546v1M480.5 538v1M480.5 544v3M480.5 548v1M480.5 550v1M481.5 539v2M484.5 539v1M484.5 541v1M484.5 543v1M485.5 540v1M485.5 543v1M486.5 539v1M486.5 541v3M487.5 538v1M487.5 542v1M489.5 542v1M490.5 538v1M490.5 541v3M491.5 547v1M495.5 539v1M495.5 542v1M496.5 543v1M502.5 543v1M508.5 543v1M509.5 541v2M513.5 539v1M514.5 539v2M519.5 543v1M520.5 539v1M533.5 542v1M534.5 541v2M539.5 539v1M539.5 543v1M539.5 548v1M549.5 541v1M554.5 541v2M559.5 540v1" stroke="#0ad2fa" stroke-width="1" fill="none"/>
<path d="M115.5 474v3M115.5 532v1M115.5 539v2M115.5 542v1M116.5 539v2M116.5 542v2M117.5 483v1M117.5 488v4M121.5 475v2M121.5 538v2M121.5 541v1M122.5 478v2M122.5 481v1M122.5 538v1M122.5 543v1M123.5 471v1M123.5 484v3M124.5 542v1M125.5 540v2M126.5 469v2M129.5 492v2M129.5 543v1M130.5 539v1M130.5 542v2M131.5 469v2M131.5 483v2M134.5 473v1M134.5 475v1M134.5 492v1M134.5 542v1M135.5 479v1M136.5 467v1M136.5 471v1M136.5 482v1M136.5 491v1M136.5 502v1M139.5 539v1M141.5 482v1M145.5 541v1M146.5 538v1M146.5 543v1M147.5 467v1M147.5 483v1M147.5 491v1M149.5 543v1M150.5 539v1M150.5 541v1M150.5 543v1M151.5 482v2M151.5 485v1M154.5 473v1M154.5 475v2M154.5 543v1M155.5 472v1M155.5 539v1M156.5 487v1M158.5 472v2M158.5 539v1M158.5 542v2M159.5 479v1M159.5 518v1M159.5 521v1M159.5 539v4M160.5 467v3M160.5 484v1M160.5 489v2M160.5 507v1M160.5 511v1M160.5 531v1M163.5 473v2M163.5 492v1M163.5 500v1M163.5 540v1M164.5 479v1M164.5 541v1M165.5 491v1M168.5 539v1M168.5 542v1M169.5 539v1M169.5 541v1M170.5 470v1M170.5 482v1M170.5 485v1M174.5 493v1M174.5 543v1M175.5 541v1M175.5 543v1M176.5 467v1M176.5 483v1M176.5 489v1M179.5 475v1M179.5 492v1M179.5 500v1M179.5 540v2M180.5 480v1M180.5 518v1M180.5 539v1M180.5 543v1M184.5 472v2M184.5 476v1M184.5 492v1M184.5 524v1M185.5 541v3M186.5 467v2M186.5 484v1M186.5 486v1M187.5 469v1M188.5 474v1M188.5 476v1M189.5 477v1M189.5 538v1M190.5 482v1M190.5 485v1M190.5 487v1M190.5 489v1M190.5 491v1M190.5 513v1M190.5 516v1M191.5 471v1M191.5 490v1M193.5 473v1M193.5 539v1M193.5 542v2M194.5 538v1M194.5 541v1M195.5 470v1M195.5 489v1M195.5 508v1M195.5 528v1M198.5 475v1M198.5 524v1M198.5 540v1M199.5 479v2M199.5 539v1M199.5 541v1M200.5 468v1M200.5 471v1M200.5 482v1M200.5 485v1M200.5 488v1M200.5 491v1M200.5 506v2M200.5 510v1M204.5 539v1M204.5 541v1M209.5 539v1M210.5 540v1M210.5 542v1M211.5 471v1M211.5 486v1M211.5 490v1M211.5 509v1M211.5 531v1M213.5 539v2M214.5 479v1M215.5 490v1M218.5 475v2M218.5 538v1M218.5 543v1M219.5 479v1M219.5 481v1M219.5 538v1M219.5 540v1M225.5 543v1M229.5 472v1M229.5 474v1M229.5 526v1M230.5 481v1M231.5 483v1M231.5 487v1M235.5 472v1M235.5 474v1M235.5 493v1M235.5 538v4M236.5 478v1M236.5 519v2M236.5 543v1M237.5 485v1M237.5 487v2M240.5 472v1M241.5 539v1M245.5 473v1M245.5 475v1M245.5 492v2M245.5 501v1M245.5 534v1M246.5 478v1M246.5 480v1M246.5 539v1M246.5 541v3M247.5 470v1M247.5 485v3M247.5 503v1M247.5 505v1M247.5 508v1M247.5 514v1M247.5 516v1M247.5 527v1M250.5 473v1M250.5 541v1M251.5 479v1M251.5 540v1M251.5 542v1M252.5 470v1M252.5 486v1M255.5 539v1M255.5 541v2M256.5 538v1M256.5 541v1M261.5 541v1M262.5 540v1M262.5 542v1M267.5 543v1M272.5 473v1M272.5 539v1M272.5 542v1M273.5 538v1M273.5 541v2M277.5 538v1M277.5 542v1M278.5 538v1M278.5 540v1M278.5 543v1M279.5 482v1M279.5 490v1M279.5 516v1M282.5 473v2M283.5 539v1M283.5 541v2M288.5 539v1M289.5 542v1M295.5 539v1M295.5 541v1M300.5 540v1M300.5 543v1M305.5 472v1M305.5 475v2M305.5 492v1M305.5 525v1M306.5 539v1M306.5 542v1M310.5 541v1M310.5 543v1M311.5 477v1M311.5 538v1M312.5 483v2M312.5 487v1M312.5 489v1M315.5 539v3M316.5 479v1M316.5 541v1M322.5 538v3M323.5 471v1M328.5 542v2M332.5 473v2M332.5 476v1M332.5 523v1M332.5 532v1M332.5 538v1M332.5 540v1M333.5 539v1M333.5 541v1M333.5 543v1M338.5 541v3M339.5 542v1M343.5 542v1M344.5 540v1M344.5 542v2M349.5 476v1M349.5 493v1M350.5 539v2M350.5 543v1M354.5 538v1M354.5 540v1M355.5 477v2M355.5 480v1M355.5 541v2M356.5 484v1M356.5 486v1M356.5 488v1M356.5 502v1M356.5 515v2M360.5 492v2M361.5 538v2M361.5 541v3M366.5 475v1M366.5 492v1M366.5 538v1M366.5 541v2M367.5 540v1M367.5 543v1M371.5 539v1M372.5 538v1M372.5 543v1M377.5 475v1M377.5 543v1M378.5 540v3M384.5 541v2M389.5 474v2M389.5 493v1M389.5 524v1M389.5 532v1M389.5 538v1M390.5 520v1M391.5 490v1M395.5 542v1M401.5 539v3M402.5 540v1M402.5 542v1M407.5 539v1M407.5 541v1M408.5 538v1M408.5 540v1M414.5 539v2M427.5 538v1M427.5 542v1M427.5 547v1M433.5 539v1M433.5 542v2M433.5 545v2M434.5 542v1M434.5 546v1M435.5 547v2M440.5 545v1M441.5 545v1M446.5 542v1M447.5 517v1M447.5 546v1M448.5 516v1M448.5 545v1M448.5 550v1M452.5 541v3M460.5 539v1M460.5 541v2M460.5 546v3M461.5 548v1M465.5 543v1M466.5 539v1M466.5 542v1M466.5 548v1M466.5 550v1M473.5 526v1M473.5 540v1M473.5 543v3M474.5 547v1M474.5 549v1M474.5 551v1M479.5 543v1M480.5 541v2M484.5 540v1M487.5 539v1M489.5 541v1M496.5 539v2M502.5 539v2M509.5 539v2M514.5 541v1M520.5 540v1" stroke="#14dcdc" stroke-width="1" fill="none"/>
<path d="M115.5 473v1M115.5 493v1M115.5 543v1M116.5 477v2M121.5 542v1M122.5 539v2M122.5 542v1M123.5 483v1M125.5 543v1M135.5 539v1M135.5 542v1M136.5 468v1M140.5 540v1M140.5 543v1M146.5 542v1M147.5 468v1M147.5 482v1M149.5 542v1M151.5 484v1M154.5 539v1M158.5 540v1M159.5 480v1M159.5 543v1M160.5 483v1M163.5 541v1M163.5 543v1M164.5 540v1M169.5 478v1M169.5 540v1M169.5 542v1M174.5 539v1M175.5 540v1M175.5 542v1M176.5 484v1M176.5 486v1M179.5 472v1M179.5 476v1M179.5 493v1M179.5 539v1M180.5 540v1M184.5 539v1M184.5 541v1M185.5 538v1M185.5 540v1M186.5 491v1M189.5 481v1M189.5 539v2M193.5 541v1M194.5 540v1M195.5 486v1M198.5 542v2M199.5 540v1M199.5 542v2M200.5 486v2M204.5 540v1M204.5 542v2M210.5 539v1M213.5 541v1M213.5 543v1M214.5 477v2M214.5 539v5M219.5 543v1M225.5 540v2M229.5 473v1M229.5 540v3M230.5 540v3M235.5 475v1M235.5 542v2M236.5 477v1M236.5 479v2M236.5 541v2M241.5 538v1M241.5 540v1M241.5 542v1M246.5 540v1M247.5 471v1M247.5 482v1M247.5 488v1M250.5 542v1M251.5 541v1M256.5 539v1M262.5 541v1M272.5 540v1M273.5 539v1M277.5 541v1M278.5 541v1M279.5 483v1M282.5 476v1M282.5 541v2M288.5 541v1M289.5 541v1M289.5 543v1M295.5 542v1M301.5 541v2M305.5 539v2M306.5 540v2M310.5 472v1M310.5 542v1M311.5 478v1M311.5 481v1M311.5 539v1M311.5 541v2M312.5 488v1M315.5 543v1M316.5 539v1M316.5 543v1M328.5 540v1M332.5 475v1M332.5 493v1M332.5 543v1M333.5 480v1M333.5 540v1M339.5 541v1M349.5 475v1M349.5 543v1M354.5 541v3M356.5 483v1M360.5 543v1M366.5 539v1M367.5 541v2M372.5 542v1M378.5 539v1M378.5 543v1M389.5 539v3M389.5 543v1M390.5 479v2M390.5 540v1M390.5 543v1M391.5 482v1M396.5 541v2M402.5 539v1M407.5 543v1M408.5 539v1M408.5 541v1M408.5 543v1M420.5 539v1M427.5 543v2M433.5 544v1M434.5 539v1M434.5 541v1M434.5 547v1M440.5 544v1M440.5 548v2M446.5 544v2M448.5 549v1M452.5 547v1M452.5 549v2M460.5 550v1M466.5 544v1M466.5 549v1M473.5 541v2M474.5 541v1M474.5 544v1M480.5 543v1" stroke="#1edcb4" stroke-width="1" fill="none"/>
<path d="M122.5 541v1M125.5 539v1M135.5 540v1M135.5 543v1M140.5 539v1M146.5 541v1M149.5 539v1M150.5 542v1M154.5 540v1M155.5 540v1M163.5 539v1M163.5 542v1M164.5 539v1M164.5 542v2M169.5 477v1M169.5 543v1M174.5 540v3M175.5 539v1M184.5 540v1M185.5 539v1M189.5 541v2M194.5 539v1M194.5 543v1M198.5 541v1M219.5 539v1M219.5 541v2M225.5 542v1M229.5 476v1M229.5 543v1M230.5 539v1M230.5 543v1M241.5 541v1M241.5 543v1M245.5 540v2M256.5 540v1M256.5 542v1M278.5 542v1M283.5 540v1M301.5 543v1M305.5 542v1M311.5 540v1M328.5 539v1M332.5 541v1M339.5 539v1M339.5 543v1M344.5 541v1M366.5 540v1M366.5 543v1M372.5 539v2M389.5 542v1M408.5 542v1M421.5 539v2M434.5 544v2M434.5 548v1M440.5 546v2M447.5 545v1M447.5 549v1M452.5 548v1M460.5 549v1M474.5 542v1" stroke="#46e682" stroke-width="1" fill="none"/>
<path d="M150.5 540v1M229.5 539v1M245.5 539v1M305.5 541v1M332.5 542v1M452.5 544v1" stroke="#64e664" stroke-width="1" fill="none"/>
<rect x="8" y="316" width="72" height="258" fill="#c0c0c0"/>
<rect x="8" y="316" width="71" height="1" fill="#808080"/>
<rect x="8" y="316" width="1" height="258" fill="#808080"/>
<rect x="8" y="574" width="72" height="1" fill="#fff"/>
<rect x="79" y="316" width="1" height="259" fill="#fff"/>
<rect x="78" y="317" width="1" height="257" fill="#000"/>
<path d="M10 339.5H77" stroke="#808080" stroke-width="1" stroke-dasharray="3.5 2.5"/>
<path d="M10 360.5H77" stroke="#808080" stroke-width="1" stroke-dasharray="3.5 2.5"/>
<path d="M10 381.5H77" stroke="#808080" stroke-width="1" stroke-dasharray="3.5 2.5"/>
<path d="M10 403.5H77" stroke="#808080" stroke-width="1" stroke-dasharray="3.5 2.5"/>
<path d="M10 424.5H77" stroke="#808080" stroke-width="1" stroke-dasharray="3.5 2.5"/>
<path d="M10 445.5H77" stroke="#808080" stroke-width="1" stroke-dasharray="3.5 2.5"/>
<path d="M10 467.5H77" stroke="#808080" stroke-width="1" stroke-dasharray="3.5 2.5"/>
<path d="M10 488.5H77" stroke="#808080" stroke-width="1" stroke-dasharray="3.5 2.5"/>
<path d="M10 509.5H77" stroke="#808080" stroke-width="1" stroke-dasharray="3.5 2.5"/>
<path d="M10 531.5H77" stroke="#808080" stroke-width="1" stroke-dasharray="3.5 2.5"/>
<path d="M10 552.5H77" stroke="#808080" stroke-width="1" stroke-dasharray="3.5 2.5"/>
<path d="M10 573.5H77" stroke="#808080" stroke-width="1" stroke-dasharray="3.5 2.5"/>
<path d="M76 432.5H78M77 433.5H78M77 434.5H78M75 435.5H78M77 436.5H78M76 437.5H78M76 438.5H78M75 439.5H78M74 440.5H78M74 441.5H78M74 442.5H78M74 443.5H78M74 444.5H78M72 445.5H78M73 446.5H78M71 447.5H78M72 448.5H78M71 449.5H78M70 450.5H78M71 451.5H78M70 452.5H78M69 453.5H78M69 454.5H78M68 455.5H78M68 456.5H78M69 457.5H78M68 458.5H78M69 459.5H78M68 460.5H78M68 461.5H78M68 462.5H78M68 463.5H78M68 464.5H78M68 465.5H78M64 466.5H78M64 467.5H78M61 468.5H78M63 469.5H78M60 470.5H78M54 471.5H78M53 472.5H78M48 473.5H78M46 474.5H78M47 475.5H78M47 476.5H78M46 477.5H78M45 478.5H78M43 479.5H78M44 480.5H78M45 481.5H78M41 482.5H78M41 483.5H78M38 484.5H78M41 485.5H78M38 486.5H78M41 487.5H78M46 488.5H78M44 489.5H78M51 490.5H78M51 491.5H78M55 492.5H78M58 493.5H78M50 494.5H78M62 495.5H78M58 496.5H78M66 497.5H78M67 498.5H78M69 499.5H78M64 500.5H78M65 501.5H78M63 502.5H78M62 503.5H78M61 504.5H78M61 505.5H78M50 506.5H78M58 507.5H78M52 508.5H78M55 509.5H78M52 510.5H78M52 511.5H78M50 512.5H78M51 513.5H78M45 514.5H78M41 515.5H78M47 516.5H78M48 517.5H78M50 518.5H78M51 519.5H78M49 520.5H78M51 521.5H78M54 522.5H78M53 523.5H78M53 524.5H78M58 525.5H78M58 526.5H78M60 527.5H78M59 528.5H78M59 529.5H78M63 530.5H78M62 531.5H78M60 532.5H78M58 533.5H78M52 534.5H78M56 535.5H78M50 536.5H78M44 537.5H78M37 538.5H78M29 539.5H78M22 540.5H78M10 541.5H78M21 542.5H78M31 543.5H78M35 544.5H78M45 545.5H78M51 546.5H78M55 547.5H78M57 548.5H78M57 549.5H78M59 550.5H78M65 551.5H78M63 552.5H78M67 553.5H78M69 554.5H78M73 555.5H78M76 556.5H78M76 557.5H78M78 558.5H78" stroke="#000" stroke-width="1"/>
<text x="8.2" y="590" font-family="Liberation Sans" font-size="14.3" textLength="67.3" lengthAdjust="spacingAndGlyphs">0.000- 9.571</text>
</svg></body></html>
